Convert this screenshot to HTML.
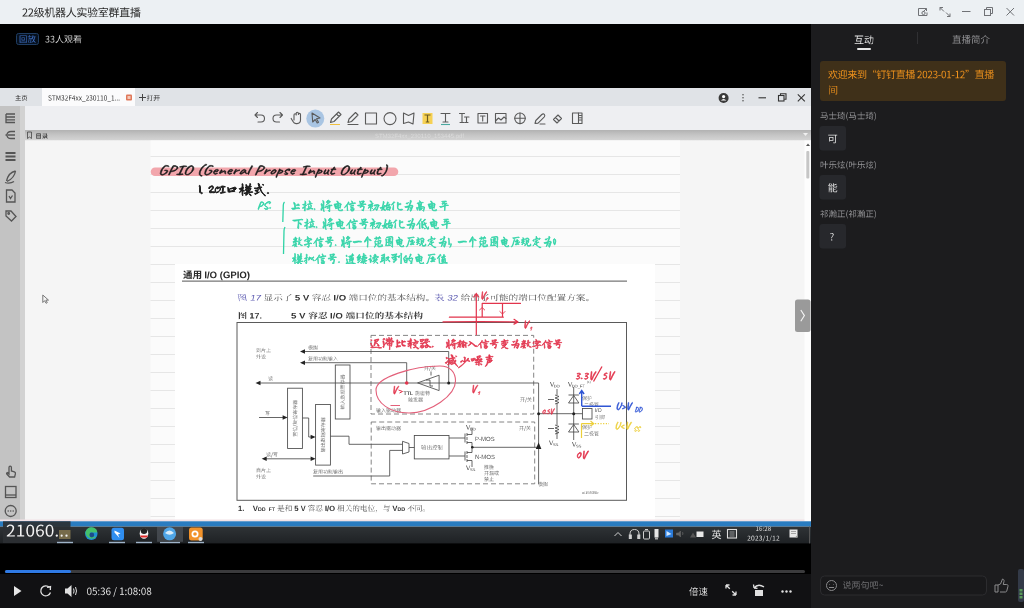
<!DOCTYPE html>
<html><head><meta charset="utf-8"><style>
*{margin:0;padding:0}
html,body{width:1024px;height:608px;overflow:hidden;background:#000;font-family:"Liberation Sans",sans-serif}
svg{display:block;filter:blur(.35px)}
</style></head><body>
<svg width="1024" height="608" viewBox="0 0 1024 608"><rect x="0" y="0" width="1024" height="24" fill="#ecf0f3"/>
<rect x="0" y="24" width="811" height="584" fill="#000"/>
<rect x="811" y="24" width="213" height="584" fill="#1c1c1e"/>
<path transform="scale(0.2)" fill="#2a2a2a" d="M112 82l26 0 0-4-18 1 11-13 4-7 1-6-1-5-2-3-4-3-8 0-4 1-5 4 3 3 6-4 6 0 2 2 2 6-1 5-4 6-14 15zm29 0l26 0 0-4-18 1 12-13 3-7 1-6-1-5-2-3-4-3-8 0-4 1-5 4 3 3 6-4 6 0 2 2 2 6-1 5-4 6-14 15zm29 -3l1 4 19-7-1-3zm20 -39l0 4 6 0-1 12-1 11-3 10-5 7 4 3 3-5 2-6 4-13 6 12-5 5-6 4 3 3 6-4 5-5 5 5 5 4 3-4-5-3-5-5 5-8 3-11-3-1-6 0 4-15zm10 4l9 0-4 15 9 0-2 7-4 6-5-8-3-9zm-29 15l9-1-7 9-3 2 1 4 18-6 0-4-11 3 12-16-4-2-3 6-8 1 10-17-4-2-7 14-4 5zm78 -20l0 25-1 7-3 7-4 6 3 3 5-7 2-8 2-8 0-21 10 0 1 40 2 3 7 0 2-4 0-8-3-2 0 10-4 0-1-1 0-42zm-15 -3l0 12-10 0 0 4 9 0-4 12-6 9 2 4 5-8 4-9 0 27 4 0 0-25 5 8 3-4-8-9 0-5 8 0 0-4-8 0 0-12zm52 6l9 0 0 8-9 0zm23 0l10 0 0 8-10 0zm0 14l7 3-16 0 3-5-4-1 0-14-17 0 0 15 17 0-4 5-17 0 0 4 13 0-6 5-8 4 2 3 3-2 0 14 4 0 0-2 9 0 0 2 4 0 0-17-10 0 8-7 10 0 9 7-10 0 0 17 3 0 0-2 10 0 0 2 4 0 0-14 3 1 3-3-9-3-8-5 15 0 0-4-9 0 1-1-8-4zm-4 -17l0 15 18 0 0-15zm-19 43l0-8 9 0 0 8zm23 0l0-8 10 0 0 8zm45 -46l-1 10-2 13-7 13-13 11 3 4 9-7 6-7 5-8 2-9 3 8 4 9 7 7 9 6 3-3-12-9-7-11-4-11-1-7 0-9zm58 41l10 4 9 6 2-4-9-5-10-4zm-17 -25l8 6 3-3-8-6zm-5 8l8 7 3-3-9-6zm-3 -17l0 11 4 0 0-8 37 0 0 8 4 0 0-11-19 0-3-7-4 1 2 6zm-1 25l0 4 20 0-3 4-4 3-12 4 2 4 8-3 6-3 5-4 3-5 22 0 0-4-21 0 1-8 1-11-4 0-1 11-2 8zm51 6l1 4 14-4 0-3zm28 -21l0 4 16 0 0-4zm-4 10l4 13 3-1-4-13zm10 -2l2 13 4 0-3-13zm-30 -15l-1 19 14 0-1 13-1 4-8 1 1 3 7 0 2-1 2-2 2-10 0-11-4 0 2-23-17 0 0 3 13 0-2 20-6 0 1-15zm31 -10l-7 11-9 8 3 3 7-7 7-8 6 8 8 7 2-4-11-10-3-4 1-3zm-13 45l0 3 29 0 0-3-9 0 8-19-4-1-7 20zm38 -10l0 3 17 0 0 8-22 0 0 3 49 0 0-3-22 0 0-8 17 0 0-3-17 0 0-6-5 0 0 6zm3 -5l30-3 3 3 3-2-10-10-3 2 4 4-21 1 9-8 20 0 0-3-36 0 0 3 11 0-7 6-5 3zm13 -29l2 4-22 0 0 10 4 0 0-6 39 0 0 6 4 0 0-10-20 0-3-5zm59 1l4 9 4-1-4-9zm17 -2l-4 10 4 1 4-10zm-19 34l0 4 11 0 0 13 4 0 0-13 11 0 0-4-11 0 0-8 8 0 0-4-8 0 0-7 9 0 0-4-22 0 0 4 9 0 0 7-9 0 0 4 9 0 0 8zm-6 -18l0 5-8 0 1-5zm-16 -13l0 4 6 0 0 5-9 0 0 4 8 0-1 5-4 0 0 4 4 0-3 7-5 6 3 3 4-5 0 15 3 0 0-3 15 0 0-18-15 0 2-5 12 0 0-9 3 0 0-4-3 0 0-9zm16 9l-6 0 0-5 6 0zm-10 22l11 0 0 10-11 0zm52 -21l0 32-7 0 0 4 50 0 0-4-8 0 0-32-18 0 1-4 23 0 0-4-22 0 1-4-5-1 0 5-21 0 0 4 20 0-1 4zm4 12l27 0 0 4-27 0zm0 -4l0-4 27 0 0 4zm0 11l27 0 0 5-27 0zm0 13l0-5 27 0 0 5zm84 -39l-4 9-3 0 0-9 12-2-2-3-28 3 1 3 13-1 0 9-14 0 0 3 11 0-6 6-8 4 3 3 3-1 0 21 4 0 0-3 19 0 0 3 4 0 0-21 2 1 2-3-7-4-6-6 12 0 0-3-8 0 4-8zm-21 2l3 7 3-2-3-6zm10 11l0 9 4 0 0-9 5 6 7 5-27 0 6-5zm0 14l0 4-7 0 0-4zm4 0l8 0 0 4-8 0zm-4 8l0 4-7 0 0-4zm4 0l8 0 0 4-8 0zm-28 -41l0 11-7 0 0 4 7 0 0 12-8 2 1 4 7-2 0 16-6 0 1 4 6 0 2-2 1-20 5-2 0-4-5 2 0-10 6 0 0-4-6 0 0-11z"/>
<g fill="none" stroke="#707276" stroke-width="1">
  <path d="M924.5 8.5 h-6 v7 h8.5 v-3"/><path d="M923 12 l3.5 -3.5 M924 8.5 h2.5 v2.5"/><circle cx="923.5" cy="13" r="1.6"/>
  <path d="M940 7.5 l4 4 M940 7.5 v3 M940 7.5 h3 M950 16.5 l-4 -4 M950 16.5 v-3 M950 16.5 h-3"/>
  <path d="M962 11.5 H970.5"/>
  <rect x="984.5" y="9.5" width="6" height="6"/><path d="M986.5 9.5 V7.5 H992.5 V13.5 H990.5"/>
  <path d="M1006.5 8 L1014 15.5 M1014 8 L1006.5 15.5"/>
</g>
<rect x="16.5" y="33.5" width="22" height="11" rx="2" fill="#06101d" stroke="#1f3d63" stroke-width="1"/>
<path transform="scale(0.2)" fill="#3f6fc4" d="M111 190l10 0 0 9-10 0zm-3 -3l0 15 16 0 0-15zm-10 -10l0 37 4 0 0-2 29 0 0 2 3 0 0-37zm4 32l0-29 29 0 0 29zm44 -33l2 6 3-1-2-6zm-7 6l0 3 5 0 0 9-1 9-1 5-3 4 2 2 3-4 2-5 1-11 6 0-1 17-5 0 0 3 7 0 1-3 1-4 0-16-9 0 0-6 11 0 0-3zm25 4l8 0-4 14zm0 -11l-3 11-5 8 3 3 3-6 4 12-4 5-6 4 2 2 5-3 5-5 4 5 5 3 2-2-5-4-4-5 3-7 2-10 3 0 0-3-13 0 2-7z"/>
<path transform="scale(0.2)" fill="#d8d8d8" d="M237 213l4-1 3-1 3-3 0-4-2-6-5-3 5-3 1-2 0-6-2-3-3-2-4 0-5 1-4 3 2 2 3-2 4-1 2 1 3 2 0 5-2 2-3 1-4 1 0 3 5 0 3 2 2 2 0 5-4 3-2 1-5-1-4-3-2 3 4 3zm25 0l4-1 3-1 3-3 0-4-2-6-5-3 5-3 1-2 0-6-2-3-3-2-4 0-5 1-5 3 3 2 3-2 4-1 2 1 3 2 0 5-2 2-3 1-4 1 0 3 5 0 3 2 2 2 0 5-4 3-2 1-5-1-4-3-2 3 4 3zm34 -38l-1 7-2 11-5 11-11 9 3 3 7-5 5-6 3-7 3-7 5 13 6 7 7 5 2-3-9-7-6-9-4-16 0-6zm45 2l0 24 3 0 0-21 13 0 0 21 4 0 0-24zm8 7l-1 14-1 5-4 6-7 5 2 2 9-7 4-8 0 10 1 3 7 1 2 0 1-2 1-7-2-1-1 7-5 1-1-1 0-12-3 0 1-16zm-26 3l7 12-4 7-5 6 3 2 4-5 4-6 3 7 3-2-4-9 3-10 1-10-2-1-14 0 0 3 13 0-3 14-7-9zm57 16l20 0 0 3-20 0zm0 -3l0-3 20 0 0 3zm0 8l20 0 0 4-20 0zm22 -33l-14 2-18 0 1 3 12 0-1 3-11 0 0 2 10 0-1 4-12 0 0 3 10 0-5 6-7 5 3 3 8-7 0 17 3 0 0-2 20 0 0 2 3 0 0-21-23 0 2-3 25 0 0-3-23 0 1-4 20 0 0-2-19 0 1-4 17-2z"/>
<path transform="scale(0.2)" fill="#ededed" d="M4273 216l0 4 45 0 0-4-13 0 4-26-21 0 1-8 27 0 0-4-42 0 0 4 11 0-5 26 23 0-2 8zm14 -22l17 0-1 10-18 0zm37 -14l0 3 20 0 0-3zm29 -4l-1 11-7 0 0 4 7 0-2 16-3 6-4 6 3 2 4-6 3-7 3-17 8 0-1 19-2 7-9 0 2 4 9-1 2-4 2-29-11 0 0-11zm-29 39l17-4 1 3 4-1-6-14-3 1 3 8-12 2 6-15 11 0 0-4-22 0 0 4 7 0-4 11-3 6z"/>
<rect x="857" y="48" width="14" height="2" rx="1" fill="#e8e8e8"/>
<rect x="917" y="32" width="1" height="12" fill="#303033"/>
<path transform="scale(0.2)" fill="#8f8f92" d="M4769 186l0 28-7 0 0 3 43 0 0-3-6 0 0-28-15 0 0-4 20 0 0-3-19 0 1-4-4 0-1 4-17 0 0 3 17 0-1 4zm3 10l23 0 0 4-23 0zm0 -3l0-4 23 0 0 4zm0 10l23 0 0 4-23 0zm0 11l0-5 23 0 0 5zm74 -34l-4 7-2 0 0-7 10-2-2-3-23 3 0 3 11-1 0 7-12 0 0 3 9 0-5 6-6 3 2 3 3-2 0 19 3 0 0-2 17 0 0 1 3 0 0-18 2 1 2-2-6-4-5-5 9 0 0-3-6 0 3-6zm-18 2l2 5 3-1-3-5zm8 10l0 7 4 0 0-8 4 5 6 4-23 0 5-4zm0 11l0 4-6 0 0-4zm3 0l8 0 0 4-8 0zm-3 7l0 4-6 0 0-4zm3 0l8 0 0 4-8 0zm-24 -35l0 10-6 0 0 3 6 0 0 10-6 2 1 4 5-3 0 14-5 0 1 4 5-1 2-1 1-17 5-2-1-3-4 2 0-9 5 0 0-3-5 0 0-10zm45 18l0 26 4 0 0-26zm2 -4l6 6 2-2-5-5zm8 8l0 16 18 0 0-16zm-5 -22l-3 6-5 6 3 2 5-7 3 0 3 6 3-1-2-5 6 0 0-3-11 0 1-3zm18 0l-2 6-4 5 3 2 4-6 4 0 3 6 3-1-3-5 8 0 0-3-14 0 2-3zm1 31l0 4-11 0 0-4zm-11 -7l11 0 0 4-11 0zm-1 -10l0 4 22 0 0 22-7 0 1 4 9-2 0-2 0-26zm61 5l0 25 4 0 0-25zm-17 0l-1 10-1 4-3 5-5 3 3 3 5-4 4-5 1-5 0-11zm10 -19l-4 5-5 5-6 4-7 3 2 4 11-7 9-8 9 8 11 6 3-3-12-6-5-4-4-4 1-1z"/>
<rect x="820" y="61" width="186" height="40" rx="3" fill="#3f3019"/>
<path transform="scale(0.2)" fill="#ee911c" d="M4143 364l9 12-5 8-6 5 3 3 5-5 5-7 4 7 2-2-4-9 3-9 2-12-2 0-17 0 0 3 16 0-5 15-8-12zm24 -15l-2 10-4 9 3 2 5-10 14 0-2 7 3 1 3-11-2-1-15 1 1-7zm5 14l-1 10-1 6-5 7-7 6 2 3 6-4 3-4 5-9 4 10 4 4 4 3 3-3-6-4-3-5-5-13 0-7zm20 -9l9 7 2-3-9-6zm9 12l-10 0 0 4 6 0 0 16-7 6 3 3 3-4 3-2 11 5 25 0 1-4-13 1-12-1-6-2-4-2zm18 -13l0 36 4 0 0-33 8 0 0 23-6 0 1 4 6-1 2-1 0-1 0-27zm-14 30l13-5 0-3-8 3 0-22 9-4-3-3-10 5 0 22-1 3-1 1zm69 -23l-5 10 4 1 5-10zm-28 1l4 10 4-2-5-9zm14 -12l0 6-18 0 0 4 18 0 0 12-20 0 0 4 17 0-8 8-11 7 3 3 5-3 10-8 4-5 0 18 4 0 0-18 8 9 10 7 3-3-10-7-9-8 18 0 0-4-20 0 0-12 18 0 0-4-18 0 0-6zm57 4l0 31 4 0 0-31zm10 -3l0 40-8 0 2 4 8-1 2-2 0-41zm-39 39l1 3 25-4 0-4-11 2 0-8 10 0 0-3-10 0 0-5-3 0 0 5-10 0 0 3 10 0 0 9zm3 -20l19-2 1 3 3-2-7-11-3 2 4 5-13 1 6-9 13 0 0-4-25 0 0 4 8 0-4 6-3 4zm81 -18l-1-2-2 1-4 5 0 5 2 2 3 0 2-1-1-4-4 0 2-4zm9 0l-1-2-2 1-3 5 0 5 2 2 3 0 1-1 0-4-4 0 1-4zm24 2l0 4 13 0 0 33-8 1 2 4 8-1 1-2 1-2 0-33 8 0 0-4zm-14 -4l-3 7-5 5 2 4 5-7 13 0 0-3-11 0 2-5zm1 46l12-7 0-3-8 3 0-11 9 0 0-3-9 0 0-7 7 0 0-3-16 0 0 3 5 0 0 7-7 0 0 3 7 0 0 11-2 3zm62 -42l0 4 12 0 0 33-8 1 2 4 8-1 2-2 0-2 0-33 8 0 0-4zm-15 -4l-3 7-4 5 2 4 5-7 13 0 0-3-11 0 2-5zm1 46l13-7-1-3-8 3 0-11 9 0 0-3-9 0 0-7 7 0 0-3-16 0 0 3 6 0 0 7-8 0 0 3 8 0 0 11-2 3zm48 -34l0 29-7 0 0 3 45 0 0-3-7 0 0-29-16 0 1-4 21 0 0-4-20 0 0-4-4 0 0 4-19 0 0 4 18 0 0 4zm4 10l24 0 0 4-24 0zm0 -3l0-4 24 0 0 4zm0 10l24 0 0 4-24 0zm0 12l0-5 24 0 0 5zm75 -36l-3 8-3 0 0-8 11-2-2-3-25 3 1 3 11-1 0 8-13 0 0 3 10 0-5 6-7 3 2 3 3-1 0 19 3 0 0-2 18 0 0 2 4 0 0-19 1 1 3-3-7-4-5-5 10 0 0-3-7 0 4-7zm-19 2l3 6 3-1-3-6zm9 10l0 9 4 0 0-9 5 5 5 5-24 0 6-5zm0 12l0 5-7 0 0-5zm3 0l8 0 0 5-8 0zm-3 8l0 4-7 0 0-4zm3 0l8 0 0 4-8 0zm-25 -37l0 10-6 0 0 4 6 0 0 10-7 2 1 4 6-2 0 14-5 0 1 4 5 0 2-2 1-18 5-2-1-3-4 2 0-9 5 0 0-4-5 0 0-10zm52 42l23 0 0-4-16 0 10-11 3-6 1-6-1-4-2-3-3-3-8 0-3 1-4 4 2 3 6-4 5 0 2 1 2 6-1 5-3 5-13 13zm38 1l4-2 4-3 2-6 1-8-1-9-2-6-4-3-4-1-5 1-4 3-2 6-1 9 1 8 2 6 4 3zm0 -4l-3-1-2-3-2-5 0-6 0-7 2-5 2-3 3-1 3 1 2 3 1 5 1 7-1 6-1 5-2 3zm14 3l23 0 0-4-16 0 10-11 3-6 1-6 0-4-2-3-4-3-8 0-2 1-5 4 3 3 5-4 5 0 2 1 2 6-1 5-3 5-13 13zm37 1l5-1 4-2 2-3 1-5-1-3-1-3-6-3 5-4 1-2 1-3-1-4-2-3-4-2-4 0-6 1-4 3 2 3 4-3 4-1 2 1 4 3 0 5-2 2-3 2-5 0 0 4 5 0 4 2 2 2 0 6-4 3-3 1-5-1-4-3-3 3 5 3zm15 -13l13 0 0-4-13 0zm28 13l4-2 4-3 2-6 1-8-1-9-2-6-4-3-4-1-5 1-4 3-2 6-1 9 1 8 2 6 4 3zm0 -4l-3-1-2-3-2-5 0-6 0-7 2-5 2-3 3-1 3 1 2 3 1 5 1 7-1 6-1 5-2 3zm16 3l20 0 0-4-7 0 0-33-3 0-8 3 0 3 6 0 0 27-8 0zm24 -12l13 0 0-4-13 0zm18 12l20 0 0-4-7 0 0-33-4 0-7 3 0 3 6 0 0 27-8 0zm24 0l23 0 0-4-16 0 10-11 3-6 1-6 0-4-3-3-3-3-8 0-2 1-5 4 2 3 6-4 5 0 2 1 2 6-1 5-3 5-13 13zm35 -30l1 2 3-2 3-4 0-5-2-3-3 0-1 2 0 3 4 1-1 3zm-9 0l1 2 2-2 4-4 0-5-2-3-3 0-2 2 1 3 3 1-1 3zm56 0l0 29-7 0 0 3 45 0 0-3-7 0 0-29-16 0 1-4 20 0 0-4-19 0 0-4-4 0 0 4-19 0 0 4 18 0-1 4zm3 10l24 0 0 4-24 0zm0 -3l0-4 24 0 0 4zm0 10l24 0 0 4-24 0zm0 12l0-5 24 0 0 5zm76 -36l-4 8-3 0 0-8 12-2-2-3-25 3 0 3 12-1 0 8-13 0 0 3 10 0-6 6-6 3 2 3 3-1 0 19 3 0 0-2 18 0 0 2 3 0 0-19 2 1 2-3-6-4-5-5 10 0 0-3-7 0 3-7zm-19 2l3 6 3-1-3-6zm9 10l0 9 3 0 0-9 5 5 6 5-24 0 5-5zm0 12l0 5-7 0 0-5zm3 0l8 0 0 5-8 0zm-3 8l0 4-7 0 0-4zm3 0l8 0 0 4-8 0zm-25 -37l0 10-6 0 0 4 6 0 0 10-7 2 1 4 6-2 0 14-6 0 1 4 6 0 2-2 0-18 6-2-1-3-5 2 0-9 6 0 0-4-6 0 0-10z"/>
<path transform="scale(0.2)" fill="#ee911c" d="M4145 438l0 35 3 0 0-35zm0 -9l6 8 3-2-6-7zm14 25l12 0 0 7-12 0zm0 -10l12 0 0 7-12 0zm-3 -3l0 23 18 0 0-23zm2 -11l0 3 24 0 0 36-6 0 1 4 7-1 1-1 1-3 0-38z"/>
<path transform="scale(0.2)" fill="#98989b" d="M4102 586l0 4 28 0 0-4zm8 -18l-2 13 28 0-2 10-1 4-9 0 1 3 8 0 2-1 2-5 2-14-7 0 1-16-27 0 0 3 24 0-2 13-16 0 1-10zm52 -9l0 14-17 0 0 3 17 0 0 17-15 0 0 3 34 0 0-3-16 0 0-17 18 0 0-3-18 0 0-14zm50 0l0 5-10 0 0 2 9 0-3 5-7 3 2 2 6-2 4-4 10 6 2-2-11-6 0-2 11 0 0-2-10 0 0-5zm-11 18l0 2 18 0 0 16-5 1 0 2 8 0 0-3 0-16 4 0 0-2zm5 8l6 0 0 5-6 0zm-3 -3l0 13 3 0 0-2 9 0 0-11zm-17 9l1 3 13-4 0-3-5 1 0-11 4 0 0-3-4 0 0-9 5 0 0-3-13 0 0 3 5 0 0 9-5 0 0 3 5 0 0 12zm52 12l2-1-4-10-1-10 1-11 4-10-2-1-5 10-2 12 2 11zm6 -17l0 4 28 0 0-4zm7 -18l-1 13 27 0-1 10-2 4-8 0 1 3 8 0 2-1 2-5 2-14-8 0 2-16-27 0 0 3 24 0-2 13-16 0 1-10zm53 -9l0 14-17 0 0 3 17 0 0 17-15 0 0 3 33 0 0-3-15 0 0-17 18 0 0-3-18 0 0-14zm50 0l0 5-10 0 0 2 9 0-3 5-7 3 2 2 6-2 4-4 10 6 2-2-11-6 0-2 11 0 0-2-10 0 0-5zm-11 18l0 2 18 0 0 16-6 1 1 2 7 0 1-3 0-16 4 0 0-2zm5 8l6 0 0 5-6 0zm-3 -3l0 13 3 0 0-2 9 0 0-11zm-17 9l1 3 13-4 0-3-5 1 0-11 4 0 0-3-4 0 0-9 5 0 0-3-13 0 0 3 5 0 0 9-5 0 0 3 5 0 0 12zm46 12l4-10 2-11-2-12-4-10-3 1 4 10 2 11-2 10-4 10z"/>
<rect x="819.5" y="126" width="26.5" height="24.5" rx="3" fill="#27282c"/>
<path transform="scale(0.2)" fill="#e6e6e6" d="M4141 674l0 4 35 0 0 34-2 0-9 0 2 4 8 0 3-1 2-4 0-33 6 0 0-4zm9 15l13 0 0 11-13 0zm-4 -4l0 23 4 0 0-4 17 0 0-19z"/>
<path transform="scale(0.2)" fill="#98989b" d="M4103 809l0 27 3 0 0-3 10 0 0-11 10 0 0 21 4 0 0-21 11 0 0-3-11 0 0-14-4 0 0 14-10 0 0-10zm3 3l7 0 0 18-7 0zm47 16l-9 11 3 2 9-12zm19 2l8 11 3-2-8-11zm-24 -5l15 0 0 15-7 0 1 3 8-1 1-3 0-14 16 0 0-4-16 0 0-8-3 0 0 8-12 0 2-11 14 0 13-2-2-3-13 2-15 1-1 10-2 4zm41 -12l-2 10 2 1 2-11zm10 -1l-3 9 2 0 3-8zm11 -7l3 6-11 0 0 3 9 0-5 8-3 3 1 3 10-1-7 8-5 4 1 3 19-2 1 3 3-1-7-12-2 1 3 6-12 1 7-9 8-10-3-1-4 6-9 0 7-10 11 0 0-3-11 0 2-1-3-6zm-17 0l-1 26-2 5-3 5 2 2 3-5 2-6 5 6 2-2-6-7 1-24zm45 43l2-1-4-10-1-10 1-11 4-10-2-1-5 10-2 12 2 11zm7 -39l0 27 3 0 0-3 10 0 0-11 10 0 0 21 3 0 0-21 12 0 0-3-12 0 0-14-3 0 0 14-10 0 0-10zm3 3l7 0 0 18-7 0zm46 16l-8 11 3 2 8-12zm20 2l8 11 3-2-8-11zm-24 -5l15 0 0 15-7 0 1 3 8-1 1-3 0-14 16 0 0-4-16 0 0-8-3 0 0 8-12 0 2-11 14 0 13-2-2-3-13 2-15 1-2 10-1 4zm40 -12l-1 10 2 1 2-11zm11 -1l-3 9 2 0 3-8zm11 -7l3 6-11 0 0 3 9 0-5 8-3 3 1 3 9-1-6 8-5 4 1 3 19-2 1 3 2-1-6-12-2 1 3 6-13 1 8-9 8-10-3-1-4 6-9 0 7-10 11 0 0-3-11 0 2-1-4-6zm-17 0l-1 26-2 5-3 5 2 2 3-5 2-6 5 6 2-2-6-7 0-24zm39 43l4-10 2-11-2-12-4-10-3 1 4 10 2 11-2 10-4 10z"/>
<rect x="819.5" y="175" width="26.5" height="24.5" rx="3" fill="#27282c"/>
<path transform="scale(0.2)" fill="#e6e6e6" d="M4158 936l0 5-11 0 0-5zm-14 -3l0 28 3 0 0-10 11 0-1 7-5 0 1 3 7 0 1-2 0-2 0-24zm3 11l11 0 0 4-11 0zm34 -25l-11 5 0-8-4 0 0 16 1 4 5 1 9 0 4-1 1-6-3-2-1 6-11 0-1-1 0-6 14-5zm1 23l-12 5 0-8-4 0 0 17 1 4 5 1 9 0 3 0 1-2 2-6-4-2-1 6-11 1-1-1 0-7 14-6zm-39 -12l16-2 1 3 4-2-7-11-3 2 4 5-11 1 6-9-4-2-4 8-4 3z"/>
<path transform="scale(0.2)" fill="#98989b" d="M4108 1051l4 6-9 0 0 3 13 0-6 7-8 6 1 3 8-5 0 17 3 0 0-18 5 6 2-3-7-6 6-9-2-2-6 1 2-2-3-4-1-2zm16 1l0 36 3 0 0-33 9 0-6 11 5 5 1 2 0 5-2 1-5 0 1 3 4 0 3-1 2-3-1-7-4-6 6-12-2-2zm32 17l6 0 0 3-6 0zm0 -6l6 0 0 3-6 0zm10 6l3 6 2-1-4-6zm8 0l4 5 1-1-3-5zm-29 -17l5 5 2-1-5-6zm-1 11l5 6 2-2-5-5zm1 23l3 2 1-3 3-11-3-1zm20 -5l1 2 5-4 0 7-5 0 1 2 4 0 2-1 0-6 2 2 5-5-1 7-4 1 1 2 4 0 2-1 0-24 2-2-7-7-1-3 0-1-2-1-4 7-5 5 1 2 0 3 5 0 0 10-5 4 0-2-6 0 0-4 5 0 0-14-5 0 0-3 5 0 0-3-5 0 0-4-2 0 0 4-5 0 0 3 5 0 0 3-5 0 0 14 5 0 0 4-6 0 0 3 6 0 0 7 2 0 0-7zm9 -18l0 3 6 0 0 9-7 6 0-18-6 0 4-4 3-5 7 9zm19 0l0 20-6 0 0 3 38 0 0-3-16 0 0-13 13 0 0-3-13 0 0-11 15 0 0-4-35 0 0 4 17 0 0 27-10 0 0-20zm45 30l2-1-4-10-1-10 1-11 4-10-2-1-5 10-2 12 2 11zm12 -42l4 6-9 0 0 3 13 0-7 7-7 6 1 3 7-5 0 17 4 0 0-18 5 6 2-3-7-6 6-9-2-2-6 1 2-2-3-4-1-2zm16 1l0 36 3 0 0-33 9 0-6 11 5 5 1 2 0 5-2 1-5 0 1 3 4 0 3-1 2-3-1-7-4-6 6-12-2-2zm31 17l7 0 0 3-7 0zm0 -6l7 0 0 3-7 0zm11 6l3 6 2-1-4-6zm8 0l3 5 2-1-3-5zm-29 -17l5 5 2-1-5-6zm-1 11l5 6 2-2-5-5zm1 23l3 2 1-3 2-11-2-1zm20 -5l1 2 5-4 0 7-5 0 1 2 4 0 2-1 0-6 1 2 5-5 0 7-4 1 1 2 4 0 2-1 0-24 2-2-7-7-2-3 1-1-3-1-3 7-5 5 1 2 0 3 5 0 0 10-6 4 0-2-5 0 0-4 5 0 0-14-5 0 0-3 5 0 0-3-5 0 0-4-3 0 0 4-5 0 0 3 5 0 0 3-4 0 0 14 4 0 0 4-5 0 0 3 5 0 0 7 3 0 0-7zm9 -18l0 3 5 0 0 9-6 6 0-18-6 0 4-4 3-5 7 9zm19 0l0 20-6 0 0 3 38 0 0-3-16 0 0-13 13 0 0-3-13 0 0-11 15 0 0-4-35 0 0 4 17 0 0 27-10 0 0-20zm39 30l4-10 2-11-2-12-4-10-3 1 4 10 2 11-2 10-4 10z"/>
<rect x="819.5" y="224" width="26.5" height="24.5" rx="3" fill="#27282c"/>
<path transform="scale(0.2)" fill="#e6e6e6" d="M4156 1191l4 0 1-5 6-8 2-5-1-3-2-3-3-2-7 0-6 4 2 2 3-2 4-1 2 1 3 2 0 3-1 4-6 8zm3 12l2-1 1-2-1-3-2-1-3 1-1 3 1 2z"/>
<rect x="820.5" y="576" width="166" height="19" rx="4" fill="#19191b" stroke="#2c2c2f"/>
<g fill="none" stroke="#8a8a8c" stroke-width="1">
    <circle cx="831.5" cy="585.5" r="5"/><path d="M829 584.5 h.5 M833.5 584.5 h.5 M829 587.5 h5"/>
    <path d="M995 592 h3 v-7 h-3 z M998 585 l2.5 -1 l2 -5 c1 0 1.8 1 1.5 2.5 l-.8 3 h3.5 c1 0 1.5 .8 1.3 1.7 l-1.3 5 c-.2 .6 -.7 .8 -1.3 .8 h-5.4"/>
</g>
<path transform="scale(0.2)" fill="#6f6f72" d="M4217 2908l7 7 3-2-7-7zm16 9l15 0 0 8-15 0zm-13 27l11-8-1-3-6 4 0-18-9 0 0 3 6 0 0 15-3 4zm10 -30l0 14 5 0-2 9-3 4-4 3 2 2 5-3 3-4 3-11 4 0 0 13 1 4 3 0 6 0 2-1 1-6-3-1-1 5-6 0 0-14 6 0 0-14-5 0 4-8-4-1-4 9-7 0 3-2-4-7-3 1 4 8zm32 3l0 29 3 0 0-26 7 0-1 9-2 4-3 4 2 3 4-5 2-6 4 5 2-2-5-7 1-5 8 0-1 9-2 4-4 4 3 3 4-6 2-5 6 8 2-2-7-10 0-5 8 0 0 22-9 1 2 3 7 0 3-2 0-27-11 0 0-6 13 0 0-3-40 0 0 3 12 0 0 6zm14 -6l8 0 0 6-8 0zm37 10l0 20 3 0 0-4 15 0 0-16zm3 3l11 0 0 10-11 0zm-1 -19l-4 11-7 8 3 2 8-11 25 0-1 20-2 7-1 1-9 0 2 3 10 0 3-5 1-5 1-25-27 0 2-5zm36 4l0 29 3 0 0-4 9 0 0-25zm3 3l6 0 0 19-6 0zm16 -1l6 0 0 14-6 0zm-3 -3l0 34 1 2 2 1 18 0 1-2 2-6-3-1-1 5-1 1-15 0-1-14 16 0 0 3 3 0 0-23zm19 17l-6 0 0-14 6 0zm23 5l4-1 3-4-3-2-1 3-2 0-7-3-4-1-5 5 3 1 1-2 2-1z"/>
<rect x="1018" y="569" width="6" height="33" rx="2" fill="#333a48"/>
<rect x="1019.5" y="589" width="3" height="2.5" fill="#5a9a5a"/><rect x="1019.5" y="592.5" width="3" height="2.5" fill="#5a9a5a"/><rect x="1019.5" y="596" width="3" height="2.5" fill="#5a9a5a"/>
<rect x="0" y="574" width="811" height="34" fill="#111113"/>
<rect x="5" y="570" width="800" height="3" rx="1.5" fill="#3b3b3d"/>
<rect x="5" y="570" width="66" height="3" rx="1.5" fill="#2f7ae5"/>
<g transform="translate(0,574)" fill="none" stroke="#e0e0e0" stroke-width="1.3">
    <path d="M14 12 L21.5 17 L14 22 Z" fill="#e6e6e6" stroke="none"/>
    <path d="M49.5 13.5 A5 5 0 1 0 50.5 18.5"/><path d="M47 13.3 L50.5 12.5 L50.3 16" />
    <path d="M65 14.5 h2.5 l4 -3.5 v12 l-4 -3.5 h-2.5 z" fill="#e0e0e0" stroke="none"/>
    <path d="M73.5 14.5 q1.2 2.5 0 5 M75.5 13 q2 4 0 8" stroke-width="1"/>
    <path d="M726 11 l3.8 3.8 M726 11 v3.5 M726 11 h3.5 M736 21 l-3.8 -3.8 M736 21 v-3.5 M736 21 h-3.5"/>
    <path d="M754 14 q4 -5 10 -1 M754 14 l-.5 -3.5 M754 14 l3.5 .3"/><rect x="755" y="16" width="8" height="6" fill="#e0e0e0" stroke="none"/>
    <circle cx="782.5" cy="17.5" r="1.2" fill="#e0e0e0" stroke="none"/><circle cx="786.5" cy="17.5" r="1.2" fill="#e0e0e0" stroke="none"/><circle cx="790.5" cy="17.5" r="1.2" fill="#e0e0e0" stroke="none"/>
</g>
<path transform="scale(0.2)" fill="#e2e2e2" d="M446 2976l5-2 4-3 2-6 1-8-1-9-2-6-4-3-5-1-4 1-4 3-2 6-1 9 1 8 2 6 4 3zm0 -4l-2-1-3-3-1-5-1-6 1-7 1-5 3-3 2-1 3 1 2 3 2 5 0 7 0 6-2 5-2 3zm27 4l4-1 4-3 3-4 1-5-1-5-2-4-4-2-4-1-6 2 1-11 14 0 0-4-18 0-1 17 2 2 5-2 5 0 2 2 2 3 0 3 0 4-2 3-3 1-6 1-6-4-2 3 5 3zm21 -20l2-1 1-3-1-3-2-1-2 1-1 3 1 3zm0 20l2-1 1-3-1-2-2-1-2 1-1 2 1 3zm20 0l4-1 4-2 2-3 1-5 0-3-2-3-5-3 4-4 2-2 0-3-1-4-2-3-3-2-5 0-5 1-5 3 3 3 3-3 4-1 3 1 3 3 0 5-2 2-3 2-5 0 0 4 6 0 3 2 2 2 0 6-4 3-3 1-5-1-4-3-2 3 4 3zm29 0l4-1 3-3 2-3 1-5 0-5-3-4-3-2-6 0-6 4 1-8 2-4 3-3 5 0 4 2 3-3-4-2-5-1-5 1-4 3-3 6-2 10 1 7 3 6 4 4zm-8 -16l6-4 4 0 2 2 1 2 0 7-1 3-4 2-3-1-3-2-1-4zm31 24l4 0 14-49-3 0zm34 -9l20 0 0-4-7 0 0-33-4 0-8 3 0 3 7 0 0 27-8 0zm30 -19l2-1 1-3-1-3-2-1-3 1-1 3 1 3zm0 20l2-1 1-3-1-2-2-1-3 1-1 2 1 3zm20 0l5-2 3-3 3-6 0-8 0-9-3-6-3-3-5-1-5 1-3 3-3 6 0 9 0 8 3 6 3 3zm0 -4l-3-1-2-3-2-5 0-6 0-7 2-5 2-3 3-1 3 1 2 3 1 5 1 7-1 6-1 5-2 3zm27 4l5-1 4-2 2-3 1-4-2-6-4-3 4-7 0-6-2-3-3-2-5-1-4 0-3 2-2 3 0 7 4 6-4 4-2 6 0 4 3 3 4 2zm3 -21l-6-3-2-2 0-5 3-3 5 0 3 3 0 5zm-3 17l-5-2-2-4 1-5 4-4 7 4 2 2 0 3-2 5zm21 -16l2-1 1-3-1-3-2-1-3 1-1 3 1 3zm0 20l2-1 1-3-1-2-2-1-3 1-1 2 1 3zm20 0l5-2 3-3 2-6 1-8-1-9-2-6-3-3-5-1-5 1-3 3-3 6-1 9 1 8 3 6 3 3zm0 -4l-3-1-2-3-2-5 0-6 0-7 2-5 2-3 3-1 3 1 2 3 1 5 1 7-1 6-1 5-2 3zm27 4l5-1 3-2 3-3 1-4-2-6-4-3 4-7 0-6-2-3-3-2-5-1-4 0-3 2-2 3 0 7 4 6-4 4-2 6 0 4 3 3 4 2zm3 -21l-6-3-2-2 0-5 3-3 5 0 3 3 0 5zm-3 17l-5-2-2-4 1-5 4-4 6 4 3 2 0 3-2 5z"/>
<path transform="scale(0.2)" fill="#e2e2e2" d="M3465 2945l3 8 3-1-3-8zm-1 16l0 18 3 0 0-2 16 0 0 2 3 0 0-18zm3 12l0-9 16 0 0 9zm5 -38l2 5-12 0 0 4 27 0 0-4-12 0-1-5zm10 9l-4 10-18 0 0 3 31 0 0-3-10 0 4-9zm-24 -9l-5 11-7 8 2 4 5-6 0 27 3 0 0-32 5-11zm38 4l7 8 3-2-8-8zm9 13l-10 0 0 3 7 0 0 15-8 5 3 3 3-3 3-2 11 4 23 0 1-3-24 0-9-4zm8 -2l7 0 0 6-7 0zm11 0l8 0 0 6-8 0zm-4 -15l0 5-12 0 0 3 12 0 0 4-10 0 0 12 9 0-5 6-7 4 2 2 6-4 5-5 0 11 4 0 0-11 10 8 3-2-12-9 10 0 0-12-11 0 0-4 13 0 0-3-13 0 0-5z"/>
<rect x="0" y="88" width="811" height="455" fill="#f3f3f3"/>
<rect x="0" y="88" width="811" height="18" fill="#e0e3e7"/>
<rect x="42" y="88" width="93" height="18" fill="#fbfbfc"/>
<rect x="25" y="106" width="786" height="24" fill="#eeeff2"/>
<rect x="0" y="106" width="20" height="415" fill="#c3c3c3"/>
<rect x="20" y="106" width="5" height="415" fill="#d2d2d2"/>
<defs><linearGradient id="dg" x1="0" y1="0" x2="0" y2="1"><stop offset="0" stop-color="#b2b2b2"/><stop offset=".5" stop-color="#c6c6c6"/><stop offset="1" stop-color="#d4d4d4"/></linearGradient></defs>
<rect x="25" y="130" width="786" height="10.5" fill="url(#dg)"/>
<rect x="25" y="140.5" width="786" height="380.5" fill="#f5f5f5"/>
<path transform="scale(0.2)" fill="#333" d="M86 477l5 4-13 0 0 3 11 0 0 6-9 0 0 3 9 0 0 7-12 0 0 3 28 0 0-3-13 0 0-7 10 0 0-3-10 0 0-6 11 0 0-3-10 0 2-1-6-5zm35 10l-1 8-1 3-4 2-7 2 2 2 7-2 4-3 2-3 1-9zm3 11l10 6 2-2-11-6zm-12 -15l0 14 3 0 0-12 15 0 0 12 3 0 0-14-11 0 2-4 12 0 0-2-27 0 0 2 11 0-1 4z"/>
<path transform="scale(0.2)" fill="#333" d="M250 503l3-1 3-1 2-5-1-5-11-6 0-4 2-2 4 0 4 3 1-2-3-3-4-1-5 2-2 2 0 6 3 3 8 4 1 3 0 2-3 2-2 0-4-1-3-2-1 2 3 3zm18 -1l3 0 0-22 7 0 0-3-18 0 0 3 8 0zm14 0l3 0-1-21 7 19 2 0 7-19-1 21 3 0 0-25-4 0-6 19-6-19-4 0zm32 1l5-2 2-2 1-3-2-5-3-2 3-4 0-5-1-2-5-2-4 1-3 2 2 2 5-2 1 0 2 2 0 4-3 3-3 0 0 2 6 2 1 1 0 5-2 2-2 0-4-1-2-2-2 2 3 3zm11 -1l15 0 0-2-11 0 7-8 2-4 0-7-3-4-5 0-5 3 1 2 4-3 3 0 2 1 1 4-3 7-8 10zm20 0l3 0 0-11 9 0 0-3-9 0 0-8 10 0 0-3-13 0zm25 0l3 0 0-7 3 0 0-2-3 0 0-16-3 0-10 16 0 2 10 0zm0 -9l-7 0 8-13zm8 9l3 0 4-7 5 7 3 0-6-9 6-10-3 0-4 8-4-8-4 0 6 10zm16 0l3 0 4-7 5 7 3 0-5-9 5-10-3 0-4 8-4-8-3 0 5 10zm16 5l18 0 0-2-18 0zm20 -5l15 0 0-2-11 0 7-8 2-4 0-7-4-4-5 0-5 3 2 2 4-3 3 0 1 1 1 4-2 7-8 10zm25 1l5-2 2-2 0-3-1-5-4-2 4-4 0-5-1-2-5-2-4 1-3 2 2 2 5-2 1 0 2 2 0 4-3 3-3 0 0 2 6 2 1 1 0 5-2 2-2 0-4-1-2-2-2 2 3 3zm18 0l3-1 3-2 1-5 1-5-1-6-1-4-3-3-3-1-3 1-2 3-2 4 0 6 0 5 2 5 2 2zm0 -3l-2 0-1-2-1-8 1-9 1-1 2-1 2 1 2 1 1 9-1 8-2 2zm12 2l13 0 0-2-5 0 0-23-7 2 0 2 5 0 0 19-6 0zm18 0l13 0 0-2-4 0 0-23-8 2 0 2 5 0 0 19-6 0zm24 1l4-1 2-2 1-5 1-5-1-6-1-4-2-3-4-1-3 1-2 3-1 4-1 6 1 5 1 5 2 2zm0 -3l-1 0-2-2-1-8 1-9 2-1 1-1 2 1 2 1 1 9-1 8-2 2zm10 7l17 0 0-2-17 0zm21 -5l13 0 0-2-5 0 0-23-7 2 0 2 4 0 0 19-5 0zm19 1l2-1 0-1 0-2-2-1-1 1-1 2 1 1zm9 0l2-1 0-1 0-2-2-1-1 1-1 2 1 1zm9 0l2-1 1-1-1-2-2-1-1 1-1 2 1 1z"/>
<rect x="126" y="94.5" width="6" height="6" rx="1" fill="#e0785a"/><rect x="127.5" y="96" width="3" height="3" fill="#f4c8b8"/>
<path d="M139 97.5 h7 M142.5 94 v7" stroke="#444" stroke-width="1"/>
<path transform="scale(0.2)" fill="#3a3a3a" d="M739 474l0 7-5 0 0 2 5 0 0 7-5 2 1 2 4-1 0 9-4 0 1 3 5-1 1-12 5-1 0-3-5 2 0-7 5 0 0-2-5 0 0-7zm8 3l0 2 9 0 0 23-6 0 1 3 6 0 2-2 0-2 0-22 6 0 0-2zm42 2l0 9-10 0 0-9zm-21 9l0 3 8 0-2 7-6 5 2 2 4-3 3-3 2-8 10 0 0 14 2 0 0-14 8 0 0-3-8 0 0-9 7 0 0-3-28 0 0 3 6 0 0 9z"/>
<circle cx="723.6" cy="98" r="5" fill="#3a3a3a"/><circle cx="723.6" cy="96.6" r="1.6" fill="#fff"/><path d="M720.8 100.6 q2.8 -3 5.6 0 z" fill="#fff"/>
<circle cx="743" cy="94.8" r=".8" fill="#555"/><circle cx="743" cy="97.8" r=".8" fill="#555"/><circle cx="743" cy="100.8" r=".8" fill="#555"/>
<g fill="none" stroke="#333" stroke-width="1.1"><path d="M758.5 97.8 h7.5"/><rect x="778.5" y="95.5" width="5.5" height="5.5"/><path d="M780.5 95.5 v-1.8 h5.5 v5.5 h-1.8"/><path d="M797.8 94.3 l7 7 M804.8 94.3 l-7 7"/></g>
<g fill="none" stroke="#555" stroke-width="1.3"><path d="M6 114 h9 M6 114 v8.5 h9 M6 117 h9 M6 119.8 h9"/><path d="M15 131.5 h-4 q-4 0 -4 3.5 q0 3.5 4 3.5 h4 M8 135 h7 M7 135 l-1.5 0"/><path d="M5.5 153 h10 M5.5 156.5 h10 M5.5 160 h10" stroke-width="1.8"/><path d="M15.5 171 q-7 1.5 -9 10 M15.5 171 q-1 7 -8.5 10.5 M5 182.5 q5 1.5 9 -1"/><path d="M6.5 190 h5.5 l3 3 v9 h-8.5 z M9 196 l1.5 2.5 l2 -3"/><path d="M6 211 l5 0 l5 5.5 l-4.5 4.5 l-5.5 -5 z"/><circle cx="8.7" cy="213.5" r=".8"/><path d="M9 474 v-6.5 q0 -1.3 1.2 -1.3 q1.2 0 1.2 1.3 v3.5 l3 .8 q1.3 .5 1 2 l-.8 3.2 h-5 l-2.8 -3 q-.6 -1 .5 -1.5 z"/><rect x="5.5" y="486.5" width="10.5" height="11"/><path d="M5.5 495 h10.5"/><circle cx="10.7" cy="511" r="5.5"/></g><circle cx="8.2" cy="511" r=".8" fill="#555"/><circle cx="10.7" cy="511" r=".8" fill="#555"/><circle cx="13.2" cy="511" r=".8" fill="#555"/>
<path d="M27.5 132 h4 v6.5 l-2 -1.5 l-2 1.5 z" fill="none" stroke="#444" stroke-width=".8"/>
<path transform="scale(0.2)" fill="#222" d="M185 677l16 0 0 5-16 0zm0 -3l0-4 16 0 0 4zm0 10l16 0 0 5-16 0zm-3 -17l0 27 3 0 0-2 16 0 0 2 3 0 0-27zm31 15l6 4 2-2-6-4zm0 -15l0 2 19 0 0 3-18 0 0 2 18 0-1 3-20 0 0 2 12 0 0 6-12 5 2 2 10-4 0 4-4 0 1 2 5-1 1-8 5 5 6 3 2-3-8-4 6-4-3-2-5 4-3-4 0-1 13 0 0-2-4 0 0-10z"/>
<path transform="scale(0.2)" fill="#e4e4e4" opacity=".7" d="M1894 684l-2 4-3 2-4 0-6-1-3-4 3 0 2 2 4 1 4-1 2-3-2-2-7-2-4-2-1-3 1-4 4-2 3 0 6 2 2 3-3 0-1-2-5-1-3 1-1 3 2 2 10 3 1 2zm12 -12l0 18-3 0 0-18-7 0 0-3 17 0 0 3zm27 18l0-18-6 18-2 0-7-18 0 18-2 0 0-21 3 0 7 18 6-18 4 0 0 21zm21 -6l-1 4-3 2-6 0-3-2-2-3 3-1 2 3 3 1 3-1 1-3-2-3-5 0 0-3 4 0 2-1 0-2 0-2-2-2-2 0-3 2-1 2-2-1 2-4 2-1 4 0 4 2 1 5-2 2-2 1 3 2zm3 6l1-4 8-8 1-3 0-2-2-2-4 1-2 3-2-1 0-2 4-3 6 1 2 2 0 5-10 11 11 0 0 2zm20 -18l0 7 11 0 0 3-11 0 0 8-3 0 0-21 15 0 0 3zm26 13l0 5-3 0 0-5-9 0 0-2 9-14 3 0 0 14 3 0 0 2zm-3 -13l-7 11 7 0zm18 18l-4-7-4 7-3 0 6-8-6-8 3 0 4 6 4-6 3 0-5 8 5 8zm15 0l-4-7-4 7-3 0 6-8-6-8 3 0 4 6 4-6 3 0-5 8 5 8zm3 6l0-2 18 0 0 2zm19 -6l1-4 8-8 2-3-1-2-2-2-3 1-2 3-3-1 1-2 3-3 7 1 2 2 0 5-10 11 11 0 0 2zm30 -6l-1 4-3 2-5 0-3-2-2-3 3-1 1 3 3 1 4-1 1-3-2-3-5 0 0-3 4 0 1-1 1-2 0-2-2-2-3 0-2 2-1 2-2-1 2-4 2-1 4 0 4 2 1 5-2 2-2 1 3 2zm17 -4l0 4-3 5-2 1-5 0-2-2-2-6 0-7 2-3 3-3 5 1 3 3zm-2 0l-2-8-3-1-3 1-1 2 0 6 1 7 3 1 3-1zm6 10l0-2 5 0 0-16-5 3 0-2 5-4 3 0 0 19 5 0 0 2zm16 0l0-2 6 0 0-16-5 3 0-2 5-4 2 0 0 19 5 0 0 2zm30 -10l0 4-3 5-2 1-5 0-2-2-2-6 0-7 2-3 3-3 5 1 3 3zm-2 0l-2-8-3-1-3 1-1 2 0 6 1 7 3 1 3-1zm3 16l0-2 18 0 0 2zm19 -6l0-2 6 0 0-16-5 3 0-2 5-4 2 0 0 19 5 0 0 2zm30 -7l-1 4-3 3-4 0-4-2-2-3 3 0 1 2 4 1 3-2 1-3-1-2-2-2-3 0-3 1-2 0 0-11 12 0 0 3-9 0-1 6 3-1 4 0 3 3zm17 1l-1 4-3 2-6 0-3-2-1-3 2-1 2 3 3 1 3-1 1-3-2-3-4 0 0-3 3 0 2-1 1-2-1-2-2-2-2 0-3 2 0 2-3-1 2-4 2-1 4 0 4 2 1 5-1 2-3 1 4 2zm14 1l0 5-2 0 0-5-10 0 0-2 9-14 3 0 0 14 3 0 0 2zm-2 -13l-8 11 8 0zm19 13l0 5-3 0 0-5-9 0 0-2 9-14 3 0 0 14 3 0 0 2zm-3 -13l-7 11 7 0zm22 11l-1 4-3 3-5 0-4-2-1-3 2 0 2 2 4 1 3-2 0-3 0-2-2-2-3 0-3 1-3 0 1-11 12 0 0 3-10 0 0 6 3-1 4 0 3 3zm4 7l0-3 3 0 0 3zm21 -8l0 4-3 4-4 0-4-2 0 8-2 0 0-22 2 0 0 3 3-3 5 0 2 3zm-3 0l-1-5-2-1-3 1-2 4 1 6 2 1 3 0 2-2zm16 5l-3 3-5-1-2-3 0-7 1-3 2-2 2 0 3 1 2 2 0-9 3 0 0 22-2 0zm-8 -5l2 5 2 1 3-1 1-4-1-6-2-1-3 0-1 2zm18 -6l0 14-2 0 0-14-3 0 0-2 3 0 0-4 1-1 4-1 0 2-2 1-1 2 0 1 3 0 0 2z"/>
<g fill="none" stroke="#5a5a5a" stroke-width="1.1" stroke-linecap="round" stroke-linejoin="round"><path d="M255 115 l2.5 -2.5 M255 115 l2.5 2.5 M255 115 h6 q3.5 0 3.5 3.5 q0 3.5 -3.5 3.5 h-3"/><path d="M282.5 115 l-2.5 -2.5 M282.5 115 l-2.5 2.5 M282.5 115 h-6 q-3.5 0 -3.5 3.5 q0 3.5 3.5 3.5 h3"/><path d="M294 120 v-5 q0 -1.3 1.1 -1.3 q1.1 0 1.1 1.3 v-1.5 q0 -1.2 1.1 -1.2 q1.1 0 1.1 1.2 v1 q0 -1.1 1.1 -1.1 q1 0 1 1.2 v5.5 q0 3.5 -3.5 3.5 h-1 q-2 0 -3 -2 l-1.8 -3.2"/></g><circle cx="315.3" cy="118.6" r="9" fill="#a9c5e3"/><g fill="none" stroke="#5a5a5a" stroke-width="1.1" stroke-linecap="round" stroke-linejoin="round"><path d="M312 113 l8 5 l-3.5 .8 l2 3.5 l-1.3 .7 l-2 -3.5 l-2.5 2.5 z"/><path d="M330.5 122.5 l1 -3.5 l7 -7 l2.5 2.5 l-7 7 z M336.5 114 l2.5 2.5"/><path d="M348 122.5 l1 -3.5 l6.5 -6.5 l2.5 2.5 l-6.5 6.5 z M348 124.5 h10"/><rect x="365.5" y="113" width="11" height="11"/><circle cx="390" cy="118.6" r="6"/><path d="M403.5 113 l5 2.5 l5.5 -2.5 l-1 11 l-4.5 -2 l-5 1.5 z"/><path d="M441 113.5 h9 M445.5 113.5 v8.5 M443 122 h5"/><path d="M459.5 113.5 h5 M462 113.5 v9 M460 122.5 h4 M464.5 117 h4.5 M466.5 117 v5.5 M465 122.5 h3"/><rect x="478" y="113.5" width="9.5" height="9.5"/><path d="M480.5 116 h4.5 M482.7 116 v5"/><rect x="495.5" y="113.5" width="10.5" height="9.5"/><path d="M495.5 121 l3 -3 l2.5 2 l3 -3 l2 1.5"/><circle cx="520" cy="118.3" r="5.3"/><path d="M514.7 118.3 h10.6 M520 113 v10.6"/><path d="M535 123.5 l.8 -3 l6 -6 q1.5 -1.3 2.6 0 q1 1.2 -.3 2.6 l-6 6 z M540 124 h5"/><path d="M553.5 119.5 l4.5 -4.5 l3.5 3.5 l-4.5 4.5 z M555.5 117.5 l3.5 3.5"/><rect x="572.5" y="113" width="9.5" height="10.5"/><path d="M578.5 113 v10.5 M579.5 115.5 h2 M579.5 117.8 h2 M579.5 120 h2"/></g><rect x="422.5" y="113" width="10" height="11" fill="#f6d154"/><path d="M424.5 115 h6 M427.5 115 v7 M425.8 122 h3.4" stroke="#6a5a20" stroke-width="1.2" fill="none"/><path d="M441 124.5 h9" stroke="#4aa8a0" stroke-width="1.1"/><path d="M330 124.5 h10" stroke="#f0c040" stroke-width="1"/>
<rect x="150.5" y="140.5" width="529.5" height="380.5" fill="#fbfbfb"/>
<path d="M150.5 156.5H680M150.5 174.5H680M150.5 192.5H680M150.5 210.5H680M150.5 228.5H680M150.5 246.5H680M150.5 264.5H680M150.5 282.5H680M150.5 300.5H680M150.5 318.5H680M150.5 336.5H680M150.5 354.5H680M150.5 372.5H680M150.5 390.5H680M150.5 408.5H680M150.5 426.5H680M150.5 444.5H680M150.5 462.5H680M150.5 480.5H680M150.5 498.5H680M150.5 516.5H680" stroke="#e6e6e6" stroke-width="1" fill="none"/>
<path d="M155 171.8 H394" stroke="#f2a6ac" stroke-width="8.6" stroke-linecap="round"/>
<path transform="scale(0.2)" fill="#1a1a1a" stroke="#1a1a1a" stroke-width="3" stroke-linejoin="round" d="M806 875l-3-3-2-3 1-8 3-11 9-13 6-6 7-4 8 0 8 2 2 3-2 2-7-3-4 0-5 1-5 4-9 11-6 15-1 7 2 2 5 1 8-3 7-5 5-7 1-2-1-1-11-1 0-1 1-1 6-1 7 1 3 2 0 5-3 5-6 5-9 5-9 3zm39 1l-3-2 1-2 6-14 1-2 12-23 0-1 1-2 4-2 10 0 7 3 4 2 2 4 0 2-1 4-4 4-11 8-10 3-9 1-8 16zm12 -21l10-2 10-4 2-2 5-6 0-3-1-2-2-2-4-2-5 0-3 1-6 9-6 11zm38 20l-3-1-8-1-2-1 3-2 9 0 16-31 1-4-11 1-2-1 0-1 20-5 16 1 1 2-1 1-14 1-3 2-16 34 13-1 2 3zm35 -1l-5-4 0-6 4-13 7-11 4-4 5-4 10-4 5 0 5 3 3 3 1 4 0 9-3 6-7 9-8 7-8 5-8 1zm6 -2l5-1 4-3 9-7 3-4 6-13 0-7-2-4-5-1-5 3-9 7-5 7-5 10-2 9 2 3zm72 9l-4-1-4-2-4-6 0-8 3-11 9-15 8-8 10-8 6-1 1 1 1 3-6 2-6 3-12 14-7 13-2 8 0 6 3 5 8 3-2 2zm20 -6l-3-3-2-3 1-8 3-11 9-13 7-6 6-4 8 0 9 2 1 3-2 2-7-3-4 0-5 1-5 4-9 11-6 15-1 7 2 2 5 1 8-3 7-5 5-7 1-2-1-1-10-1-1-1 1-1 6-1 7 1 3 2 0 5-3 5-6 5-8 5-10 3zm54 -5l-6 2-6-3-3-4 1-6 3-5 6-5 6-2 6 0 3 2 1 2 0 2-3 3-7 4-9-1-2 2 0 5 2 1 5 1 7-3 2 1-1 2zm1 -14l5-4-1-1-2-1-4 1-5 5zm45 13l-3 0-1-2-1-4 1-4-1-2-14 6-8 6-1 0-4-3 2-5 6-9 2-3 2-1 3 2 0 2-4 8 16-7 5 2 1 4-1 6 2 3zm25 1l-5 2-7-3-3-4 1-6 3-5 6-5 6-2 6 0 3 2 1 2 0 2-3 3-7 4-9-1-1 2-1 5 2 1 5 1 7-3 2 1-1 2zm1 -14l5-4-1-1-2-1-4 1-5 5zm15 14l-1-2 2-8 9-14 2 0 2 2-6 9 9-5 7-2 4-1 3 3-8 2-10 4-6 6-3 6-2 1zm32 0l-2-1 0-3 5-8 9-8 7-3 4 0 7 5-2 6 0 3 2 4 6 2-1 2-1 0-6-1-3-3-3-4-12 8-5 2zm3 -4l4 0 7-5 7-5 3-3-1 0-3-2-4 1-8 7zm39 6l-2 0-2-2 0-4 2-5 17-32 3-1 2 2 0 3-13 21zm36 4l-3-2 1-2 6-14 1-2 12-23 0-1 1-2 4-2 10 0 7 3 4 2 2 4 0 2-1 4-4 4-11 8-10 3-9 1-8 16zm12 -21l10-2 9-4 3-2 5-6 0-3-1-2-2-2-4-2-5 0-3 1-6 9-6 11zm31 15l-1-2 3-8 8-14 3 0 1 2-5 9 9-5 6-2 4-1 4 3-1 0-7 2-10 4-6 6-4 6-2 1zm38 1l-4-1-2-4 0-3 4-7 6-5 7-3 5-1 4 3 2 3-1 4-5 7-6 4zm9 -7l6-7 1-5-4 0-4 2-8 9-1 3 1 2 4-1zm13 24l-2-1-1-1 4-12 14-29 2-1 3 2 0 3-2 3 8-2 6 2 1 2 1 3-3 4-3 3-5 2-8 2-6 0-3 6-4 12zm12 -23l11-3 5-5-1-2-2-1-2 0-7 3-4 5zm32 8l-4-3-1-1 9 0 5-1-8-5-3-3 0-3 2-4 5-4 9-4 6-1 3 1 2 3 0 1-1 3-2 2-4 1-2-2 3-4 1-1-1 0-11 4-5 5 0 3 10 6 1 4-4 2zm42 -3l-6 2-6-3-3-4 1-6 3-5 5-5 7-2 6 0 3 2 1 2 0 2-3 3-7 4-9-1-2 2 0 5 2 1 5 1 7-3 2 1-2 2zm1 -14l5-4-1-1-2-1-4 1-5 5zm43 19l-3-1-8-1-2-1 3-2 10 0 15-31 1-4-11 1-1-1 0-1 19-5 16 1 1 2-1 1-14 1-3 2-16 34 14-1 2 3zm61 -6l-3 0-2-2 0-4 1-4-1-2-14 6-8 6-1 0-4-3 2-5 6-9 2-3 2-1 3 2 0 2-5 8 17-7 5 2 1 4-1 6 2 3zm5 19l-2-1-1-1 4-12 14-29 2-1 3 2 0 3-2 3 9-2 5 2 1 2 1 3-2 4-4 3-5 2-8 2-6 0-3 6-4 12zm12 -23l11-3 5-5-1-2-1-1-3 0-7 3-4 5zm49 7l-3-3-1-4-5 4-6 2-3-1-3-3 2-9 7-10 3 0 1 2-7 12 0 3 1 1 5-1 4-3 4-6 3-6 2-2 2 1 1 1 0 3-6 12 1 3 3 2 0 1-2 2zm19 0l-3-1-3-4 2-8 6-10-5-1 0-1 1-2 7 0 6-9 2-1 2 0 2 2-5 7 9 0 1 2 0 2-14 1-5 6-4 12 2 1 6 0 9-3 1 1 0 1-2 2-6 2zm52 2l-5-4 0-6 4-13 7-11 4-4 5-4 10-4 5 0 6 3 2 3 1 4 0 9-3 6-7 9-8 7-8 5-8 1zm6 -2l5-1 4-3 9-7 3-4 6-13 0-7-2-4-5-1-5 3-9 7-5 7-5 10-2 9 2 3zm55 0l-3-3 0-4-6 4-6 2-3-1-3-3 2-9 8-10 2 0 1 2-6 12-1 3 2 1 4-1 4-3 5-6 2-6 2-2 2 1 1 1 0 3-6 12 1 3 3 2 0 1-2 2zm19 0l-3-1-2-4 1-8 6-10-5-1 0-1 1-2 7 0 7-9 2-1 1 0 2 2-5 7 9 0 1 2 0 2-14 1-5 6-3 12 1 1 6 0 9-3 2 1-1 1-2 2-6 2zm19 16l-2-1 0-1 3-12 14-29 2-1 3 2 0 3-1 3 8-2 5 2 1 2 1 3-2 4-4 3-4 2-9 2-5 0-4 6-4 12zm12 -23l12-3 4-5-1-2-1-1-3 0-7 3-4 5zm49 7l-3-3 0-4-5 4-7 2-3-1-2-3 1-9 8-10 2 0 1 2-6 12-1 3 2 1 4-1 4-3 5-6 2-6 2-2 2 1 2 1-1 3-6 12 1 3 3 2 0 1-2 2zm19 0l-3-1-2-4 1-8 6-10-5-1 0-1 2-2 6 0 7-9 2-1 1 0 2 2-5 7 9 0 1 2 0 2-14 1-5 6-3 12 1 1 6 0 9-3 2 1-1 1-2 2-5 2zm20 9l-3-2 0-2 5 0 3-2 7-7 7-11 4-11 2-13 0-3-3-5 2-2 3 1 3 5 0 3-2 13-3 10-7 13-8 8-5 4z"/>
<path transform="scale(0.2)" fill="#1a1a1a" stroke="#1a1a1a" stroke-width="5" stroke-linejoin="round" d="M996 930l1-3 3 0 2 5 0 3 1 27 0 2-1 1-3-1-1-3 0-22zm16 36l-1 2-2 1-3-1-1-2 2-3 1-1 3 1zm34 -31l12-6 3 0 4 2 2 4-1 7-2 3-8 7-3 5 7 2 13 0 3 1-1 2-5 2-9-1-12 1-1-1-1-3 2-6 4-4 9-8 2-5-1-2-2-1-6 0-4 4-5 7-2-2 0-3zm29 17l2-9 6-8 4-1 6 2 6 0 3 2 1 3 0 5-3 6-4 5-5 4-7 3-5-1-3-5zm11 -7l4-6-4-1-5 4-3 6 0 8 1 3 3 2 3 0 8-5 5-4 2-6 0-5-1-2-4 1zm17 -10l2-3 8-2 13 3 1 2-8 0-2 2-1 20 0 2 2 1 9 0 0 1-5 2-19 4-1-3 0-1 7-1 2-1 2-20-1-5-7 1zm73 0l1 1 3 3 2 4-10 10 2 2 0 2-15 1-14 3-2 0-3-4-1-21 6 6 0 2 3 6 1 4 1 2 16-4 5-9-1-1-18 3-3-1zm74 35l4 3 2 4 0 2-4-1-3-3-4-6 3 0zm-35 -49l0 17 3 0 1 2-4 3-1 8 8 2 1 2-3 1-6-2 0 25-2-2-1-4-1-24-7 11-6 4 1-3 7-10 2-6-3 2-3 0-4-1-2-2 2-1 13-4 1-12-1-8 3 0zm35 -3l3 1 1 1-5 12 7-1 1 3-2 0-7 1-4 5 9 0 2 2 1 1-12 18 18-2 2 1 0 1-14 1-7 2-3 5-3 3-6 4-3 0 0-3 7-5 2-3-11 3-6-1-1-1 21-5 1-4-6 2-2-1 12-5 1-3-14 3 1 3-1 1-2-2-3-8 0-2 14-4 2-5-7 1 0 3-1 2-3-3-5 0-2-1 6-2-2-13 1-1 4 3 1 3 0 6 6-1 3 0 1-2 4-9 0-4zm-2 24l-17 5 1 3 0 1 15-4 3-5zm42 10l-2 2 0 8 9-2-10 7-12 5-2-4 1-1 5 0 6-2 0-5-1-4-6 0-3-3 17-5 2 0-1 2zm28 -29l1 2-2 2-5-3 0-2zm-22 -4l2 6 2 11 7-1 3 1-1 2-5 0-3 1 6 15 3 6 5 6 7 7 3 1 2 4 0 2-5-2-4-5-11-13-10-20-16 4-6 0-4-3 1-1 10 0 14-3-6-19 0-1 1 0zm47 47l-1 2-2 1-2-1-2-2 2-3 1-1 3 1z"/>
<path transform="scale(0.2)" fill="#2fd3a6" stroke="#2fd3a6" stroke-width="3.8" stroke-linejoin="round" d="M1292 1048l-2-1 0-2 4-12 8-20 0-2 3-2 6 0 5 2 4 5 0 5-4 5-6 5-12 3-5 13zm7 -17l8-2 6-4 3-7-1-4-4-2-5 1-3 7zm29 17l-4-3-3-4 2 0 2 2 6 1 5-1 2-2-3-5-7-3-4-4-1-4 1-4 6-6 6-5 9-3 5 1 3 2 0 3-1 3-3 3-3 1-1-1 4-5 1-3-6 0-12 7-5 6-1 3 1 2 12 8 2 2 0 3 0 2-2 2-5 1zm24 -6l-3 0-2-2 2-2 2-1 3 2-1 2z"/>
<path d="M284.5 202 q-1 1 -1.2 3 l-.5 17 M285 227 q-1 2 -1 4 l-.5 23" stroke="#2fd3a6" stroke-width="1.3" fill="none"/>
<path transform="scale(0.2)" fill="#2fd3a6" stroke="#2fd3a6" stroke-width="3.8" stroke-linejoin="round" d="M1493 1020l3 4 1 4-16 0 0-2 4-4 3-1 3-2zm-24 -8l6 3 1 3 2 22 16-2 3 2 3 3-16 0-17 5-4-1-4-3-1-3 13-1 2-2 0-9-5-15 0-2zm84 11l3 2 1 5-3 12 11 1 1 1-1 2-12-2-13 4-3 0-3-1-1-3 11-1-1-2-1-6 1-8 3 3 1 13 4-2 2-3 1-4 0-5-2-5zm-5 -19l3 3 1 3-1 8 7-2 3 1 1 1-19 5-6 0 0-2 13-3-2-5-3-9zm-21 2l2 4-1 8 3 1-4 4-1 6 8-3-8 7 0 22-1 1-5-5 3 0 1-16-8 7-4-1-1-1 13-9 0-8-7 3-3-1-1-2 11-3 1-11-1-5zm49 40l-1 2-2 1-2-1 0-2 2-4 2 2zm67 -8l1 1-1 2-7 1-2-1 3-3 4-1zm16 -12l2 1 0 1-9 1-2 1-1 13 0 11-1 6-4-4-3-5 4 3 3 0-3-24-15 6-4 3-2 0 0-1-1-3 21-7 1-1-1-3 7 2 6-1zm-43 -23l2 2 2 5-1 36 2 13-2-2-3-5 0-2 2 2 0-1-1-13-10 14-2-1 0-3-1-4 3-2 2-3 0-5-4-14 1-2 1 0 6 4-2 18 6-6-2-25-2-6 1-1zm28 -1l3 2 1 3 1 0 4 2-8 6-1 3-4 1-11 8 9-10-3-4 5 1 6-7-4 1-9 5-1 0 0-4 8-9 1 0zm44 4l4 4 0 6 11 1 4 3-3 7-3 15-4-3-5 1 2 9 4 2 8 0 4-1 1-4 2 6-1 2-13 0-6-2-1-2-3-9-11 3-8-23 18-4-1-6-4-6zm6 14l-1 1-1 6 4 0 1 2-5 2 0 5 6 0 1-2 2-13zm-8 2l-9 3 1 5 10-2 0-6zm2 10l-8 3-1 1 1 3 9-2zm81 10l3 2-2 4-2 6-9 2-2-1-3-5-1-6zm-12 8l1 3 6-2 2-6-9 3zm11 -15l-2 2-10 3-1 0-2-2 9-3zm2 -10l-1 2-14 5-2 0-2-2 15-5zm-26 -15l1 1 0 3-9 11 3 28-1 2-2-4 0-24-13 12-1-1 17-22 3-7zm14 -6l4 3 3 9 9-2 4 1 0 1-2 1-7 0-20 7-5-1-1-2 1-1 18-4-4-7zm72 16l1 1-1 1-15 0-2 1-1 2-2 5 7-1 5 4-5 22-9-5 8-1 2-13-1-4-2-1-15 7-1-5 3 0 4-4 2-4-17 5-4-2 1-1 24-6 8-1zm-9 -15l1 2-6 10-13 4-3-3-1-6-1-7 2 1 2 4 2 7 8-2 2-7-8 2-1-1-1-2 13-3zm35 33l6 2 2 1-1 2-3 0zm-2 -5l0 11 0 12-2-3 0-5 1-15zm29 -1l0 2-11 13-3 3-5 2 1-2 8-8 8-10 1-1zm-20 -4l2 1 0 2-9 4 0-2 4-5zm30 -4l3 1 0 2-6 11-5 14-2 0-4-4-2-4 1 0 6 2 4-12 2-8-2 0-14 4-3-1-2-3 15-3zm-28 -8l1 1 0 2-21 21-4 2 0-2 2-3 11-13-10 6-3-2-1-2 17-7 5-4zm-6 -4l0 2-4-1-6-9 6 1 3 1zm95 23l-6 18-1-3-2-1-10 1-4-4 0-8 1-2 2 0 16-3 3 1zm-5 2l-14 4 1 5 12-1zm-8 -26l2 3-1 1-4 6-3 6 9-4 5-3 2 4-9 7-1 0 2-5-5 4-9 4-2-4-1-2 3 0 4-5 5-14zm-25 -4l4 1 1 4-5 15-1 7 4 0 2-9 2 4 0 3 3 0-4 4-3 9 9 4-1 4-2 0-9-5-3 2-8 1 8-5-1-6-9 3-3-4 0-2 3 1 9-3 4-23zm-1 32l-1 1 1 4 2-5zm53 -15l0 26-2 1-3-4 4-23 0-1zm19 -13l5 2-1 9 10-5 2 0 3 4-3 2-6 0-6 2-1 14 2 6 2 2 6 0 7 0 2-2 1 1 2 0 1 1-1 3-7 1-8-1-6-2-2-3-2-9zm-17 -3l4 4-1 2-11 9-5 3 2-5zm74 4l-7 8-1 1-3-1-3-4 6-1zm7 -10l5 1 1 4-8 21 13-2 3 4-9 24-3 3-4-10 5 4 2-8-6-2-2-2 10-1 1-3 0-7-11 4-7 18-3 4-1-1 6-19-6 3-7 0-4 0-3-3 22-5 6-19zm60 37l1 2 0 1-5 7-10 3-3-8 0-3 13-2zm-5 2l-8 3 0 4 8-3 1-2zm-20 -3l1 2 2 10-1 2-3-4-3-9 1-2zm14 -34l2 2 1 6 9 0 5 1-2 1-3 0-1-1-5 2 2 3-2 15 13 1 4 1-1 8-4 14-5-5 3 1 2-2 1-11 0-4-1-1-11 0-16 5-4-2 1-1 6-1-2-17 3 0 2 4 8-2 0-6-16 4-2-1-2-2 1-1 12-2 1-1-2-5 0-3 1-1zm0 20l-3 0 0 5 7-2 0-4zm4 7l-1 0-6 0 0 4 6-1zm54 -25l3 4 1 6 11 1 3 3-2 7-3 15-4-3-5 1 2 9 4 2 8 0 3-1 2-4 2 6-1 2-13 0-6-2-2-2-2-9-11 3-8-23 18-4-2-6-4-6zm6 14l-1 1-1 6 4 0 1 2-5 2 0 5 6 0 1-2 2-13zm-8 2l-9 3 1 5 10-2 0-6zm2 10l-9 3 0 1 1 3 8-2zm63 -16l0 1-8 6-4-3 1-2 5 0zm3 -2l2 3 0 4 4-6 3 0 1 2 0 2-8 5 0 3 13-2 4 2-13 1-4 2-1 22-2 2 0-4 0-19-18 6-5-1-2-2 0-1 10-1 15-4 0-9-2-6 1-1zm7 -9l2 2-2 2-17 3-3-1-3-3 1-1z"/>
<path transform="scale(0.2)" fill="#2fd3a6" stroke="#2fd3a6" stroke-width="3.8" stroke-linejoin="round" d="M1500 1114l6 4 1 6-5-1-4-3-1-6 1-1zm15 -16l0 1-2 1-7-1-13 2 2 2-2 16 1 17-2 8-4-4 3-24 0-9-1-4-2 0-8 2-8 1-5-1-4-4 36-3 9-2zm48 15l3 2 1 5-3 12 11 1 1 1-1 2-12-2-13 4-3 0-3-1-1-3 11-1-1-2-1-6 1-8 3 3 1 13 4-2 2-3 1-4 0-5-2-5zm-5 -19l3 3 1 3-1 8 7-2 3 1 1 1-19 5-6 0 0-2 13-3-2-5-3-9zm-21 2l2 4-1 8 3 1-4 4-1 6 8-3-8 7 0 22-1 1-5-5 3 0 1-16-8 7-4-1-1-1 13-9 0-8-7 3-3-1-1-2 11-3 1-11-1-5zm49 40l-1 2-2 1-2-1 0-2 2-4 2 2zm67 -8l1 1-1 2-7 1-2-1 3-3 4-1zm16 -12l2 1 0 1-9 1-2 1-1 13 0 11-1 6-4-4-3-5 4 3 3 0-3-24-15 6-4 3-2 0 0-1-1-3 21-7 1-1-1-3 7 2 6-1zm-43 -23l2 2 2 5-1 36 2 13-2-2-3-5 0-2 2 2 0-1-1-13-10 14-2-1 0-3-1-4 3-2 2-3 0-5-4-14 1-2 1 0 6 4-2 18 6-6-2-25-2-6 1-1zm28 -1l3 2 1 3 1 0 4 2-8 6-1 3-4 1-11 8 9-10-3-4 5 1 6-7-4 1-9 5-1 0 0-4 8-9 1 0zm44 4l4 4 0 6 11 1 4 3-3 7-3 15-4-3-5 1 2 9 4 2 8 0 4-1 1-4 2 6-1 2-13 0-6-2-1-2-3-9-11 3-8-23 18-4-1-6-4-6zm6 14l-1 1-1 6 4 0 1 2-5 2 0 5 6 0 1-2 2-13zm-8 2l-9 3 1 5 10-2 0-6zm2 10l-8 3-1 1 1 3 9-2zm81 10l3 2-2 4-2 6-9 2-2-1-3-5-1-6zm-12 8l1 3 6-2 2-6-9 3zm11 -15l-2 2-10 3-1 0-2-2 9-3zm2 -10l-1 2-14 5-2 0-2-2 15-5zm-26 -15l1 1 0 3-9 11 3 28-1 2-2-4 0-24-13 12-1-1 17-22 3-7zm14 -6l4 3 3 9 9-2 4 1 0 1-2 1-7 0-20 7-5-1-1-2 1-1 18-4-4-7zm72 16l1 1-1 1-15 0-2 1-1 2-2 5 7-1 5 4-5 22-9-5 8-1 2-13-1-4-2-1-15 7-1-5 3 0 4-4 2-4-17 5-4-2 1-1 24-6 8-1zm-9 -15l1 2-6 10-13 4-3-3-1-6-1-7 2 1 2 4 2 7 8-2 2-7-8 2-1-1-1-2 13-3zm35 33l6 2 2 1-1 2-3 0zm-2 -5l0 11 0 12-2-3 0-5 1-15zm29 -1l0 2-11 13-3 3-5 2 1-2 8-8 8-10 1-1zm-20 -4l2 1 0 2-9 4 0-2 4-5zm30 -4l3 1 0 2-6 11-5 14-2 0-4-4-2-4 1 0 6 2 4-12 2-8-2 0-14 4-3-1-2-3 15-3zm-28 -8l1 1 0 2-21 21-4 2 0-2 2-3 11-13-10 6-3-2-1-2 17-7 5-4zm-6 -4l0 2-4-1-6-9 6 1 3 1zm95 23l-6 18-1-3-2-1-10 1-4-4 0-8 1-2 2 0 16-3 3 1zm-5 2l-14 4 1 5 12-1zm-8 -26l2 3-1 1-4 6-3 6 9-4 5-3 2 4-9 7-1 0 2-5-5 4-9 4-2-4-1-2 3 0 4-5 5-14zm-25 -4l4 1 1 4-5 15-1 7 4 0 2-9 2 4 0 3 3 0-4 4-3 9 9 4-1 4-2 0-9-5-3 2-8 1 8-5-1-6-9 3-3-4 0-2 3 1 9-3 4-23zm-1 32l-1 1 1 4 2-5zm53 -15l0 26-2 1-3-4 4-23 0-1zm19 -13l5 2-1 9 10-5 2 0 3 4-3 2-6 0-6 2-1 14 2 6 2 2 6 0 7 0 2-2 1 1 2 0 1 1-1 3-7 1-8-1-6-2-2-3-2-9zm-17 -3l4 4-1 2-11 9-5 3 2-5zm74 4l-7 8-1 1-3-1-3-4 6-1zm7 -10l5 1 1 4-8 21 13-2 3 4-9 24-3 3-4-10 5 4 2-8-6-2-2-2 10-1 1-3 0-7-11 4-7 18-3 4-1-1 6-19-6 3-7 0-4 0-3-3 22-5 6-19zm63 48l3 2-1 3-2 0-3-2 1-3zm-25 -26l1 2 0 29-2-1-1-4 1-24zm29 -16l0 1-8 7-3 1-4 4-1 13 9-5-2-5 1-3 3 2 2 4 4-2 3 0 0 2-5 2 0 2 6 14 6 8 3-10 1 12-1 1-5 0-8-12-7-12-10 7 2 7 4-1-3 5-3 1-3-2-1-33 1 0 4 2 11-13 2 0zm-23 -5l1 3 0 2-7 10-9 14-6 6-1-1 1-3zm63 3l3 4 1 6 11 1 3 3-2 7-3 15-4-3-5 1 2 9 4 2 8 0 3-1 2-4 2 6-1 2-13 0-6-2-2-2-2-9-11 3-8-23 18-4-2-6-4-6zm6 14l-1 1-1 6 4 0 1 2-5 2 0 5 6 0 1-2 2-13zm-8 2l-9 3 1 5 10-2 0-6zm2 10l-9 3 0 1 1 3 8-2zm63 -16l0 1-8 6-4-3 1-2 5 0zm3 -2l2 3 0 4 4-6 3 0 1 2 0 2-8 5 0 3 13-2 4 2-13 1-4 2-1 22-2 2 0-4 0-19-18 6-5-1-2-2 0-1 10-1 15-4 0-9-2-6 1-1zm7 -9l2 2-2 2-17 3-3-1-3-3 1-1z"/>
<path transform="scale(0.2)" fill="#2fd3a6" stroke="#2fd3a6" stroke-width="3.8" stroke-linejoin="round" d="M1482 1216l1 0-3 13 5 2 1 2-3 0-5-2-6 4 3-5-2-2 0-5-9 7-3-2 1-1 11-7 2-3 3 0 2-1zm-5 5l-1 3 0 4 1-1 1-3 0-3zm23 -12l-1 8 0 1 7 7 6 1 0 2-8 0-7-8-2 2-4 1 4-6-5-3 2 0 5 1 1-5 1-1zm7 -10l1 0-1 1-13 8-3 0 0-1 7-3 6-5zm-10 -13l1 2 1 6-3 7-2 2 1-16zm-19 -1l2 5 0 4 3-4 2 1 1 2-5 6-2 0 0 1 4-1 1 2-4 3-1 4 8-2 3 2-1 0-10 1 0 7-2-3-1-5-7 7-2 2 0-3 8-8-8 5-3-2 11-7 1-3 0-4-5 5-3-2-1-3 2-1 2 0 5-1-1-8 1 0zm70 17l2 2-6 7 1 5 10-1 5 3-3 0-5-1-6 1 0 14-2 5-7-2-1-2 5 0 2-2 1-6-1-6-15 7-3 0-5-1 1-2 22-6-5-6 0-2 4 1 4-7-11 6-1-1-2-3 13-4zm-21 -5l1 3-2 6-1 2-3-4zm14 -12l1 2-1 6 12-1 5 3 2 2 0 2-6 1-5 1 1-2 3-4-2-1-14 4-5 0-1-2 7-2-2-11zm69 37l3 2-4 10-8 2-1-1-4-5 0-6zm-11 8l1 3 6-2 2-6-9 3zm10 -15l-2 2-8 3-2 0-1-2 8-3zm3 -10l-1 2-13 5-2 0-2-2 14-5zm-24 -15l1 1-1 3-7 11 2 28-1 2-1-4-1-24-12 12 0-1 15-22 3-7zm12 -6l4 3 3 9 8-2 4 1-1 1-1 1-6 0-19 7-4-1-2-2 1-1 17-4-4-7zm66 16l0 2-14 0-2 1-1 2-1 5 6-1 4 4-4 22-8-5 7-1 2-13-1-4-2-1-13 7-2-5 4 0 3-4 2-4-16 5-3-2 0-1 23-6 7-1zm-8 -15l0 2-5 10-12 4-1-1-2-4-1-11 2 1 1 4 2 7 8-2 2-7-8 2-1-1-1-2 12-3zm23 41l-1 2-1 1-2-1-1-2 2-4 2 2zm61 -8l1 1-2 2-6 1-1-1 2-3 4-1zm15 -12l2 1-1 1-8 1-1 1-1 10 0 15-2 5-4-5-2-4 4 3 2 0-2-24-14 6-4 4-2-1 0-4 19-7 0-4 6 2 6-1zm-40 -23l3 2 1 5 0 36 1 13-2-2-2-5 0-2 1 2 0-1-1-13-9 14-1-1-1-7 3-2 1-3 0-5-3-14 0-2 2 0 5 4-2 18 5-6-1-25-2-6 1-1zm26 -1l3 5 2 0 3 2-7 6-1 3-3 1-10 8 0-1 7-9-3-4 5 1 6-7-4 1-8 5-1 0 0-4 7-9 1 0zm60 24l5 2 0 2-2 1-6-1-7 0-19 4-4 0-6-5 2-1 5 0 21-3zm31 -8l6 1 1 3-2 35-2-2-1-4 2-9-1-18zm7 -6l14 8 2 2-5 1-4-1-8-8-2-1zm-2 -9l2 5 0 1-4 2-2 3-6 14-7 3 2-8 3-4 9-15 2-1zm39 36l1 4 5-5 1 0 0 1-12 18-1-5 5-6-3-14 0-1 4 3zm13 -9l3 2-3 12 0 7 18-2 0-6 1-2 4 10-5 2-15 2-4-2-2-2 1-6 1-13zm-12 -7l3 2 0 2-9 1 3-4 2-1zm24 -2l2 2 1 1-5 15-1 3-4-5 3-1 3-11 0-2-15 6-2-2 1-1 5-2 8-3zm-6 -19l3 3 0 2 4 2 1 2-2 1-5-2-6 8-1-1 2-7-9 3 0 6-4-5-5 2-3-3 1-2 7 0 0-8 3 2 1 5 9-2zm35 12l1 9-1 24 20-2 2 1 0 1-22 2-2 2-1-1-1-2 2-9 0-12-1-10-1-3zm17 -1l5 0 1 0-6 3-1 4 5-1 1 1-6 3-1 4 8-1 2 1 1 1-3 13-4-5 3-1 0-6-3-1-4 1-2 16-1-3 0-11-5 2-4-1 9-4 0-4-4 1-1-1 5-3 0-3-5 0-1-1 6-2 1-5 1 0zm13 -10l2 2 0 2 0 12-1 2 0 31-1 5-5-5 3 0 0-3 1-27-1-17-5 0-12 3-9 0-3-1 5-2 19-2zm34 3l3 4 1 6 10 1 3 3-3 7-2 15-4-3-4 1 2 9 4 2 7 0 3-1 1-4 2 6-1 2-12 0-5-2-2-2-2-9-10 3-7-23 16-4-1-6-4-6zm6 14l-2 1 0 6 3 0 2 2-5 2 0 5 5 0 1-2 2-13zm-7 2l-9 3 1 5 9-2 0-6zm1 10l-8 3 1 4 8-2zm75 -4l3 2-1 2-6 1 2-4zm-9 -10l5 5-2 4-2 10 7 2 1 2-2 2-6-1-10 3-3-5 8-2 1-8-1-1-5 2-3-4 0-1 8-3 1-5zm-14 -1l1 1-3 8-8 25-6 4 0-3 6-7 5-18 3-9 1-2zm23 -11l1 1-2 2-4-1-5 0-16 5-4 0-3-4 1 0 6 0 24-4zm40 29l2 3-1 5 1 5 6 0 7-2 2-7 2 6-1 4-5 2-11 0-2-7zm-13 1l2 2-2 2-4-4zm8 -18l1 1 0 15 5-12 1-1 1 1-2 6-3 9-5 9-2 1-1-1-3 3 0-4 8-8 0-13-1-4-3-3 3 0zm8 -8l4 2 3 5-2 3-1 12-2 2-1-3 2-11-1-5-2-1-8 1-3-3zm-22 -1l1 2 1 5 4-1 1 1-2 2-3 1-1 4 0 1 3 0 2 1-1 2-4 2-1 9-2 3-5 4-1-1 0-2 5-6 1-6-7 5-1-4 1-2 7-3 0-4-6 1-2-4 8-2 0-4-3-4 3-1zm60 23l-3 7-4 7-4 3-2 1 6-8 6-10 1-1zm16 -2l1 2-8 3 1-2 3-3 2-1zm-5 -9l0 1-3 4-1 18 9 8 4 2 7 2 1 1 0 1-10 0-10-10-10-7 6 0 1-14 0-1-6 2-3-2zm-16 -5l-2 7-4 4-2-3 0-1 3-4zm29 -4l1 2-1 1-8 4 3-6-2 0 0-1 4-1zm-20 -11l4 4 0 8 7 0-7 3-10 1-1-1 7-2-1-11zm57 11l-7 8-1 1-2-1-3-4 6-1zm6 -10l4 1 2 4-8 21 12-2 3 4-8 24-3 3-4-10 5 4 2-8-6-2-2-2 9-1 1-3 0-7-10 4-6 18-3 4-1-1 6-19-6 3-6 0-3 0-3-3 19-5 6-19zm23 10l1-2 2 0 1 8 1 25-1 2-2-1 0-3 0-20zm12 25l2 1 1 3-1 6-3 7-4 4 4-12zm74 -11l5 2 0 2-1 1-7-1-7 0-19 4-4 0-6-5 2-1 5 0 21-3zm31 -8l6 1 1 3-2 35-2-2-1-4 2-9-1-18zm7 -6l14 8 2 2-5 1-4-1-8-8-2-1zm-2 -9l2 5 0 1-4 2-2 3-6 14-7 3 2-8 3-4 9-15 2-1zm39 36l1 4 5-5 1 0 0 1-12 18-1-5 5-6-3-14 1-1 3 3zm13 -9l3 2-3 12 0 7 18-2 0-6 1-2 4 10-5 2-15 2-4-2-1-2 0-6 1-13zm-12 -7l3 2 0 2-9 1 3-4 2-1zm24 -2l2 2 1 1-5 15-1 3-4-5 3-1 3-11 0-2-15 6-2-2 1-1 5-2 8-3zm-6 -19l3 3 0 2 4 2 1 2-2 1-5-2-6 8-1-1 2-7-9 3 0 6-3-5-6 2-3-3 1-2 7 0 0-8 3 2 1 5 9-2zm35 12l1 9-1 24 20-2 2 1 0 1-22 2-2 2-1-1-1-2 2-9 0-12-1-10-1-3zm17 -1l5 0 1 0-6 3-1 4 5-1 1 1-6 3-1 4 8-1 3 1 0 1-3 13-4-5 3-1 0-6-3-1-4 1-2 16-1-3 0-11-5 2-4-1 9-4 0-4-4 1-1-1 5-3 0-3-5 0-1-1 6-2 1-5 1 0zm13 -10l2 2 0 2 0 12-1 2 0 31-1 5-5-5 3 0 0-3 1-27-1-17-4 0-13 3-9 0-3-1 5-2 19-2zm34 3l3 4 1 6 10 1 3 3-3 7-2 15-4-3-4 1 2 9 4 2 7 0 3-1 1-4 2 6-1 2-12 0-5-2-2-2-2-9-10 3-7-23 16-4-1-6-4-6zm6 14l-2 1 0 6 4 0 1 2-5 2 0 5 5 0 1-2 2-13zm-7 2l-9 3 1 5 9-2 0-6zm1 10l-8 3 1 4 8-2zm75 -4l3 2-1 2-6 1 2-4zm-9 -10l5 5-2 4-2 10 7 2 1 2-2 2-6-1-10 3-2-5 7-2 1-8-1-1-5 2-3-4 0-1 8-3 1-5zm-14 -1l1 1-3 8-8 25-6 4 0-3 6-7 5-18 3-9 1-2zm23 -11l1 1-2 2-4-1-5 0-16 5-4 0-3-4 1 0 6 0 24-4zm40 29l2 3-1 5 1 5 6 0 7-2 2-7 2 6-1 4-5 2-11 0-2-7zm-13 1l2 2-2 2-4-4zm8 -18l1 1 0 15 5-12 1-1 1 1-2 6-3 9-5 9-2 1 0-1-4 3 0-4 8-8 0-13-1-4-3-3 3 0zm8 -8l4 2 3 5-2 3-1 12-2 2-1-3 2-11 0-5-3-1-8 1-3-3zm-22 -1l1 2 1 5 4-1 1 1-2 2-3 1-1 4 0 1 3 0 2 1-1 2-4 2-1 9-2 3-5 4-1-1 0-2 5-6 1-6-7 5-1-4 1-2 7-3 0-4-6 1-2-4 8-2 0-4-2-4 2-1zm60 23l-3 7-4 7-4 3-2 1 6-8 6-10 1-1zm16 -2l1 2-8 3 1-2 3-3 2-1zm-5 -9l0 1-3 4-1 18 9 8 4 2 7 2 1 1 0 1-10 0-10-10-10-7 6 0 1-14 0-1-6 2-3-2zm-16 -5l-2 7-4 4-2-3 0-1 3-4zm29 -4l1 2-1 1-8 4 3-6-2 0 0-1 4-1zm-20 -11l4 4 0 8 7 0-7 3-10 1-1-1 7-2-1-11zm57 11l-6 8-2 1-2-1-3-4 6-1zm6 -10l4 1 2 4-8 21 12-2 3 4-8 24-3 3-4-10 5 4 2-8-6-2-2-2 9-1 1-3 0-7-10 4-6 18-3 4-1-1 6-19-6 3-6 0-3 0-3-3 19-5 6-19zm27 41l-3-7-1-14 1-6 3-2 2-1 3 3 2 3 1 9-4 15-1 2zm3 -25l-1-1-2 1-1 8 1 7 2 7 2-5 1-6 0-7z"/>
<path transform="scale(0.2)" fill="#2fd3a6" stroke="#2fd3a6" stroke-width="3.8" stroke-linejoin="round" d="M1505 1315l3 3 2 3-1 2-4-1-2-3-2-5 2 0zm-28 -45l0 16 2 0 1 1-3 3-1 7 6 3 1 1-2 1-5-2 0 23-2-2 0-3-1-23-6 10-4 5 1-3 7-15-2 2-3 0-4-2-1-1 1-1 11-3 1-12-1-7 3-1zm27 -4l3 2 1 1-4 10 5 0 1 2-1 1-6 0-3 5 7 0 3 3-10 16 14-1 2 1 0 1-12 1-5 1-2 5-3 3-4 3-3 0 0-2 5-5 2-2-9 2-4-1-1-1 17-5 1-3-5 2-2-1 10-5 1-3-11 3 0 3 0 1-2-2-3-9 11-4 2-5-5 2 0 3-1 1-3-2-3-1-2 0 5-3-2-12 1-1 3 4 1 8 5-1 3-2 2-9 1-3zm-1 23l-13 5 0 3 13-4 1-4zm63 9l2 0 3 3 0 4-4-1-5-5 0-2zm-18 -13l2 2-1 7 3-3-1-3 1 0 5 0 0 4-4-1-9 11-2-3 3-13 2-1zm19 -1l3 2 0 1-15 13 4-8 6-7zm-31 -11l-1 12 3 3-4 3 0 4 2 0-2 3 0 16-2 5-3-2-2-4 3 1 1-1 1-13-7 7-3 0-1-2 11-8 0-5-7 2-2 0-1-2 10-5-1-16 3 0zm86 34l2 2-2 4-1 6-9 2-2-1-3-5-1-6zm-12 8l1 3 6-2 2-6-9 3zm10 -15l-2 2-9 3-1 0-2-2 9-3zm3 -10l-1 2-14 5-2 0-2-2 15-5zm-26 -15l2 1-1 3-8 11 2 28-1 2-1-4-1-24-12 12-1-1 17-22 2-7zm14 -6l4 3 3 9 9-2 4 1-1 1-1 1-7 0-20 7-5-1-1-2 1-1 18-4-4-7zm70 16l1 1 0 1-16 0-2 1-1 2-1 5 7-1 4 4-4 22-9-5 8-1 1-13 0-4-2-1-15 7-1-5 3 0 4-4 2-4-17 5-3-2 0-1 24-6 8-1zm-8 -15l0 2-6 10-12 4-2-1-2-4-1-11 2 1 2 4 2 7 8-2 2-7-8 2-1-1-1-2 12-3zm24 41l0 2-2 1-2-1-1-2 3-4 2 2zm37 -17l2 1 0 10 4 9-6-1 2-3-2-6-2-10zm0 -18l2 4-2 5-2-2-1-4 0-4zm28 -8l3 2 1 2-2 3 4 1 1 2-9 5-4 9 5-1 1-4 8 3-6 4 0 2 3 1 2 1-5 3-1 12 8 3 5 1 2 1-3 2-6 1-13-5-18 2-8-1-1-2 1 0 8 0 22-1 0-12-12 6-2 0-1-2 2-3 4-1 9-5 0-2-13 5-2-4 2-2 2 0 2-1 3-4 1-4-4 1-1 2-3 0-3-3-1-3 15-5 3-8zm70 52l0 4-3-1-2-2-1-7 3 1zm-16 -16l-5 3-3 0-2-1 3-2 4-2 4 0zm-13 -4l-12 15-2-1 0-4 3 0 9-9zm15 -4l0 3-2 1-5 0-3-2 3-2zm7 -4l1 1 0 1-1 10 10-2-1 3-10 2-4 9-4 4 0-3 4-8-15 6-2-1 0-2 18-6 2-13zm-28 -21l2 3 0 2-4 5-4 6 9-4 2-3 3 2 0 3-11 12 8-4 1 0 0 1-5 4-9 6-2-5 9-11-9 5-2-3 0-2zm22 -5l3 5-1 8 8-3 2 1-1 2-9 4-1 5 7-2 6 0 3 2 0 2-1 1-7 3 2-7-20 8-3-2 0-1 10-3 0-4-5 2-2-4 6-2 1-14 1-1zm69 48l2 2 0 2-2 0 0 1-1-1-6-9zm-13 -15l-2 2-3 1-3-1-1-2 1 0zm-2 -7l3 2-3 2-3-2-1-2zm-20 0l2 0-1 14 5-8-5 16-3-2 0-15-5 3-3-2 0-1 7-5zm30 -2l-2 10 2-2 4 0 1 1-8 4-6 10-2 2-4 2 7-8 1-5-11 6-2-1-1-2 15-6 4-12zm-28 -12l1 1 0 4-1 3-1 1-2-3-2-6 1-2zm20 -7l3 1 0 3 4 1-4 4 0 4 11-2 3 1 2 2-3 2-6 3 0-1 3-5-5 0-18 9-3-2 0-2 12-4 0-3-5-1-2-1 6-3 0-6zm69 13l2 2-6 10 9 9 1 4-3 0-9-10-6 4-4 2 1-2 6-6-2-3 0-2 4 2 3-8-11 6-1-3 12-5 3-1zm-19 -13l0 1-3 2 1 2-1 13 0 10 5-2-5 5 1 17-2-1-1-5 1-1 0-10-17 9-3 0 0-2 7-5 1-19 1 2 1 6 4-1 5 0 0-4-6-1-3-2 4-1 5 0-1-8-9 3-3 0-1-2 16-7zm-14 24l0 8 9-3 0-5-7 0zm89 -16l-3 5-1 5-3-1-3-3 2-5 3 0 6-3zm-15 -10l0 2-5 4-5 7 5 0 1-3 1 0 6 3 0 2 0-1-3 3-4-3-3 3 2 1 0 3 3 1-4 4 0 5 5-3 0 1-6 7-7 7-3 1-2-4 1-2 3 0 4-3 0-6-6 2-4-2 10-4 0-5-1-1-12 5-2-4-1-3 2-1 4 1 5-2 10-11-13 5-3 1-4-3-2-3 7 0 16-3 3-1zm19 -4l4 2 1 2-2 9-1 47-2-5 1-36zm45 36l2 1 1 2 1 4-3-1-5-5 1-1zm-17 -2l2 1-2 1-8 1 1-1zm6 -9l1 1-2 6-3 19-3-4-6 2-2-3-6-20 4 3 5 17 5-1 2 0 1-5 0-13-5 1-2-2 8-2zm-7 -13l2 3 0 2-12 9-1-2 10-13zm23 -7l2 1-1 5-10 17 13-4 4 1 2 1 0 3-3 8-2 16-2 2-5-4-1-1 6-1 4-19-1-4-2 0-14 6-3-1-2-2 0-1 4 0 7-16 1-7zm40 1l4 4 0 6 11 1 3 3-2 7-3 15-4-3-5 1 2 9 4 2 8 0 3-1 2-4 2 6-1 2-13 0-6-2-1-2-3-9-11 3-7-23 17-4-1-6-4-6zm6 14l-1 1-1 6 4 0 1 2-5 2 0 5 6 0 1-2 2-13zm-7 2l-10 3 2 5 9-2 0-6zm1 10l-8 3 1 4 8-2zm81 -4l3 2-1 2-6 1 1-4zm-10 -10l6 5-3 4-2 10 8 2 1 2-2 2-7-1-11 3-2-5 8-2 0-8-1-1-5 2-2-4 0-1 8-3 1-5zm-15 -1l1 1-4 8-8 25-6 4 0-3 6-7 5-18 4-9 1-2zm25 -11l1 1-2 2-4-1-6 0-18 5-4 0-2-4 7 0 25-4zm47 31l-1 1-8 2 0-1 0-1 4-1zm1 -7l-1 2-7 2-2-1 6-3zm-26 -6l0 14 1 6-1 9-1-2-1-15 0-8zm26 -1l1 1 2 3 1 20 8 1 3 2-3 2-8-2-1 3-4-3-7 1-9 2-4 0 0-2 23-4 0-4-1-16-1-2-3 1-2-1zm-2 -15l1 2-1 6 4-1 3 1 0 1-1 1-8 2-6 10-1 8 1 6 7-2 1 0 1 1-9 2-1 2-3-3 0-11 2-6 2 1 1-6-6 1-2-1-1-1 11-4 3-10 1-1zm-16 4l-1 1-14 14-3 1 1-4 13-18 3 2z"/>
<rect x="175" y="264" width="480" height="257" fill="#fff"/>
<path transform="scale(0.2)" fill="#2a2a2a" d="M917 1356l9 8 4-4-9-8zm11 13l-11 0 0 5 6 0 0 11-7 5 4 5 3-4 3-2 10 5 24 0 2-6-22 1-7-1-5-2zm5 -17l0 4 17 0-4 3-6-2-4 3 7 3-11 0 0 24 6 0 0-7 5 0 0 7 5 0 0-7 6 0 0 3-4 0 1 4 5 0 2-1 1-4 0-19-6 0-2-2 8-6-3-3zm21 15l0 2-6 0 0-2zm-16 6l5 0 0 3-5 0zm0 -4l0-2 5 0 0 2zm16 4l0 3-6 0 0-3zm16 -19l-1 28-2 5-3 5 4 4 4-7 2-8 10 0 0 14 6 0 0-14 10 0 0 8-8 1 2 5 8 0 3-2 1-4 0-35zm5 5l9 0 0 6-9 0zm25 0l0 6-10 0 0-6zm-25 11l9 0 0 6-9 0zm25 0l0 6-10 0 0-6z"/>
<path transform="scale(0.2)" fill="#2a2a2a" d="M1025 1391l0-33 7 0 0 33zm10 1l7-35 6 0-7 35zm48 -17l-1 6-3 6-6 3-6 1-7-1-6-3-3-5-1-7 1-7 3-6 6-3 7-1 7 1 5 3 3 6zm-7 0l0-5-4-5-3-2-5 0-3 2-3 3-1 4 0 5 1 4 3 3 3 2 5 0 3-2 3-3zm32 26l-4-8-2-5-1-6 0-9 3-9 4-7 6 0-5 10-2 12 2 11 5 11zm25 -15l6-1 3-2 0-4-8 0 0-5 15 0 0 12-7 4-9 1-7-1-5-3-3-5-2-7 2-8 3-5 5-3 7-1 6 0 4 2 3 3 2 3-6 2-4-4-5-1-4 1-3 2-2 6 0 7 3 5zm49 -17l-1 5-5 4-4 1-10 0 0 12-7 0 0-33 20 1 5 4zm-7 0l0-2-3-3-10 0 0 10 10 0 2-2zm12 22l0-33 7 0 0 33zm45 -16l-1 6-3 6-6 3-7 1-7-1-5-3-3-5-1-7 1-7 3-6 5-3 7-1 7 1 6 3 3 6zm-7 0l-1-5-3-5-3-2-5 0-3 2-3 3-1 4 0 5 1 4 3 3 3 2 5 0 3-2 3-3zm9 26l6-11 1-11-2-12-5-10 7 0 4 7 2 6 1 6-1 9-2 8-4 8z"/>
<rect x="182" y="280.6" width="445" height="1" fill="#555"/>
<path transform="scale(0.2)" fill="#5a58b0" d="M1207 1490l9 4 2-1 0-1-4-2zm-3 5l-1 0 11 3 7 3 2-1-1-2-6-2zm19 -23l6 30-31 0-6-30zm-24 33l-1-2 32 0 0 2 3 0-6-32 2-1-5-2-1 1-31 0-3-1 7 36zm8 -31l-5-1-1 6-4 6 1 0 1-1 4-4 6 5-12 6 1 1 13-6 13 5 2-2-13-4 6-6 2-1-4-2-2 1-11 0 1-2zm-4 5l1-1 11 0-5 6z"/>
<path transform="scale(0.2)" fill="#5a58b0" d="M1253 1502l0-2 9 0 5-21-9 4 1-4 9-4 4 0-6 25 8 0-1 2zm35 0l-4 0 3-7 5-7 9-10-18 0 1-3 22 0 0 3-13 14z"/>
<path transform="scale(0.2)" fill="#555" d="M1362 1490l-5-2-7 11 1 1 2-2 7-8zm-38 -2l0 1 3 5 2 5 3 0 0-2-2-4zm36 12l-3 3-8 0 0-16 1-1-5 0 0 17-7 0 0-16 2-1-5 0 0 17-15 0 1 1 42 0 1-1zm-7 -27l0 4-23 0 0-4zm-23 13l0-2 23 0 0 2 3 0 1-13 2-1-4-2-2 1-22 0-4-1 0 17zm0 -3l0-5 23 0 0 5zm43 -10l1 1 32 0 1-1-4-3-3 3zm26 15l-1 0 6 6 4 7 3 0 0-3-4-5zm-21 0l-4 6-6 7 8-5 5-6 2-1zm-10 -6l1 1 19 0 0 19-8 0 5 2 1 2 3-1 2-2 1-20 20 0-5-3-2 2zm51 -10l1 1 31 0-11 8-4 0 0 21-9 0 0 1 5 1 2 2 3-1 2-2 1-21 18-9-4-3-2 2z"/>
<path transform="scale(0.2)" fill="#333" d="M1500 1493l-2 6-5 3-8 1-4-1-3-2-2-4 6-1 2 3 5 0 3-1 1-4-2-3-2-1-4 0-2 1-6 0 1-15 20 0 0 4-14 0-1 7 6-2 6 2 4 4zm34 9l-7 0-12-27 7 0 8 23 9-23 7 0z"/>
<path transform="scale(0.2)" fill="#555" d="M1579 1469l4 5 2 0 1-2-2-2zm8 9l-1 0 6 3 4 4 3 0-1-2-3-3zm-8 1l-4-2-4 5-7 4 1 0 4-1zm-12 -7l-1 0-1 4-4 3 0 1 2 1 3-1 1-5 32 0-2 5 1 0 5-4 1-1-3-2-2 1-32 0zm7 33l0-2 17 0 0 2 4 0 0-11 1 0-3-3-2 2-17 0-3-1 7-4 5-5 4 4 9 6 6 3 3-3-12-5-5-2-4-4 2 0-5-1-3 4-5 4-13 7 1 0 2-1 8-3 0 14zm17 -11l0 8-17 0 0-8zm29 -19l-1 0-2 4-3 2 0 2 2 0 3-2zm5 16l-5-1 0 11 1 3 18 0 5-1 0-1-1-1 0-5-3 6-16 0 0-10zm-9 1l-1 0-2 4-4 4 0 2 3 0 2-2 2-5zm27 -1l0 1 4 4 2 5 2 0 1-2-2-4zm-15 -2l3 4 2 4 2 0 1-2-2-3zm0 -16l-1 6-3 5-5 3-9 3 1 1 9-3 6-3 4-5 2-7 13 0-1 9-2 4-9 0 0 1 5 1 1 2 5-2 3-5 1-10 2-1-3-2-2 2-33 0 0 1z"/>
<path transform="scale(0.2)" fill="#333" d="M1670 1502l0-27 7 0 0 27zm11 1l7-29 5 0-7 29zm48 -14l-1 5-4 5-5 3-7 1-7-1-5-3-3-4-1-6 1-6 3-5 5-3 7 0 7 1 5 2 4 5zm-7 0l-1-4-2-3-3-2-4-1-4 1-3 2-2 3-1 4 1 4 2 3 3 2 4 0 4 0 3-2 2-3z"/>
<path transform="scale(0.2)" fill="#555" d="M1750 1469l0 1 2 6 2 0 1-1-1-3zm-3 11l0 1 2 7 0 6 2 0 1-3-1-4zm12 -5l-3 3-11 0 1 1 16 0 1-1zm29 -3l-5-1 0 8-7 0 0-9 2-1-5 0 0 10-7 0 0-6 2-1-4-1 0 8-2 0 4 2 1-1 16 0 0 2 3-1 0-8zm-2 9l-2 2-23 0 0 1 11 0-2 5-5 0-3-1 0 18 3-1 0-15 5 0 0 14 2-1 0-13 5 0 0 13 3-1 0-12 4 0 0 12-4 0 0 1 3 1 0 2 3-2 1-14 2 0-4-3-1 2-12 0 4-5 13 0 1 0zm-41 17l2 3 14-7-6 1 4-13 2-1-5-1-2 16zm83 0l-26 0 0-22 26 0zm-26 5l0-4 26 0 0 5 4-1 0-26 2-1-4-3-2 2-26 0-3-1 0 30zm62 -34l4 8 2 0 1-2-1-3zm-6 13l-1 0 4 9 2 8 2 0 1-3-2-6zm22 -6l-2 2-24 0 0 1 30 0zm-28 4l-2 0 5-9 2-1-5-1-5 11-7 9 1 1 2-2 4-5 0 23 4-1 0-24zm29 20l-2 2-8 0 8-19 2-1-5-1-6 21-18 0 1 1 31 0 2 0zm32 -16l6 9 2 0 1-2-3-3zm-10 -14l-5-1-2 7-5-1 0 29 3 0 0-4 10 0 0 3 3-1 0-24 3-1-4-3-2 2-6 0 3-5zm1 7l0 10-10 0 0-10zm-10 11l10 0 0 11-10 0zm27 -18l-5-1-3 9-5 7 1 1 2-2 5-7 12 0-1 17-2 8-9 0 5 1 1 3 4-2 3-3 2-23 2-1-4-3-2 2-10 0 2-5zm46 -1l0 5-15 0 0-3 1-2-4 0 0 5-10 0 1 1 9 0 0 14-12 0 1 1 11 0-5 5-7 4 0 1 10-4 6-6 13 0 2 3 7 5 4 1 3-2-8-3-7-4 14-1-4-3-2 3-5 0 0-14 9-1-4-3-2 3-3 0 0-3 1-2zm-15 6l15 0 0 4-15 0zm5 17l0 5-10 0 0 1 10 0 0 6-18 0 1 1 38 0 1-1-4-3-3 3-11 0 0-6 10-1-3-3-2 3-5 0 0-4 1-1zm-5 -3l0-4 15 0 0 4zm0 -9l15 0 0 4-15 0zm71 -5l-2 3-12 0 0-7 1-2-5 0 0 9-19 0 1 1 16 0-7 11-11 9 0 1 7-4 5-4 8-10 0 14-10 0 0 1 10 0 0 9 1 0 3-1 0-8 10-1-4-3-2 3-4 0 0-17 7 12 10 8 3-3-11-7-8-10 17 0 1-1zm10 25l2 3 16-7zm13 -29l-4-2-6 9-3 3 1 3 9-2-7 7-3 2 1 3 16-4 0-1-14 2 13-12 2 0-5-2-2 3-9 1 10-9zm10 30l0-9 14 0 0 9zm-3 -11l0 16 3-1 0-2 14 0 0 2 4 0 0-13 1 0-3-3-2 2-14 0zm21 -16l-2 3-7 0 0-6 2-2-5 0 0 8-13 0 1 1 12 0 0 7-10 0 0 1 24 0-4-3-2 2-5 0 0-7 13 0zm37 14l-1 0 3 5-12 1 9-11 1-1-4-2-5 11-3 3 2 3 13-3 0 3 2 1 1-2-2-4zm-2 -18l-5-1-3 9-3 7 2-2 4-6 16 0-2 22-2 3-7 0 0 1 4 1 1 2 2 0 4-2 1-3 2-23 2-1-3-3-2 2-15 0 2-5zm-13 6l-2 2-2 0 0-8 2-1-5 0 0 9-8 0 0 1 7 0-3 9-5 8 1 1 3-3 5-8 0 20 3-1 0-21 3 6 2 0 1-1-1-3-5-3 0-4 8 0zm40 30l5-2 2-4-2-4-5-1-5 1-2 4 2 4zm0 -2l-4-1-1-3 1-3 4-1 3 1 2 3-2 3z"/>
<path transform="scale(0.2)" fill="#5a58b0" d="M2196 1469l-5 0 1 5-17 0 0 1 17 0 1 4-15 0 1 1 14 0 1 5-20 0 1 1 17 0-7 6-9 5 0 1 3-1 9-4 1 9-1 1 3 3 13-7-11 3-3-10 7-6 4 7 5 5 6 4 7 3 2-3-8-3-7-4 11-5-5-3-7 7-7-8 18 0 1 0-4-3-2 2-14 0-1-5 16 0-4-3-2 2-10 0-1-4 18-1-4-3-2 3-12 0-1-4z"/>
<path transform="scale(0.2)" fill="#5a58b0" d="M2250 1487l3 0 4-2 1-2 0-3-3-2-3 0-5 1-2 3-4 0 3-5 3-1 6-1 4 0 4 2 2 4-2 4-2 2-5 2 6 2 1 4-1 3-4 3-4 2-5 0-5-1-3-3-1-3 3-1 3 4 5 1 4-1 3-2 0-3-2-3-7-1 0-3zm13 15l0-2 3-3 15-9 3-4 0-4-4-2-5 1-3 3-4-1 3-4 4-2 5 0 3 0 5 3 1 3-2 5-19 14 17 0 0 2z"/>
<path transform="scale(0.2)" fill="#555" d="M2339 1481l-2 3-12 0 1 1 16 0 1-1zm-34 19l2 3 15-6 0-1zm14 -30l-5-1-5 9-4 2 2 4 8-2-6 7-4 2 2 3 14-4 0-1-13 2 13-13 2 0-4-2-3 4-8 1 9-10zm22 21l0 11-14 0 0-11zm-14 14l0-2 14 0 0 2 3 0 0-13 2-1-4-2-2 1-13 0-3-1 0 17zm10 -35l-4-1-7 10-8 7 0 1 9-6 8-9 5 7 7 6 3-3-8-4-4-4-3-3zm58 19l-5 0 0 12-13 0 0-16 11 0 0 3 3-1 0-13 2-1-5 0 0 11-11 0 0-13 1-1-5-1 0 15-11 0 0-10 2-1-5 0 0 11-1 1 3 2 1-2 11 0 0 16-13 0 0-11 2-1-5 0 0 12-2 1 4 2 1-2 30 0 0 3 3 0 0-1 0-14zm9 -17l1 1 31 0-11 8-3 0-1 21-9 0 0 1 5 1 2 2 3-1 3-2 0-21 18-9-4-3-2 2zm45 0l0 1 33 0 0 29-9 1 5 1 2 2 5-2 1-3 0-28 7 0-4-4-3 3zm21 9l0 11-12 0 0-11zm-15 -1l0 18 3-1 0-4 12 0 0 3 3-1 0-13 2-1-4-2-2 1-11 0-3-1zm57 -7l-1 1 4 4-15 0 9-7 2-1-4-1-6 7-4 2 2 4 17-3 1 2 2 0 0-2-2-3zm15 15l-5-1 0 15 1 2 9 1 8-1 0-1-1-1 0-5-3 5-11 0 0-6 15-4-4-3-11 7 0-7zm-1 -18l-4-1 0 14 1 3 8 0 9-1 0-1-1-1-1-4-2 5-11-1 0-5 15-4-4-2-11 5 0-6zm-23 35l0-9 10 0 0 6-5 0 0 1 3 1 1 2 2-1 2-2 0-17 2-1-4-3-1 2-9 0-4-1 0 23zm10 -20l0 4-10 0 0-4zm0 10l-10 0 0-5 10 0zm56 -11l6 9 2 0 1-2-3-3zm-10 -14l-5-1-2 7-5-1 0 29 3 0 0-4 10 0 0 3 3-1 0-24 2-1-3-3-2 2-6 0 3-5zm1 7l0 10-10 0 0-10zm-10 11l10 0 0 11-10 0zm27 -18l-5-1-3 9-5 7 1 1 2-2 5-7 12 0-1 17-2 8-9 0 5 1 1 3 4-2 3-3 2-23 2-1-4-3-2 2-10 0 2-5zm21 -1l0 1 2 6 2 0 1-1-1-3zm-3 11l0 1 2 7 0 6 2 0 1-3-1-4zm11 -5l-2 3-11 0 0 1 17 0 0-1zm30 -3l-5-1 0 8-7 0 0-9 2-1-5 0 0 10-7 0 0-6 2-1-5-1 0 8-1 0 3 2 2-1 16 0 0 2 3-1 0-8zm-2 9l-2 2-24 0 1 1 11 0-2 5-5 0-3-1 0 18 3-1 0-15 5 0 0 14 2-1 0-13 5 0 0 13 2-1 0-12 5 0 0 12-4 0 0 1 3 1 0 2 3-2 1-14 2 0-4-3-1 2-12 0 4-5 13 0 1 0zm-41 17l2 3 14-7-6 1 4-13 2-1-5-1-2 16zm83 0l-26 0 0-22 26 0zm-26 5l0-4 26 0 0 5 4-1 0-26 2-1-4-3-2 2-26 0-3-1 0 30zm62 -34l4 8 2 0 1-2-1-3zm-6 13l-1 0 4 9 1 8 2 0 1-3-1-6zm22 -6l-2 2-24 0 0 1 29 0 1 0zm-28 4l-2 0 5-9 1-1-5-1-5 11-6 9 1 1 2-2 4-5 0 23 3-1 0-24zm29 20l-2 2-8 0 8-19 2-1-6-1-5 21-18 0 1 1 31 0 1 0zm33 -17l0 19 1 2 9 0 9-1 1-1-2 0 0-7-3 7-11 0-1-1 0-17 10 0 0 3 3 0 0-14 2 0-4-3-2 2-12 0 0 1 13 0 0 10-9 0-4-2zm-12 -10l0 5-3 0 0-5zm-12 5l0 27 3 0 0-3 15 0 0 3 2-1 1-24 2-1-4-2-2 1-3 0 0-5 9-1-4-3-2 3-18 0 0 1 7 0 0 5-6-1zm18 17l0 6-15 0 0-6zm0 -1l-15 0 0-3 1 0 2-2 2-3 1-6 3 0 0 9 6 0zm0 -7l-4 0 0-7 4 0zm-15 4l0-11 3 0 0 6zm52 -12l0-1 28 0 0 2 3-1-2 2-14 0 2-2-5 0-1 2-18 0 0 1 18 0 0 3-7 0-3-1 0 19-9 0 1 1 43 0-4-3-2 2-2 0 0-16 2-1-4-2-2 1-11 0 1-3 21 0 1 0-5-3 1-6 2-1-4-3-2 2-27 0-4-1 0 10zm4 24l0-3 21 0 0 3zm0 -5l0-3 21 0 0 3zm0 -4l0-3 21 0 0 3zm0 -4l0-3 21 0 0 3zm14 -18l0 5-7 0 0-5zm3 0l7 0 0 5-7 0zm-13 0l0 5-8 0 0-5zm50 -3l-1 0 4 3 2 4 2 0 1-2-2-3zm22 5l-3 3-37 0 1 1 14 0-1 8-2 8-4 6-7 5 7-3 5-5 3-5 2-6 15 0-1 11-2 5-10 0 5 2 1 2 6-2 3-6 1-12 2 0-4-3-2 2-14 0 1-7 24 0 1 0zm27 -5l3 4 2 0 1-2-2-1zm21 21l-3 3-13 0 0-3 1-1-5 0 5-2 14 3 1-1-3-2-9-2 5-5 9 0-4-3-2 2-18 0 3-2 2-1-5-1-3 4-12 0 0 1 10 0-4 5 12 1-8 3-12 1 1 1 5 0 13-2 0 4-20 0 1 1 17 0-8 6-10 4 0 1 11-4 9-5 0 10 3-1 1 0 0-11 7 7 11 4 3-3-11-3-9-5 18 0 1-1zm-26 -6l3-4 12 0-5 5zm-8 -13l-1 0-2 4-2 1 0 2 1 0 3-1 1-3 32 0-3 3 1 1 7-4-3-3-2 2-32 0zm49 35l5-2 2-4-2-4-5-1-5 1-2 4 2 4zm0 -2l-4-1-1-3 1-3 4-1 3 1 2 3-2 3z"/>
<path transform="scale(0.2)" fill="#3a3a3a" d="M1209 1579l6 5 2 0 1-2-3-2zm-4 6l13 6 3-1-1-2-4-3zm7 -20l-5-2 19 0 0 29-26 0 0-29 6 0-5 12 6-5 4 5-11 6 13-4 9 4 1-3 3-1-10-2 6-6 2-1-4-3-3 2-7 0 1-2zm-12 29l0-1 26 0 0 3 5-2 0-31 2 0-5-4-3 3-25 0-6-3 0 37 4-1zm8 -24l1-2 8 0-4 5z"/>
<path transform="scale(0.2)" fill="#3a3a3a" d="M1250 1592l0-4 7 0 0-18-7 4 0-5 8-4 6 0 0 23 7 0 0 4zm45 -23l-8 13-2 10-6 0 2-9 9-14-16 0 0-4 21 0zm5 23l0-5 7 0 0 5z"/>
<path transform="scale(0.2)" fill="#333" d="M1481 1583l-2 6-6 3-7 1-4-1-3-2-3-4 7-1 2 3 4 0 4-1 1-4-2-3-2-1-4 0-2 1-7 0 2-15 20 0 0 4-14 0-1 7 6-2 6 2 4 4zm34 9l-7 0-12-27 7 0 9 23 8-23 7 0z"/>
<path transform="scale(0.2)" fill="#444" d="M1563 1569l-7-3-4 6-6 5 5-1zm6 -1l9 8 3 0 1-2 0-2-2-2 8-4-5-4-3 2-13 0 2-1 0-2-3-2-5 0 3 5-14 0-1-2-1 3-5 4 1 2 4 0 2-2 0-4 30 0 0 5-5-2zm-2 5l8 8-3 2-14 0-3-1 7-4zm-9 22l0-2 14 0 0 3 6-1 0-10 2-1-4-2 8 3 1-2 3-3-11-2-9-5 2-1-8-2-3 4-4 5-13 7 10-3 0 13zm14 -11l0 8-14 0 0-8zm31 -20l-3 4-4 1 0 3 3 1 4-2zm7 16l-7 0 0 11 1 3 18 1 5-2 1-2-2-1 0-5-4 5-13 0-1-9zm-12 2l-2 3-4 4 0 3 3 0 3-2 1-5zm28 -1l3 5 2 4 3 1 2-3-2-4zm-15 -3l4 8 3 1 2-2-2-4zm-1 -16l-1 6-3 5-5 4-8 4 10-3 8-3 4-6 2-7 10 0-1 9-2 3-8 1 5 2 1 3 6-2 3-5 2-10 2-1-6-3-3 2-32 0 0 1z"/>
<path transform="scale(0.2)" fill="#333" d="M1653 1592l0-27 7 0 0 27zm11 1l7-29 5 0-6 29zm48 -14l-1 5-3 5-5 3-7 1-7-1-6-3-3-4-1-6 1-6 3-5 6-3 7 0 7 1 5 2 3 5zm-7 0l0-4-2-3-3-2-4-1-5 1-3 2-2 3 0 4 0 4 2 3 4 2 4 0 4 0 3-2 2-3z"/>
<path transform="scale(0.2)" fill="#444" d="M1734 1559l2 7 3 1 2-2-1-3zm-2 11l-1 0 1 7 0 6 3 1 2-3-1-4zm11 -6l-3 4-11 0 1 1 17 0 1-1zm31 -2l-7-1 0 8-5 0 0-9 2-1-6 0 0 10-5 0 0-7 2 0-7-1 0 7-2 2 6 2 1-2 14 0 0 1 3 0-2 2-22 0 0 1 10 0-1 5-8-2 0 19 5-1 0-15 3 0 0 14 3-1 0-13 3 0 0 13 5-1 1 1 0 3 5-2 1-3 0-11 2 0-5-3-3 2-10 0 5-5 13 0-4-3 1-1 0-7zm-6 18l0 11-3 0 0-11zm-39 7l3 6 14-9-6 1 5-13 2-1-7-1-2 15zm83 1l-23 0 0-22 23 0zm-23 5l0-4 23 0 0 5 6-2 0-25 3-1-7-4-3 3-21 0-7-2 0 32 4-1zm60 -34l4 8 3 0 2-2-1-3zm-5 13l-1 0 3 9 1 8 3 1 2-3-1-7zm21 -7l-3 3-22 0 0 1 30 0 1 0zm-26 5l-2 0 5-9 2 0-9-3-4 12-6 9 7-4 0 21 6-1 0-24zm27 19l-3 3-7 0 10-19 2 0-8-2-5 21-17 0 1 2 32 0 1-1zm33 -15l3 9 4 0 2-2-2-3zm-8 -14l-8-1-1 7-5-2 0 31 4-2 1-3 7 0 0 3 6-1 0-24 2-1-6-3-2 2-5 0 5-5zm-2 7l0 10-7 0 0-10zm-7 11l7 0 0 11-7 0zm27 -18l-8-1-3 9-3 7 3-1 6-7 8 0-1 21-2 3-8-1 5 3 1 3 6-1 3-4 1-5 1-18 2-1-5-4-3 3-8 0 3-5zm42 -1l0 5-11 0 0-4 2-1-8 0 0 5-9 0 0 1 9 0 0 14-11 0 0 1 11 0-5 5-6 4 11-4 7-5 11 0 6 5 7 4 4-6-8-1-7-2 14-1-5-4-3 4-3 0 0-14 10-1-5-4-3 4-2 0 0-4 2-1zm-11 6l11 0 0 4-11 0zm3 17l0 5-10 0 0 1 10 0 0 6-17 0 0 1 39 0 1-1-6-4-3 4-8 0 0-6 10 0-6-4-2 3-2 0 0-4 1-1zm-3 -3l0-4 11 0 0 4zm0 -9l11 0 0 4-11 0zm69 -6l-3 4-9 0 0-8 2-1-8-1 0 10-18 0 0 1 15 0-7 11-10 10 7-3 5-3 8-8 0 10-9 0 0 1 9 0 0 9 5-1 1-8 9-1-5-4-3 4-1 0 0-17 6 12 4 5 5 3 2-3 3-1-11-7-5-4-3-5 17 0 0-1zm11 25l2 6 17-9zm15 -28l-7-2-5 8-4 3 3 5 6-2-5 5-4 2 3 5 15-6-13 1 14-10 2-1-7-3-3 4-7 0zm10 31l0-10 11 0 0 10zm-5 -13l0 17 5-1 0-2 11 0 0 3 5-1 0-13 2-1-5-3-2 3-10 0zm21 -16l-3 4-5 0 0-7 2-1-7 0 0 8-11 0 0 1 11 0 0 7-9 0 0 1 25 0 0-1-5-3-2 3-4 0 0-7 13-1zm37 14l-1 0 2 5-9 1 9-11 2 0-7-3-4 11-2 2-1 1 3 5 10-5 0 3 3 1 1-2-1-4zm-14 -12l-3 3 0-8 1-1-7-1 0 10-7 0 0 1 7 0-3 9-4 8 0 1 2-2 5-5 0 16 6-1 0-21 2 6 3 1 1-2-1-3-5-3 0-4 7 0-2 5 0 1 7-8 13 0-1 21-2 3-8 0 5 2 1 3 4 0 3-2 1-3 2-5 1-18 2-1-5-4-3 3-12 0 3-5 2-1-8-2-3 11z"/>
<rect x="237" y="322.5" width="389.5" height="177.8" fill="none" stroke="#5a5a5a" stroke-width="1"/>
<path transform="scale(0.2)" fill="#333" d="M1192 2555l0-4 7 0 0-17-6 3 0-4 6-4 5 0 0 22 6 0 0 4zm22 0l0-6 5 0 0 6zm66 0l-6 0-10-26 6 0 7 22 7-22 5 0z"/>
<path transform="scale(0.2)" fill="#333" d="M1308 2546l-1 5-3 3-4 1-9 0 0-18 9 0 4 1 3 4zm-4 0l0-3-2-2-7-1 0 12 7-1 2-3zm23 0l-1 5-3 3-4 1-8 0 0-18 9 0 3 1 3 4zm-4 0l0-3-2-2-6-1 0 12 6-1 2-3zm5 12l0-1 15 0 0 1zm21 -18l0 5 9 0 0 3-9 0 0 7-4 0 0-18 13 0 0 3zm20 0l0 15-3 0 0-15-6 0 0-3 15 0 0 3z"/>
<path transform="scale(0.2)" fill="#555" d="M1413 2532l0 4-17 0 0-4zm0 -1l-17 0 0-4 17 0zm-19 -5l0 13 2 0 0-2 17 0 0 2 2-1 0-11 2-1-3-2-2 2-15 0-3-2zm2 17l-3 8-6 7 6-4 3-4 2 3 3 3 4 1 16 0 1-2-16 0 0-7 12-1-3-3-2 3-7 0 0-5 15 0 1-1-4-3-1 2-30 0 1 2 15 0 0 12-4-1-3-4 2-4 2-1zm44 -10l-2 3-3 0 0-8 7-2-3-2-14 5 8-1 0 8-8 0 0 1 7 0-3 7-4 7 0 1 3-3 5-8 0 17 2-1 0-17 5 6 1 0 1-2-2-2-5-3 0-2 8-1zm15 -2l0 19-9 0 0-19zm-9 24l0-3 9 0 0 3 3 0 0-24 1-1-3-2-1 1-8 0-3-1 0 28z"/>
<path transform="scale(0.2)" fill="#333" d="M1492 2546l-2 6-4 3-6 0-6-2-1-4 5-1 1 3 4 0 3-2 0-2-1-4-2-1-3 0-2 2-5 0 1-15 16 0 0 4-11 0 0 7 4-2 5 1 3 4zm27 9l-6 0-9-26 5 0 7 22 7-22 5 0z"/>
<path transform="scale(0.2)" fill="#555" d="M1555 2523l2 5 2 0 1-1-1-2zm6 9l8 7 1 0 0-3-3-2zm-6 1l-3-2-4 4-5 4 3-1zm-10 -6l-1 0-1 3-3 3 0 1 2 1 2-1 1-4 25 0 0 4 3-4 2 0-3-3-2 1-25 0zm5 30l0-2 15 0 0 3 2-1 0-10 1 0-2-3-2 2-13 0-2-1 9-8 3 3 7 6 5 2 2-2-9-4-4-3-3-3 1 0-4-1-6 7-10 7 2-1 6-3 0 13zm15 -10l0 7-15 0 0-7zm22 -17l-2 3-3 2 0 2 2 0 3-2zm4 14l-3 0 0 10 0 2 14 0 4 0 0-1-1-1 0-5-2 5-13 0 0-9zm-7 1l-1 0-1 4-4 4 1 1 2 0 2-3zm22 0l4 8 2 0 1-2-2-3zm-12 -3l4 8 1 0 1-2-2-3zm0 -15l-1 6-3 4-4 4-6 3 7-2 5-4 3-4 2-7 10 0-1 9-1 4-7 0 3 1 1 2 4-1 2-5 2-10 1 0-3-3-1 2-26 0 0 1z"/>
<path transform="scale(0.2)" fill="#333" d="M1627 2555l0-26 6 0 0 26zm8 1l6-28 4 0-5 28zm39 -14l-1 5-3 5-4 2-6 1-5-1-4-2-3-4-1-6 1-6 3-4 4-2 5-1 6 1 4 2 3 5zm-6 0l-1-5-2-3-3-1-3 0-3 1-2 3-1 3 1 7 2 3 3 1 5 0 2-2 2-3z"/>
<path transform="scale(0.2)" fill="#555" d="M1706 2536l11 0 0 8-11 0zm0 -1l0-7 11 0 0 7zm0 10l11 0 0 8-11 0zm-3 -19l0 32 2-1 1-3 11 0 0 4 2-1 1 0 0-29 1-1-3-2-1 1-11 0-3-1zm-10 -2l0 8-6 0 0 1 6 0-3 9-4 7 1 1 2-3 4-7 1 18 2-1 0-19 4 5 1 1 1-2-2-2-4-3 0-4 6 0-3-3-2 2-1 0 0-7 1-1zm40 0l4 7 2 0 1-2-2-2zm23 15l-2 3-11 0 0-9 14 0-3-3-2 2-6 0 7-7-4-1-4 8-17 0 0 1 13 0 0 9-16 0 0 1 15 0-1 4-3 4-5 3-7 3 1 1 8-3 5-4 3-4 2-4 2 5 3 4 4 4 6 2 2-3-5-2-5-2-4-4-2-4 15 0 0-1zm26 -1l4 8 2 0 1-2-2-3zm-8 -13l-4-1-1 6-4-1 0 28 2-1 0-3 8 0 0 3 3-1 0-23 1-1-3-2-1 1-5 0 3-5zm1 6l0 10-8 0 0-10zm-8 11l8 0 0 10-8 0zm21 -17l-4-1-2 8-4 7 1 0 1-1 4-7 10 0-1 16-2 7-6 0 0 1 3 1 1 2 4-1 2-4 1-21 2-1-3-2-2 1-8 0 2-5zm28 13l-9 0 0-7 9 0zm0 1l0 7-9 0 0-7zm3 -1l0-7 10 0 0 7zm0 1l10 0 0 7-10 0zm-12 10l0-2 9 0 0 8 3 2 13 0 4-1 0-1-1-1 0-6-3 6-12 0-1-1 0-6 10 0 0 2 2-1 0-17 2 0-3-3-2 2-9 0 0-5 1-1-4-1 0 7-9 0-3-1 0 21zm51 -25l3 7 2 0 0-2-1-2zm-5 12l-1 0 3 8 1 7 2 1 1-3-2-6zm17 -6l-2 2-19 0 1 1 23 0 1 0zm-22 4l-2-1 4-7 1-1-3-1-4 10-5 9 1-1 4-5 0 21 3-1 0-22zm23 18l-2 3-6 0 6-18 2-1-4-1-5 20-14 0 0 1 26 0 1-1zm12 4l-3-2-1-2 2-1 2 0 2 3-2 5-4 3 0-1 3-2zm54 -12l-2 2-19 0 0 1 24 0 1-1zm9 -16l-2 2-18 0 0-5 2-1-4 0-2 14-2 0 3 2 1-1 20 0-1 10-2 5-9 0 0 1 5 1 1 2 3-1 3-3 2-15 2 0-3-3-1 2-20 0 2-6 23 0 0-1z"/>
<path transform="scale(0.2)" fill="#333" d="M1977 2555l-5 0-10-26 6 0 7 22 6-22 6 0z"/>
<path transform="scale(0.2)" fill="#333" d="M2005 2546l-1 5-3 3-3 1-9 0 0-18 9 0 3 1 4 4zm-3 0l-1-3-2-2-6-1 0 12 6-1 2-3zm23 0l-1 5-4 3-3 1-9 0 0-18 9 0 4 1 3 4zm-4 0l-1-3-2-2-6-1 0 12 7-1 1-3z"/>
<path transform="scale(0.2)" fill="#555" d="M2058 2535l11 11 2-1 0-2-4-4zm-20 -8l0 1 18 0-8 10-11 8 0 1 9-5 7-7 0 23 3-1 0-22 1-1-2-1 4-5 13-1-4-3-2 3zm45 5l0 1 20 0-3-3-2 2zm-5 -6l0 32 2-1 0-29 25 0 0 27-7 0 4 1 1 2 4-1 1-3 0-26 1-1-3-2-1 1-24 0-3-1zm8 12l0 14 2-1 0-3 9 0 0 3 3-1 0-10 1-1-3-2-1 1-9 0-2-1zm2 8l0-7 9 0 0 7zm31 12l4-1 1-4-1-4-4-1-4 1-2 4 2 4zm0 -1l-3-1-1-3 1-3 3-1 3 1 1 3-1 3z"/>
<g fill="none" stroke="#777" stroke-width=".9" stroke-dasharray="5 3"><rect x="371" y="335.4" width="162.7" height="78.6"/><rect x="371.2" y="422" width="163.5" height="61.8"/></g>
<g fill="none" stroke="#4a4a4a" stroke-width=".85"><path d="M302 351.5 H448.7 V383 M302 362.7 H406.7 V383 M258 383 H538.6 V484"/><rect x="335.3" y="365" width="14.7" height="54"/><rect x="287.6" y="388.2" width="14.8" height="60.3"/><rect x="315.6" y="404.5" width="14.8" height="60.6"/><path d="M259 417.5 H285.5 M302.4 418 H308.7 V437 H313.5 M264 458.8 H313.5 M330.4 436.2 H349 V444.3 H402.5 M313.2 476 H389.7 V450.4 H402.5 M409 447.5 H414.3"/><path d="M402.5 441.3 L409 443.5 V452 L402.5 454 Z"/><rect x="414.3" y="435.5" width="34.7" height="23.4"/><path d="M449 438 H465 M449 456 H465 M465 433.5 v9 M465 451.5 v9 M467 433 v3 M467 437 v3 M467 441 v3 M467 451 v3 M467 455 v3 M467 459 v3 M467 434.5 h5 V427.5 M467 442.5 h5 V447.3 M467 452.5 h5 V447.3 M467 460.5 h5 V467"/><path d="M472.3 447.3 H538.6"/><path d="M538.6 413.7 H582.4"/><rect x="582.4" y="408.5" width="9.6" height="10.5"/><path d="M557 389 V395 M557 432 V439 M557 403 V425"/><path d="M555 395 l4 1.5 l-4 1.5 l4 1.5 l-4 1.5 l4 1.5 l-4 1.5" /><path d="M555 425 l4 1.5 l-4 1.5 l4 1.5 l-4 1.5 l4 1.5 l-4 1.5"/><path d="M548 399.5 h6 M548 428.5 h6"/><path d="M573.7 387 V440 M568.5 395 h10.4 M568.5 424 h10.4"/><path d="M568.5 403 L573.7 395.5 L578.9 403 Z M568.5 432 L573.7 424.5 L578.9 432 Z"/><path d="M417.6 382.9 L439.1 375.2 V390.6 Z"/><path d="M426 380 h4 v6 h3"/><path d="M431 375.5 v-4"/></g>
<g fill="#222"><path d="M300 351.5 l5 -2.3 v4.6 z"/><path d="M300 362.7 l5 -2.3 v4.6 z"/><path d="M255.5 383 l5 -2.3 v4.6 z"/><path d="M261.7 458.8 l5 -2.3 v4.6 z"/><path d="M287.6 417.5 l-5 -2.3 v4.6 z"/><path d="M315.6 437 l-5 -2.3 v4.6 z"/><path d="M315.6 458.8 l-5 -2.3 v4.6 z"/><path d="M538.6 442.5 l-2.8 6.5 h5.6 z"/><circle cx="448.7" cy="383" r="1.5"/><circle cx="538.6" cy="413.7" r="1.5"/><circle cx="573.7" cy="413.7" r="1.5"/><circle cx="472.3" cy="447.3" r="1.3"/></g>
<path transform="scale(0.25)" fill="#777" d="M1037 1393l0 12 1 0 0-12zm4 -1l0 15-3 1 0 1 3 0 1-1 0-16zm-16 15l1 2 10-2 0-2-5 1 0-3 4 0 0-1-4 0 0-2-1 0 0 2-4 0 0 1 4 0 0 3zm1 -8l8-1 1 2 1-1-3-5-1 1 1 2-5 1 2-4 6 0 0-1-11 0 0 1 4 0-3 4zm22 -7l-1 12-2 4 1 2 1-2 2-5 8 0 0 7 2 0 0-9-10 0 0-3 13 0 0-2-6 0 0-5-1 0 0 5-6 0 0-4zm25 0l0 15-8 0 0 2 18 0 0-2-9 0 0-8 8 0 0-1-8 0 0-6z"/>
<path transform="scale(0.25)" fill="#777" d="M1029 1417l-4 9 1 1 3-5 4 0-2 5-3-2-1 1 3 3-2 3-3 2 1 1 5-5 3-9-5-1 1-3zm7 0l0 19 2 0 0-11 4 4 1-1-5-5 0 1 0-7zm10 1l3 4 1-1-3-3zm-1 5l0 2 3 0 0 7-1 2 1 1 4-3-1-2-2 2 0-9zm9 -5l-1 4-2 2 1 2 3-3 0-4 4 0 0 5 4 1 0-2-3 0 0-5zm6 9l-3 4-3-4zm-8 -1l0 1 1 0 3 5-5 2 1 2 5-3 5 3 1-2-5-2 4-6z"/>
<path transform="scale(0.25)" fill="#777" d="M1241 1390l7 0 0 1-7 0zm0 -3l7 0 0 2-7 0zm6 -6l0 2-3 0 0-2-2 0 0 2-3 0 0 1 3 0 0 2 2 0 0-2 3 0 0 2 1 0 0-2 3 0 0-1-3 0 0-2zm-7 5l0 6 4 0 0 2-5 0 0 1 4 0-1 2-4 1 1 2 4-2 2-3 2 3 3 2 1-2-3-1-2-2 5 0 0-1-6 0 1-2 4 0 0-6zm-4 -5l0 4-3 0 0 1 3 0-3 8 0 2 3-5 0 9 1 0 0-11 1 3 1-1-2-5 2 0 0-1-2 0 0-4zm26 3l3 6 1-1-3-6zm-7 -3l0 4-2 0 0 2 2 0 0 4-2 1 0 1 2 0 0 5-2 0 1 2 3-1 0-7 2-1 0-1-2 1 0-4 2 0 0-2-2 0 0-4zm13 1l-1 10-2 4-2 2 1 2 4-6 2 5 1-1-2-7 1-9zm-8 16l5-5 0-1-3 3 0-13-2 0 0 13-1 2z"/>
<path transform="scale(0.25)" fill="#777" d="M1238 1433l9 0 0 2-9 0zm0 -2l9 0 0 1-9 0zm-2 -1l0 6 2 0-4 3 1 1 2-1 3 2-7 1 0 2 9-2 8 1 1-1-7-1 3-3 1-1-1 0-8 0 1-1 9 0 0-6zm1 -5l-4 5 1 1 3-3 13 0 0-1-12 0 1-1zm9 13l-4 2-4-2zm9 -11l0 11-2 5 1 1 1-2 1-5 5 0 0 6 2 0 0-6 5 0 0 5-3 0 0 1 4 0 1-16zm2 1l4 0 0 3-4 0zm11 0l0 3-5 0 0-3zm-11 5l4 0 0 3-5 0zm11 0l0 3-5 0 0-3zm5 5l0 2 8-2 0-2-4 1 0-8 3 0 0-1-7 0 0 1 3 0 0 9zm11 -12l0 4-3 0 0 1 3 0-2 7-4 4 1 2 5-6 1-7 4 0-1 10 0 1-4 0 1 1 4 0 1-2 1-11-6 0 0-4zm16 8l0 1-5 0 0-1zm-6 -2l0 12 1 0 0-4 5 0 0 2-3 0 1 2 2-1 1-1 0-10zm1 4l5 0 0 2-5 0zm14 -9l-5 2 0-4-1 0 1 9 7-1 0-2-1-1-1 3-4-1-1-2 6-2zm0 9l-5 2 0-3-1 0 1 8 5 0 2 0 0-3-1-1-1 3-4 0-1-3 6-2zm-15 -5l8 0-3-5-1 1 2 2-5 0 3-3-2-1-3 5zm33 2l0 7 1 0 0-7zm2 -1l0 10-2 0 0 1 3-1 0-10zm-16 3l3 0 0 3-3 1 0 1 3-1 0 5 2 0 0-5 1-1 0-1-1 1 0-3 1 0 0-1-1 0 0-3-2 0 0 3-1 0 1-5 3 0 0-1-3 0 1-3-2 0 0 3-2 0 0 1 2 0-2 5zm12 -10l-6 5 1 1 2 0 7 0 0-1 2 1 0-1-4-2zm-3 5l3-3 4 3zm2 4l0 1-2 0 0-1zm-4 -1l0 11 2 0 0-5 2 0 0 3-1 0 0 1 2 0 1-10zm2 4l2 0 0 1-2 0zm16 -10l3 3-1 4-4 6-3 2 1 1 3-2 2-2 3-7 4 6 5 5 0-1-4-4-4-8-4-4z"/>
<path transform="scale(0.25)" fill="#777" d="M1081 1513l3 2 0-1-2-2zm-2 2l3 2 1-1-3-2zm7 5l4 4 1-1-4-4zm-12 -13l3 3 1-1-3-3zm5 3l0 1 10 0-1 3 1 0 2-4-5 0 0-2 4 0 0-1-4 0 0-2-2 0 0 2-4 0 0 1 4 0 0 2zm6 2l0 5-6 0 0 1 5 0-2 3-3 2 1 1 4-3 2-3 5 0 0-1-5 0 0-5zm-12 -1l0 2 3 0 0 7-1 2 1 1 4-3-1-2-2 2 0-9z"/>
<path transform="scale(0.25)" fill="#777" d="M1062 1644l0 4 1 0 0-2 14 0 0 2 1 0 0-4zm0 12l0 1 11 0 0-1zm4 -10l-2 8 11 0-1 6-5 0 1 1 4 0 2-3 1-6-11 0 1-2 9 0 0-2-9 0 1-2z"/>
<path transform="scale(0.25)" fill="#777" d="M1073 1817l3 2 0-1-2-2zm-2 2l3 2 1-1-3-2zm7 5l4 4 1-1-4-4zm-12 -13l3 3 1-1-3-3zm5 3l0 1 10 0-1 3 1 0 2-4-5 0 0-2 4 0 0-1-4 0 0-2-2 0 0 2-4 0 0 1 4 0 0 2zm6 2l0 5-6 0 0 1 5 0-2 3-3 2 1 1 4-3 2-3 5 0 0-1-5 0 0-5zm-12 -1l0 2 3 0 0 7-1 2 1 1 4-3-1-2-2 2 0-9zm19 15l2 0 6-20-2 0zm9 -20l0 4 2 0 0-2 14 0 0 2 1 0 0-4zm1 12l0 1 11 0 0-1zm4 -10l-2 8 11 0-2 6-4 0 1 1 4 0 2-3 0-6-10 0 1-2 9 0 0-2-9 0 0-2z"/>
<path transform="scale(0.25)" fill="#777" d="M1029 1880l10 0 0 3-10 0zm0 -2l0-3 10 0 0 3zm0 6l10 0 0 3-10 0zm4 -13l-1 3-5 0 0 16 2 0 0-2 10 0 0 2 2 0 0-16-7 0 1-3zm15 1l-1 12-2 4 1 2 1-2 2-5 8 0 0 7 2 0 0-9-10 0 0-3 13 0 0-2-6 0 0-5-1 0 0 5-6 0 0-4zm25 0l0 15-8 0 0 2 18 0 0-2-9 0 0-8 8 0 0-1-8 0 0-6z"/>
<path transform="scale(0.25)" fill="#777" d="M1029 1897l-4 9 1 1 3-5 4 0-2 5-3-2-1 1 3 3-2 3-3 2 1 1 5-5 3-9-5-1 1-3zm7 0l0 19 2 0 0-11 4 4 1-1-5-5 0 1 0-7zm10 1l3 4 1-1-3-3zm-1 5l0 2 3 0 0 7-1 2 1 1 4-3-1-2-2 2 0-9zm9 -5l-1 4-2 2 1 2 3-3 0-4 4 0 0 5 4 1 0-2-3 0 0-5zm6 9l-3 4-3-4zm-8 -1l0 1 1 0 3 5-5 2 1 2 5-3 5 3 1-2-5-2 4-6z"/>
<path transform="scale(0.25)" fill="#777" d="M1258 1885l9 0 0 2-9 0zm0 -2l9 0 0 1-9 0zm-2 -1l0 6 2 0-4 3 1 1 2-1 3 2-7 1 0 2 9-2 8 1 1-1-7-1 3-3 1-1-1 0-8 0 1-1 9 0 0-6zm1 -5l-4 5 1 1 3-3 13 0 0-1-12 0 1-1zm9 13l-4 2-4-2zm9 -11l0 11-2 5 1 1 1-2 1-5 5 0 0 6 2 0 0-6 5 0 0 5-3 0 0 1 4 0 1-16zm2 1l4 0 0 3-4 0zm11 0l0 3-5 0 0-3zm-11 5l4 0 0 3-5 0zm11 0l0 3-5 0 0-3zm5 5l0 2 8-2 0-2-4 1 0-8 3 0 0-1-7 0 0 1 3 0 0 9zm11 -12l0 4-3 0 0 1 3 0-2 7-4 4 1 2 5-6 1-7 4 0-1 10 0 1-4 0 1 1 4 0 1-2 1-11-6 0 0-4zm16 8l0 1-5 0 0-1zm-6 -2l0 12 1 0 0-4 5 0 0 2-3 0 1 2 2-1 1-1 0-10zm1 4l5 0 0 2-5 0zm14 -9l-5 2 0-4-1 0 1 9 7-1 0-2-1-1-1 3-4-1-1-2 6-2zm0 9l-5 2 0-3-1 0 1 8 5 0 2 0 0-3-1-1-1 3-4 0-1-3 6-2zm-15 -5l8 0-3-5-1 1 2 2-5 0 3-3-2-1-3 5zm33 2l0 7 1 0 0-7zm2 -1l0 10-2 0 0 1 3-1 0-10zm-16 3l3 0 0 3-3 1 0 1 3-1 0 5 2 0 0-5 1-1 0-1-1 1 0-3 1 0 0-1-1 0 0-3-2 0 0 3-1 0 1-5 3 0 0-1-3 0 1-3-2 0 0 3-2 0 0 1 2 0-2 5zm12 -10l-6 5 1 1 2 0 7 0 0-1 2 1 0-1-4-2zm-3 5l3-3 4 3zm2 4l0 1-2 0 0-1zm-4 -1l0 11 2 0 0-5 2 0 0 3-1 0 0 1 2 0 1-10zm2 4l2 0 0 1-2 0zm12 -2l0 7 14 0 0 2 2 0 0-9-2 0 0 6-5 0 0-7 6 0 0-7-2 0 0 5-4 0 0-7-2 0 0 7-4 0 0-5-2 0 0 7 6 0 0 7-5 0 0-6z"/>
<path transform="scale(0.25)" fill="#777" d="M1709 1466l0 6-6 0 0-6zm-12 6l0 1 5 0-1 4-4 4 1 1 4-4 1-5 6 0 0 9 2 0 0-9 4 0 0-1-4 0 0-6 3 0 0-2-16 0 0 2 4 0 0 6zm19 12l2 0 6-20-2 0zm12 -20l2 3-4 0 0 2 7 0 0 4-8 0 0 1 8 0-2 3-6 3 1 2 3-2 5-5 3 4 5 2 1-1-5-2-3-4 8 0 0-1-8 0 0-4 6 0 0-2-3 0 2-3-2-1-2 4-6 0 2 0-1-2-1-2z"/>
<path transform="scale(0.25)" fill="#4a4a4a" d="M1622 1568l0 12-3 0 0-12-5 0 0-2 12 0 0 2zm13 0l0 12-3 0 0-12-5 0 0-2 12 0 0 2zm6 12l0-14 3 0 0 12 7 0 0 2z"/>
<path transform="scale(0.25)" fill="#777" d="M1671 1563l-3 7 1 1 2-4 8 0 0-1-7 0 1-3zm-1 7l0 3-1 1 0 1 1-1 1 7 7 0 1-3-1 0-1 2-5 0 0-6 2-1 0 5 1 0 0-6 2-1 0 5-2 0 1 1 2 0 0-7-1-1-2 2 0-3-1 0 0 3-2 1 0-2zm-6 -6l1 2-4 0 0 2 2 0 0 7-2 6 1 1 2-5 0-5 3 0-1 7 0 1-2 0 0 1 3 0 1-3 0-7-4 0 0-3 5 0 0-2-4 0 1 0 0-1-1-2zm20 5l-3 3 1 1 3-3zm3 -2l3 3 1-1-3-2zm8 3l3 4 1-1-3-4zm-1 -3l-7 5 0-3-1 0 0 4-5 1 1 2 4-2 8 0 1-3-1 0-1 2-5 0 6-4 1-1zm-11 9l0 5 12 0 0 1 2 0 0-6-2 0 0 3-4 0 0-4-2 0 0 4-4 0 0-3zm6 -13l0 2-7 0 0 4 1 0 0-3 14 0 0 3 1 0 0-4-7 0-1-2zm20 13l3 3 1-1-3-3zm4 -13l0 2-4 0 0 2 4 0 0 2-5 0 0 2 7 0 0 2-7 0 0 1 7 0 0 6-3 0 1 2 2-1 2-1 0-6 2 0 0-1-2 0 0-2 2 0 0-2-5 0 0-2 4 0 0-2-4 0 0-2zm-11 2l-1 7 1 0 1-3 1 0 0 5-3 1 0 1 3-1 0 7 2 0 0-7 2-1 0-1-2 0 0-4 2 0 0-2-2 0 0-4-2 0 0 4-1 0 0-2z"/>
<path transform="scale(0.25)" fill="#777" d="M1637 1595l0 3-2 0 0-3zm1 0l2 0 0 3-2 0zm-3 -1l1-2 3 0-1 2zm1 -5l-3 7 1 0 0 7-1 4 1 1 1-5 2 0 0 4 1 0 0-4 2 0 0 3-1 0 0 1 1 0 1-1 0-12-2 0 1-3-3 0 0-2zm1 10l0 2-2 0 0-2zm1 0l2 0 0 2-2 0zm7 -10l0 4-3 0 0 8 3 0 0 4-3 0 0 2 8-1 0 2 1-1-2-5-1 0 1 2-2 1 0-4 3 0 0-8-3 0 0-4zm-2 5l3 0 0 5-3 0zm4 0l2 0 0 5-2 0zm18 -4l3 3 1-1-2-3zm-10 6l5-1-3 6-4 4 1 1 6-6 3 4-6 2 1 2 6-3 6 3 1-2-6-2 4-6-8-1 1-2 9 0 0-1-9 0 1-5-2 0-1 5-3 0 1-4-2 0-2 4zm9 7l-3-4 6 0zm12 -12l3 0 0 3-3 0zm8 0l4 0 0 3-4 0zm0 5l3 2-6 0 1-2-1-1 0-5-6 0 0 6 6 0-2 2-6 0 0 1 5 0-5 3 0 1 2 0 0 5 6-1 0-6-4 0 3-2 4 0 3 2-4 0 0 7 7-1 0-4 1-1-5-3 5 0 0-1-4 0 1-1-3-1zm-1 -6l0 6 7 0 0-6zm-7 16l0-3 3 0 0 3zm8 0l0-3 4 0 0 3z"/>
<path transform="scale(0.25)" fill="#777" d="M1519 1640l0 8 1 0 0-8zm2 0l0 9-2 0 0 2 3-1 0-10zm-16 3l3-1 0 3-3 1 0 1 3-1 0 5 2 0 0-5 1 0 0-2-1 1 0-3 1 0 0-1-1 0 0-3-2 0 0 3-1 0 1-5 3 0 0-1-3 0 1-2-2-1 0 3-2 0 0 1 2 0-2 5zm12 -11l-6 6 1 1 2-1 0 1 7 0 0-1 2 0 0-1-4-2zm-3 5l3-2 4 2zm2 4l0 2-2 0 0-2zm-4 -1l0 11 2 0 0-4 2 0 0 2-1 0 0 2 2-1 1-10zm2 4l2 0 0 1-2 0zm16 -10l3 3-1 4-4 6-3 2 1 2 3-2 2-3 3-7 4 7 5 5 0-2-4-4-4-8-4-4zm15 12l0 1 5-1 0-1zm18 -12l-10 0 0 16 10 0 0-1-8 0 0-14 8 0zm-17 2l-1 7 6 0-1 6-3 0 0 2 3 0 1-2 1-3 0-4-1 0 0-9-6 0 0 2 5 0-1 7-2 0 0-6zm15 0l-2 4-3-3-1 0 3 5-3 5 1 1 3-5 3 4 1-1-3-4 2-6zm5 -2l0 1 8 0 0-1zm11 -1l0 4-3 0 0 1 3 0-1 7-3 5 1 1 3-6 1-7 3 0 0 8-1 3-3 0 0 1 4 0 1-1 1-12-5 0 1-4zm-11 15l7-1 0 1 1-1-2-5-1 0 1 3-5 1 2-6 5 0 0-1-9 0 0 1 3 0-3 7zm22 -13l3 0 0 2-3 0zm8 0l4 0 0 2-4 0zm0 5l3 1-6 0 1-2-1 0 0-6-6 0 0 6 6 0-2 2-6 0 0 1 5 0-5 3 0 1 2 0 0 5 6 0 0-6-4 0 3-3 4 0 3 3-4 0 0 6 7 0 0-5 1-1-5-3 5 0 0-1-4 0 1-1-3-1zm-1 -7l0 6 7 0 0-6zm-7 16l0-3 3 0 0 3zm8 0l0-3 4 0 0 3z"/>
<path transform="scale(0.25)" fill="#777" d="M1519 1711l0 7 1 0 0-7zm2 -1l0 10-2 0 0 1 3-1 0-10zm-16 3l3 0 0 3-3 1 0 1 3-1 0 5 2 0 0-5 1-1 0-1-1 1 0-3 1 0 0-1-1 0 0-3-2 0 0 3-1 0 1-5 3 0 0-1-3 0 1-3-2 0 0 3-2 0 0 1 2 0-2 5zm12 -10l-6 5 1 1 2 0 7 0 0-1 2 1 0-1-4-2zm-3 5l3-3 4 3zm2 4l0 1-2 0 0-1zm-4 -1l0 11 2 0 0-5 2 0 0 3-1 0 0 1 2 0 1-10zm2 4l2 0 0 1-2 0zm12 -2l0 7 14 0 0 2 2 0 0-9-2 0 0 6-5 0 0-7 6 0 0-7-2 0 0 5-4 0 0-7-2 0 0 7-4 0 0-5-2 0 0 7 6 0 0 7-5 0 0-6zm19 4l0 1 5-1 0-1zm18 -13l-10 0 0 17 10 0 0-2-8 0 0-13 8 0zm-17 3l-1 7 6 0-1 6-3 0 0 1 3 0 1-1 1-4 0-3-1 0 0-9-6 0 0 1 5 0-1 8-2 0 0-6zm15 0l-2 4-3-4-1 1 3 4-3 5 1 1 3-4 3 4 1-1-3-5 2-5zm5 -2l0 1 8 0 0-1zm11 -1l0 4-3 0 0 1 3 0-1 7-3 4 1 2 3-6 1-7 3 0 0 8-1 3-3 0 0 1 4 0 1-2 1-11-5 0 1-4zm-11 15l7-2 0 2 1-1-2-5-1 0 1 3-5 1 2-6 5 0 0-1-9 0 0 1 3 0-3 7zm22 -14l3 0 0 3-3 0zm8 0l4 0 0 3-4 0zm0 5l3 2-6 0 1-2-1-1 0-5-6 0 0 6 6 0-2 2-6 0 0 1 5 0-5 3 0 1 2 0 0 5 6-1 0-6-4 0 3-2 4 0 3 2-4 0 0 7 7-1 0-4 1-1-5-3 5 0 0-1-4 0 1-1-3-1zm-1 -6l0 6 7 0 0-6zm-7 16l0-3 3 0 0 3zm8 0l0-3 4 0 0 3z"/>
<path transform="scale(0.25)" fill="#777" d="M1700 1788l0 8 1 0 0-8zm3 -1l0 11-3 0 1 2 3-1 0-1 0-11zm-17 4l3-1 0 3-4 1 0 2 4-1 0 5 1 0 0-5 2-1 0-1-2 0 0-3 2 0 0-1-2 0 0-3-1 0 0 3-2 0 1-5 4 0 0-2-3 0 0-2-1 0-1 2-2 0 0 2 2 0-2 5zm12 -12l-2 4-4 2 1 1 1-1 0 1 9 0 0-1 1 1 1-1-4-3-2-1 1-1zm-3 6l3-3 4 3zm3 4l0 2-4 0 0-2zm-5 -1l0 12 1 0 0-5 4 0-1 3-1 0 0 2 2-1 1-11zm1 4l4 0 0 2-4 0zm14 -2l0 8 16 0 0 2 2 0 0-10-2 0 0 7-6 0 0-8 7 0 0-7-2 0 0 6-5 0 0-8-2 0 0 8-5 0 0-6-2 0 0 7 7 0 0 8-6 0 0-7zm35 -4l4 4 2-1-5-4zm-3 -1l-4 4 1 1 5-5zm-8 -6l0 5-3 0 0 1 3 0 0 6-3 1 0 1 3-1 0 6-3 0 1 2 3-1 0-7 3-1-1-2-2 1 0-5 2 0 0-1-2 0 0-5zm3 19l0 1 14 0 0-1-6 0 0-6 5 0 0-1-11 0 0 1 4 0 0 6zm6 -18l1 2-6 0 0 4 2 0 0-2 9 0 0 2 2 0 0-4-5 0-2-3zm24 2l0 12 1 0 0-12zm4 -2l0 18-4 0 1 2 3-1 1-1 0-18zm-16 0l-2 6 1 0 1-2 3 0 0 3-5 0 0 1 5 0 0 2-4 0 0 8 1 0 0-6 3 0 0 8 2 0 0-8 3 0 0 4-2 1 0 1 3 0 1-2 0-6-5 0 0-2 5 0 0-1-5 0 0-3 4 0 0-1-4 0 0-3-2 0 0 3-2 0 1-3z"/>
<path transform="scale(0.25)" fill="#777" d="M1949 1860l1 3-4 0 1-3-1-1-4 8 1 1-2 1 0-4 2 0 0-2-2 0 0-4-2 0 0 4-2 0 0 2 2 0 0 4-2 1 0 1 2 0 0 5-2 0 1 2 3-1 0-7 2-1 0-1 2-2 0 12 1 0 0-2 9 0 0-1-4 0 0-3 3 0 0-1-3 0 0-3 3 0 0-1-3 0 0-3 4 0 0-1-5 0 2-1-1-2-1-1zm-3 8l3 0 0 3-3 0zm0 -1l0-3 3 0 0 3zm0 5l3 0 0 3-3 0zm19 -6l3 0 0 3-3 0zm5 0l3 0 0 3-4 0zm-3 -7l-5 6 2 1 0 5 4 0-2 3-4 2 1 2 2-1 4-6 0 6 5 0 1-3-1 0 0 2-4-1 0-4 4 0 0-7-4 0 2-2-5-1 1-2zm-2 5l2-2 3 0-1 2zm-6 -5l0 4-2 0 0 2 2 0 0 4-2 1 0 1 2 0 0 5-2 0 1 1 3 0 0-7 2-1 0-1-2 1 0-4 2 0 0-2-2 0 0-4z"/>
<path transform="scale(0.25)" fill="#777" d="M1949 1886l0 6-6 0 0-6zm-12 6l0 1 5 0-1 4-4 4 1 1 4-4 1-5 6 0 0 9 2 0 0-9 4 0 0-1-4 0 0-6 3 0 0-2-16 0 0 2 4 0 0 6zm21 -8l3 3 1-2-4-2zm-1 6l3 2 1-1-3-2zm9 5l2 2 0-1-2-1zm0 3l2 2 0-1-2-2zm4 -3l2 2 1-1-2-2zm0 3l2 2 1-1-2-2zm-13 3l1 0 1-1 2-5-1-1zm5 -17l0 11-2 6 1 1 2-3 1-8 5 0 0 2-5 0 0 9 1 0 0-8 4 0 0 7 1 0 0-7 3 0 0 6-2 1 1 1 2-1 1-8-5 0 0-2 5 0 0-1-11 0 0-2 10 0 0-4zm2 1l9 0 0 2-9 0zm26 -1l3 2 1-1-3-2zm-13 15l1 1 8-2 0-1zm3 -8l4 0 0 3-4 0zm-2 -1l0 6 7 0 0-6zm-1 -4l0 2 10 0 2 8-5 4 1 2 4-4 3 3 3 0 0-4-1-1-1 4-3-3 4-7-2-1-2 6-1-7 6 0 0-2-6 0 0-3-2 0 0 3z"/>
<path transform="scale(0.25)" fill="#777" d="M1949 1922l4 3 2-1-5-3zm-9 -6l0 2 13 0 0-2zm1 5l-4 3 1 1 2-1 2-2zm0 -14l0 2-4 0 0 1 3 0-3 4 1 1 3-3 0 4 1 0 0-4 3 2 0-1-3-2 3-1 0-1-3 0 0-2zm-4 12l0 1 8 0 0 4-3 0 1 2 4-1 0-5 8 0 0-1zm13 -12l0 2-4 0 0 1 3 0-4 4 1 1 4-3 0 4 1 0 0-4 3 3 1-1-4-4 3 0 0-1-3 0 0-2zm10 5l0 11-3 0 0 2 18 0 0-2-7 0 0-8 6 0 0-1-6 0 0-7-2 0 0 16-5 0 0-11z"/>
<path transform="scale(0.25)" fill="#777" d="M2089 1706l0 6-6 0 0-6zm-12 6l0 1 5 0-1 4-4 4 1 1 4-4 1-5 6 0 0 9 2 0 0-9 4 0 0-1-4 0 0-6 3 0 0-2-16 0 0 2 4 0 0 6zm19 12l2 0 6-20-2 0zm12 -20l2 3-4 0 0 2 7 0 0 4-8 0 0 1 8 0-2 3-6 3 1 2 3-2 5-5 3 4 5 2 1-1-5-2-3-4 8 0 0-1-8 0 0-4 6 0 0-2-3 0 2-3-2-1-2 4-6 0 2 0-1-2-1-2z"/>
<path transform="scale(0.25)" fill="#777" d="M2093 1592l0 6-6 0 0-6zm-12 6l0 1 5 0-1 4-4 4 1 1 4-4 1-5 6 0 0 9 2 0 0-9 4 0 0-1-4 0 0-6 3 0 0-2-16 0 0 2 4 0 0 6zm19 12l2 0 6-20-2 0zm12 -20l2 3-4 0 0 2 7 0 0 4-8 0 0 1 8 0-2 3-6 3 1 2 3-2 5-5 3 4 5 2 1-1-5-2-3-4 8 0 0-1-8 0 0-4 6 0 0-2-3 0 2-3-2-1-2 4-6 0 2 0-1-2-1-2z"/>
<path transform="scale(0.25)" fill="#777" d="M2161 1936l7 0 0 1-7 0zm0 -3l7 0 0 2-7 0zm6 -6l0 2-3 0 0-2-2 0 0 2-3 0 0 1 3 0 0 2 2 0 0-2 3 0 0 2 1 0 0-2 3 0 0-1-3 0 0-2zm-7 5l0 6 4 0 0 2-5 0 0 1 4 0-1 2-4 1 1 2 4-2 2-3 2 3 3 2 1-2-3-1-2-2 5 0 0-1-6 0 1-2 4 0 0-6zm-4 -5l0 4-3 0 0 1 3 0-3 8 0 2 3-5 0 9 1 0 0-11 1 3 1-1-2-5 2 0 0-1-2 0 0-4zm26 3l3 6 1-1-3-6zm-7 -3l0 4-2 0 0 2 2 0 0 4-2 1 0 1 2 0 0 5-2 0 1 2 3-1 0-7 2-1 0-1-2 1 0-4 2 0 0-2-2 0 0-4zm13 1l-1 10-2 4-2 2 1 2 4-6 2 5 1-1-2-7 1-9zm-8 16l5-5 0-1-3 3 0-13-2 0 0 13-1 2z"/>
<path transform="scale(0.25)" fill="#4a4a4a" d="M1915 1752l-1 3-2 2-8 1 0 6-2 0 0-17 9 1 3 2zm-3 0l0-1-2-2-6 0 0 7 6 0 2-1zm5 7l0-2 6 0 0 2zm23 5l0-15-5 15-2 0-5-15 0 15-2 0 0-17 3 0 5 15 5-15 3 0 0 17zm22 -8l-1 3-2 3-2 2-4 0-3 0-3-2-1-3-1-3 1-4 1-3 3-1 3-1 4 1 2 1 2 3zm-3 0l-1-5-5-2-4 2-2 5 2 5 4 1 5-1zm19 3l-1 3-3 2-8-1-2-3 2 0 2 2 3 0 3 0 1-2-1-3-9-3 0-2 0-3 6-2 5 2 1 2-2 0-1-1-4-1-3 1 0 2 1 2 8 2z"/>
<path transform="scale(0.25)" fill="#444" d="M1913 1836l-9-14 0 14-2 0 0-17 3 0 9 15-1-15 2 0 0 17zm5 -5l0-2 6 0 0 2zm23 5l0-15-5 15-1 0-6-15 0 15-2 0 0-17 3 0 5 15 5-15 3 0 0 17zm22 -8l-1 3-1 3-3 2-3 0-4 0-2-2-2-3-1-3 1-4 2-3 2-1 4-1 3 1 3 1 1 3zm-2 0l-2-5-4-2-5 2-1 5 1 5 5 1 4-1zm18 3l-1 3-3 2-8-1-2-3 2 0 2 2 3 0 3 0 2-2-2-3-8-3-1-2 1-3 5-2 5 2 2 2-3 0-1-1-4-1-2 1-1 2 2 2 7 2z"/>
<path transform="scale(0.25)" fill="#4a4a4a" d="M1874 1718l-3 0-7-18 3 0 6 16 6-16 2 0z"/>
<path transform="scale(0.25)" fill="#444" d="M1891 1716l-1 3-2 2-7 1 0-11 7 1 2 2zm-2 0l-1-3-5-1 0 9 4-1zm13 0l0 3-2 2-7 1 0-11 7 1 2 2zm-1 0l-2-3-5-1 0 9 5-1z"/>
<path transform="scale(0.25)" fill="#4a4a4a" d="M1874 1880l-3 0-7-18 3 0 6 16 6-16 2 0z"/>
<path transform="scale(0.25)" fill="#444" d="M1890 1881l-1 2-2 1-5-1-1-2 1 0 1 2 2 0 3-1 0-1 0-1-6-2-1-2 1-2 3-1 4 1 1 1-2 1-1-2-2 0-2 1 0 1 1 1 5 2zm11 0l-1 2-2 1-5-1-2-2 2 0 1 2 2 0 2-1 1-1-1-1-5-2-1-2 1-2 3-1 3 1 1 1-1 1-1-2-3 0-1 1-1 1 1 1 5 2z"/>
<path transform="scale(0.25)" fill="#4a4a4a" d="M2210 1546l-3 0-7-18 3 0 6 16 6-16 2 0z"/>
<path transform="scale(0.25)" fill="#444" d="M2227 1544l-1 3-2 2-7 1 0-11 7 1 2 2zm-2 0l-1-3-5-1 0 9 4-1zm13 0l0 3-2 2-7 1 0-11 7 1 2 2zm-1 0l-2-3-5-1 0 9 5-1z"/>
<path transform="scale(0.25)" fill="#4a4a4a" d="M2282 1546l-3 0-7-18 3 0 6 16 6-16 2 0z"/>
<path transform="scale(0.25)" fill="#444" d="M2299 1544l-1 3-2 2-7 1 0-11 7 1 2 2zm-2 0l-1-3-5-1 0 9 4-1zm13 0l0 3-2 2-7 1 0-11 7 1 2 2zm-1 0l-2-3-5-1 0 9 5-1zm2 9l0-1 9 0 0 1zm12 -13l0 4 6 0 0 2-6 0 0 4-2 0 0-11 8 0 0 1zm12 0l0 10-1 0 0-10-4 0 0-1 9 0 0 1z"/>
<path transform="scale(0.25)" fill="#444" d="M2349 1529l1-4 1-2 1 0-2 6 2 5-1 0-1-1zm4 3l0-1 2 0 0-6-2 1 0-1 3-1 0 7 2 0 0 1zm9 -3l-1 4-1 1-1 0 2-5-2-6 1 0 1 2z"/>
<path transform="scale(0.25)" fill="#4a4a4a" d="M2206 1780l-3 0-7-18 3 0 6 16 6-16 2 0z"/>
<path transform="scale(0.25)" fill="#444" d="M2222 1781l-1 2-2 1-5-1-1-2 1 0 1 2 2 0 3-1 0-1 0-1-6-2-1-2 1-2 3-1 4 1 1 1-2 1-1-2-2 0-2 1 0 1 1 1 5 2zm11 0l-1 2-2 1-5-1-2-2 2 0 1 2 2 0 2-1 1-1-1-1-5-2-1-2 1-2 3-1 3 1 1 1-1 1-1-2-3 0-1 1-1 1 1 1 5 2z"/>
<path transform="scale(0.25)" fill="#4a4a4a" d="M2298 1786l-3 0-7-18 3 0 6 16 6-16 2 0z"/>
<path transform="scale(0.25)" fill="#444" d="M2314 1787l-1 2-2 1-5-1-1-2 1 0 1 2 2 0 3-1 0-1 0-1-6-2-1-2 1-2 3-1 4 1 1 1-2 1-1-2-2 0-2 1 0 1 1 1 5 2zm11 0l-1 2-2 1-5-1-2-2 2 0 1 2 2 0 2-1 1-1-1-1-5-2-1-2 1-2 3-1 3 1 1 1-1 1-1-2-3 0-1 1-1 1 1 1 5 2z"/>
<path transform="scale(0.25)" fill="#777" d="M2337 1585l7 0 0 4-7 0zm-1 -1l0 7 4 0 0 2-6 0 0 1 5 0-5 6 1 1 5-6 0 7 1 0 0-7 6 6 1-1-6-6 5 0 0-1-6 0 0-2 5 0 0-7zm-2 -1l-6 8 1 2 2-3 0 12 2 0 0-14 2-4zm18 0l0 4-3 0 0 2 3 0 0 4-3 1 0 1 3 0 0 5-3 0 1 2 3-1 0-7 3-1-1-1-2 1 0-4 3 0 0-2-3 0 0-4zm8 1l2 3-5 0 0 9-3 5 2 1 2-4 0-5 7 0 0 2 1 0 0-8-4 0 1-1-1-1-1-2zm5 8l-7 0 0-4 7 0z"/>
<path transform="scale(0.25)" fill="#777" d="M2339 1612l0 2 14 0 0-2zm-2 12l0 2 18 0 0-2zm23 -15l0 4-3 0 0 1 3 0-3 8 0 2 3-6 0 10 1 0 0-11 2 3 1-1-3-5 3 0 0-1-3 0 0-4zm4 1l0 2 2 0 0 5-2 7-2 3 1 1 1-2 3-7 2 5-3 2 1 2 3-3 4 3 1-2-4-2 4-8-4 0 2-6zm3 2l4 0-2 5 4 0-3 6-3-7zm13 5l0 11 2 0 0-1 11 1 0-5-11 0 0-2 10 0 0-4zm11 9l-9 0 0-2 9 0zm-6 -12l0 1-7 0 0 3 1 0 0-2 14 0 0 2 1 0 0-3-7 0-1-2zm-3 4l8 0 0 2-8 0zm-3 -9l-2 5 1 0 2-2 1 0 1 2 2 0-1-2 3 0 0-1-6 0 1-2zm9 0l-2 4 1 1 1-2 2 0 1 2 1 0-1-2 4 0 0-1-6 0 0-2z"/>
<path transform="scale(0.25)" fill="#777" d="M2337 1701l7 0 0 4-7 0zm-1 -1l0 7 4 0 0 2-6 0 0 1 5 0-5 6 1 1 5-6 0 7 1 0 0-7 6 6 1-1-6-6 5 0 0-1-6 0 0-2 5 0 0-7zm-2 -1l-6 8 1 2 2-3 0 12 2 0 0-14 2-4zm18 0l0 4-3 0 0 2 3 0 0 4-3 1 0 1 3 0 0 5-3 0 1 2 3-1 0-7 3-1-1-1-2 1 0-4 3 0 0-2-3 0 0-4zm8 1l2 3-5 0 0 9-3 5 2 1 2-4 0-5 7 0 0 2 1 0 0-8-4 0 1-1-1-1-1-2zm5 8l-7 0 0-4 7 0z"/>
<path transform="scale(0.25)" fill="#777" d="M2339 1728l0 2 14 0 0-2zm-2 12l0 2 18 0 0-2zm23 -15l0 4-3 0 0 1 3 0-3 8 0 2 3-6 0 10 1 0 0-11 2 3 1-1-3-5 3 0 0-1-3 0 0-4zm4 1l0 2 2 0 0 5-2 7-2 3 1 1 1-2 3-7 2 5-3 2 1 2 3-3 4 3 1-2-4-2 4-8-4 0 2-6zm3 2l4 0-2 5 4 0-3 6-3-7zm13 5l0 11 2 0 0-1 11 1 0-5-11 0 0-2 10 0 0-4zm11 9l-9 0 0-2 9 0zm-6 -12l0 1-7 0 0 3 1 0 0-2 14 0 0 2 1 0 0-3-7 0-1-2zm-3 4l8 0 0 2-8 0zm-3 -9l-2 5 1 0 2-2 1 0 1 2 2 0-1-2 3 0 0-1-6 0 1-2zm9 0l-2 4 1 1 1-2 2 0 1 2 1 0-1-2 4 0 0-1-6 0 0-2z"/>
<path transform="scale(0.25)" fill="#4a4a4a" d="M2380 1648l0-15 2 0 0 15zm4 0l5-16 1 0-4 16zm22 -8l-2 6-2 2-3 0-3 0-3-2-2-6 2-5 3-2 3 0 3 0 2 2zm-2 0l-1-4-4-2-4 2-2 4 2 5 4 2 4-2z"/>
<path transform="scale(0.25)" fill="#777" d="M2396 1659l0 19 1 0 0-19zm-13 6l-1 6 7 0-1 5-4 0 1 1 4 0 1-2 1-6-7 0 0-3 7 0 0-6-9 0 0 1 7 0 0 4zm19 -5l0 12-1 5 1 1 1-7 2 0 0 5-2 0 1 1 2 0 0-1 0-16zm1 1l2 0 0 4-2 0zm0 5l2 0 0 3-2 0zm11 -6l0 18 1 0 0-16 2 0 0 11-1 0 0 1 2 0 1-14zm-6 15l4-1 0 2 1-1-1-5-1 0 1 3-3 1 1-6 3 0 0-1-2 0 0-3 2 0 0-1-2 0 0-4-1 0 0 4-3 0 0 1 3 0 0 3-3 0 0 1 2 0-2 6z"/>
<path transform="scale(0.25)" fill="#666" d="M2331 1976l-2-1 0-3 2-1 3 0 0-2-2-1-1 2-2 0 1-2 4 0 1 1 1 5 1 2-2 0-1-2zm1 -1l2-1 0-2-4 1 0 1zm6 -9l0-2 1 0 0 2zm0 10l0-8 1 0 0 8zm4 0l0-1 2 0 0-9-2 2 0-1 4-2 0 10 3 0 0 1zm16 -4l-1 3-2 1-2 0-2-1-1-1 1-1 1 2 2 0 2-1 0-2-1-2-5 1 1-6 6 0 0 1-5 0 0 4 3-1 2 1zm8 -2l0 4-2 2-3 0-1-1-1-1 2 0 1 1 2 0 1-3 0-1-1 1-2 0-2-1-1-3 2-3 2 0 2 1zm-1 -1l-2-3-2 1 0 3 1 1 2 0zm10 4l0 2-2 1-3 0-2-1 0-2 1 0 1 2 2 0 1-1 1-1-1-2-3 0 0-1 3-1 0-2-2-1-2 2-1 0 1-2 3-1 3 1 0 3-2 1 2 1zm9 -3l0 4-2 2-3 0-2-1 0-1 1 0 2 1 1 0 2-3 0-1-2 1-2 0-2-1 0-3 1-3 2 0 3 1zm-1 -1l-2-3-3 1 0 3 2 1 2 0zm10 3l-2 4-2 0-2-1 0 1-1 0 0-12 1 0 0 5 2-1 2 0 2 1zm-1 0l-1-3-3 0-1 2 1 3 3 1z"/>
<g transform="rotate(-90 342.6 392)"><path transform="scale(0.25)" fill="#777" d="M1315 1567l0 7 1 0 0-7zm3 -1l0 10-3 0 1 1 3-1 0-10zm-16 3l3 0 0 2-4 1 1 2 3-1 0 4 1 0 0-4 2-1 0-1-2 0 0-2 2 0 0-2-2 0 0-3-1 0 0 3-2 0 1-4 4 0 0-2-3 0 0-2-1 0-1 2-2 0 0 2 2 0-2 5zm12 -10l-7 5 1 1 2-1 0 1 7 0 0-1 2 1 1-1-4-3zm-3 5l3-3 3 3zm2 3l0 2-3 0 0-2zm-4 -1l0 11 1 0 0-4 3 0 0 3-2 0 1 1 1 0 1-11zm1 4l3 0 0 2-3 0zm16 -10l4 4-2 4-4 6-3 2 2 1 2-2 3-3 3-6 3 6 5 5 1-2-4-3-5-9-4-4zm23 -1l-1 3 1 0 2-2zm-7 1l1 2 2 0-2-3zm7 10l-2 3-3-1 1-2zm-6 3l3 1-5 2 1 1 5-2 2 1 1-1-2-1 2-5-4 0 0-1-1 0 0 1-3 0 0 1 2 0zm3 -14l0 4-5 0 0 1 4 0-4 3 1 1 4-3 0 3 1 0 0-3 3 2 0-1-3-2 4 0 0-1-4 0 0-4zm7 0l-3 9 1 1 2-3 1 6-5 4 1 1 5-4 4 4 1-1-4-4 2-8 1 0 0-1-5 0 0-4zm4 5l-2 6-2-6zm13 7l0 6 1 0 0-1 7 0 0 1 1 0 0-6-4 0 0-3 5 0 0-1-5 0 0-2 4 0 0-5-11 0 0 11-2 5 1 1 1-2 2-7 4 0 0 3zm0 -10l7 0 0 3-7 0zm0 4l4 0 0 2-4 0zm1 10l0-3 7 0 0 3zm-7 -16l0 4-3 0 0 1 3 0 0 5-3 0 0 2 3-1 0 5-2 1 0 1 3-1 0-6 2-1 0-1-2 0 0-4 2 0 0-1-2 0 0-4zm25 0l1 1-8 0 0 4 1 0 0-2 14 0 0 2 2 0 0-4-8 0 0-1zm-7 9l0 1 13 0 0 7-3 0 0 1 4 0 0-8 3 0 0-1-3 0 1-1-6-2 6 0 0-2-6 0 0-1-1 0 0 1-6 0 0 2 5 0-2 1-4 1 1 1zm8 -2l6 2-11 0zm-5 6l6 0 0 2-6 0zm-1 -1l0 5 1 0 0-1 7 0 0-4zm29 -2l0 1-6 0 0 2 6 0 0 4-4 0 1 1 4-1 0-4 6 0 0-2-6 0 0-1 4-3-1-1-8 0 0 1 7 0zm-5 -10l-1 2-5 0 0 2 5 0-6 7 1 1 2-2 0 8 2 0 0-10 2-4 11 0 0-2-10 0 1-2zm16 2l4 0 0 3-4 0zm9 0l3 0 0 3-3 0zm0 5l2 1-6 0 2-2-2 0 0-5-6 0 0 5 6 0-1 2-7 0 0 2 5 0-5 3 1 1 1-1 0 5 6 0 0-6-4 0 3-2 4 0 3 2-3 0 0 6 6 0 0-5 1 1 1-2-6-2 5 0 0-2-3 0-3-2zm-2 -6l0 5 7 0 0-5zm-7 15l0-3 4 0 0 3zm9 0l0-3 3 0 0 3z"/></g>
<g transform="rotate(-90 295 418.3)"><path transform="scale(0.25)" fill="#777" d="M1119 1666l3 0 0 2-3 0zm-5 0l4 0 0 2-4 0zm-4 0l3 0 0 2-3 0zm0 6l0 9-3 0 0 1 18 0 0-1-3 0 0-9-6 0 0-1 9 0 0-1-9 0 1-1 7 0 0-4-16 0 0 4 7 0 0 1-8 0 0 1 8 0 0 1zm1 9l0-2 10 0 0 2zm0 -6l10 0 0 1-10 0zm0 -1l0-1 10 0 0 1zm0 3l10 0 0 2-10 0zm22 -9l0 1 11 0 0-1zm2 3l1 8 2 0-1-2-1-7zm2 -7l1 3 2 0-1-3zm-4 16l0 2 12 0 0-2-4 0 2-10-1 0-2 10zm-1 -16l-5 8 1 2 2-3 0 11 1 0 0-13 2-5zm14 20l2 0 6-19-2 0zm14 -12l9 0 0 1-9 0zm0 -2l9 0 0 1-9 0zm-2 -1l0 5 2 0-4 4 1 1 2-2 3 3-7 1 0 1 9-2 8 2 1-1-7-1 3-3 1-1-1 0-8 0 1-2 9 0 0-5zm1 -5l-4 5 1 1 3-3 13 0 0-1-12 0 1-2zm9 13l-4 2-4-2zm13 -9l0 1 11 0 0-1zm2 3l1 8 1 0 0-2-1-7zm2 -7l1 3 2 0-1-3zm-5 16l0 2 13 0 0-2-4 0 2-10-2 0-2 10zm0 -16l-5 8 1 2 2-3 0 11 1 0 0-13 2-5zm23 0l0 2-8 0 0 3 2 0 0-2 14 0 0 2 1 0 0-3-7 0-1-2zm-8 9l0 2 13 0 0 6-3 0 1 1 4 0 0-7 3 0 0-2-3 0 0-1-6-2 6 0 0-1-5 0 0-2-2 0 0 2-5 0 0 1 5 0-2 1-4 1 0 1zm8 -2l6 2-11 0zm-4 6l5 0 0 2-5 0zm-2 -1l0 5 2 0 0-1 7 0 0-4zm29 -2l0 1-5 0 0 2 5 0 0 4-3 0 0 1 5 0 0-5 5 0 0-2-5 0 0-1 4-3-1-1-9 0 0 2 7 0zm-4 -10l-1 3-6 0 0 1 5 0-5 7 0 1 3-2 0 8 1 0 0-9 3-5 11 0 0-1-11 0 1-3zm16 2l3 0 0 3-3 0zm8 0l4 0 0 3-4 0zm0 5l3 1-6 0 1-2-1 0 0-5-7 0 0 5 7 0-2 2-6 0 0 2 5 0-5 3 0 1 1 0 0 4 7 0 0-6-4 0 3-2 4 0 3 2-4 0 0 6 6 0 0-4 1 0 1-1-6-3 6 0 0-2-4 0 1 0-3-2zm-1 -6l0 5 6 0 0-5zm-7 15l0-2 3 0 0 2zm8 0l0-2 4 0 0 2z"/></g>
<g transform="rotate(-90 323 434.8)"><path transform="scale(0.25)" fill="#777" d="M1237 1738l0 7 1 0 0-7zm2 -1l0 10-2 0 0 1 3-1 0-10zm-16 3l3 0 0 3-3 0 0 2 3-1 0 4 2 0 0-4 1-1 0-1-1 0 0-2 1 0 0-1-1 0 0-3-2 0 0 3-1 0 1-5 3 0 0-2-3 0 1-2-2 0 0 2-2 0 0 2 2 0-2 5zm12 -10l-6 5 1 1 2-1 0 1 7 0 0-1 2 1 0-1-4-3zm-3 5l3-3 4 3zm2 4l0 1-2 0 0-1zm-4 -2l0 11 2 0 0-4 2 0 0 3-1 0 0 1 2 0 1-11zm2 4l2 0 0 2-2 0zm12 -1l0 7 14 0 0 1 2 0 0-8-2 0 0 6-5 0 0-7 6 0 0-7-2 0 0 5-4 0 0-7-2 0 0 7-4 0 0-5-2 0 0 7 6 0 0 7-5 0 0-6zm27 -10l-2 3 1 1 2-3zm-7 1l1 3 1-1-1-3zm6 11l-2 2-2-1 1-1zm-6 2l3 1-4 2 1 1 5-2 1 1 1-1-1-1 2-4-4-1 0-1-1 0-1 1-3 0 0 2 3 0zm3 -14l0 4-4 0 0 1 4 0-4 3 1 1 3-3 0 3 2 0 0-3 2 2 1-1-3-2 4 0 0-1-4 0 0-4zm8 0l-3 9 1 1 1-3 2 6-5 4 1 1 5-4 3 4 1-1-4-4 3-8 1 0 0-1-6 0 1-4zm3 5l-1 6-2-6zm14 7l0 6 1 0 6 0 2 0 0-6-4 0 0-2 4 0 0-2-4 0 0-2 3 0 0-5-10 0 0 11-2 6 1 0 1-2 1-6 4 0 0 2zm-1 -10l8 0 0 3-8 0zm0 4l4 0 0 2-4 0zm2 10l0-3 6 0 0 3zm-8 -16l0 4-2 0 0 1 2 0 0 5-2 1 0 1 2-1 0 6-2 0 1 1 3-1 0-6 2-1 0-1-2 0 0-4 2 0 0-1-2 0 0-4zm26 0l0 2-8 0 0 3 2 0 0-2 14 0 0 2 2 0 0-3-8 0-1-2zm-8 9l0 2 14 0 0 6-4 0 1 1 4 0 0-7 3 0 0-2-3 0 0-1-6-2 6 0 0-1-5 0 0-2-2 0 0 2-5 0 0 1 5 0-2 1-4 1 1 1zm8 -2l6 2-11 0zm-4 6l5 0 0 2-5 0zm-1 -1l0 5 1 0 0-1 7 0 0-4zm28 -2l0 1-5 0 0 2 5 0 0 4-3 0 0 1 5 0 0-5 5 0 0-2-5 0 0-1 4-3-1-1-9 0 0 2 7 0zm-4 -10l-1 3-6 0 0 1 5 0-5 7 0 1 3-2 0 8 1 0 0-9 3-5 11 0 0-1-11 0 1-3zm16 2l3 0 0 3-3 0zm8 0l4 0 0 3-4 0zm0 5l3 1-6 0 1-2-1 0 0-5-6 0 0 5 6 0-2 2-6 0 0 2 5 0-5 3 0 1 2 0 0 4 6 0 0-6-4 0 3-2 4 0 3 2-4 0 0 6 7 0 0-4 1-1-5-3 5 0 0-2-4 0 1 0-3-2zm-1 -6l0 5 7 0 0-5zm-7 15l0-2 3 0 0 2zm8 0l0-2 4 0 0 2z"/></g>
<g fill="none" stroke="#e2344c" stroke-width="1.2" stroke-linecap="round"><path d="M476.3 334.7 V293.5 M473.8 297 l2.5 -3.5 l2.5 3.5"/><path d="M443 321.9 Q480 321.5 518 321.9 M514 319.3 l4 2.6 l-4 2.2"/><path d="M449.4 317.2 H503.3 M482.2 303.4 H520.5 M482.2 303.4 V317.2 M502.5 303.4 V317.2"/><path d="M479.5 310 l2.7 -2.5 l2.5 2.5 M499.8 311.5 l2.7 2.5 l2.5 -2.5" stroke-width=".9"/></g>
<path transform="scale(0.2)" fill="#e2344c" stroke="#e2344c" stroke-width="3" d="M2412 1498l-3-4-1-8 3-27 2-1 1 1-2 28 0 5 12-23 6-9 3-2 1 3-12 19-7 16z"/>
<path transform="scale(0.2)" fill="#e2344c" stroke="#e2344c" stroke-width="2" d="M2430 1508l-1-1 1-6 6-16 1 2-1 2 5 0 1 1 0 2-3 4-6 2zm4 -12l5-2 1-2-1-1-4 1z"/>
<path transform="scale(0.2)" fill="#e2344c" stroke="#e2344c" stroke-width="3" d="M2627 1643l-3-4-1-8 3-27 2-1 1 1-2 28 0 5 12-23 6-9 3-2 1 3-12 19-7 16z"/>
<path transform="scale(0.2)" fill="#e2344c" stroke="#e2344c" stroke-width="2" d="M2655 1653l-1-1 4-14-7 4-1-1 10-7 1 2z"/>
<path transform="scale(0.2)" fill="#e2344c" stroke="#e2344c" stroke-width="3.6" stroke-linejoin="round" d="M1855 1736l25 0 27 2 2 1-2 1-11 1-9-3-6-1-18 2-8 0-2-3zm0 -20l2 0 1 8 7 8 0 2-7-1 2-2-4-7-2-5-3-2zm36 5l4 5 1 5-4 0-5-3 3-2 0-1-3-4-6-5 1-1 4 1zm-34 -22l4 2-2 1-1-1-2 3-3-5 2-1zm35 -4l3 2 0 2-6 5-3 5-7 3-3 9-3 7-2 2-2 0 6-26-4-2-1-1 1-1zm-3 2l-9 4-2 8 5-2 6-9zm57 13l3 1 2 4 7 0 3 2-3 13-1 2-4-4 3 1 0-1 2-11-3-1-4 1-2 33-2-2 1-15-1-15-8 3 3 6-1 1-3-2-3-7 1-1 10-3-1-4zm-31 -7l5 4 2 15 7-7-8 14-2 9-3-1-2-3 4-6-4-23zm9 -10l2 4-4 1-2-1-6 0 2-3 2-1zm24 -4l0 2 0 6 6-1 2-8 4 2 1 1-2 5 2 1-2 2-2 0-3 5 10 0 5 3 1 2-13 4 0-2 6-5-3 0-15 2-9 2-2 0-1 8-1 0-2-3 0-3 4-4 3-1-2-5-4 1-2-2 0-1 5-1-1-7 4 2 1 5 3-1 3-1-1-10 2 0zm2 10l-3 1 0 5 6-1-1-2 1-3zm-7 2l-4 1 1 5 4-2 0-4zm59 11l0 2-3 1-8 1-2-1 1-1 4-2 3-4zm7 -11l6 3 1 4 7-3 5 3 0 2-3 1-3-1-7 1-2 8 2 6 2 0 2-1 8 4 1 2-5 1-8-1-5-3-2-10zm-24 -3l4 3 2 4-2 5 0 13 1 7 7-2 6 1 2 2-4 2-13 2-5 3-3-3 0-4 4 1 1-2-1-21 0-8zm95 24l1 2-2 5 1 3 4 4 10 6 1 2-7 0-3-1-7-8-3 3-6 1-3 0 0-1 8-3 2-2-1-1-6-6 5 0 3 3 1-7zm-2 -7l-10 10-4-2 0-2 4-1 7-5zm5 -2l6 0 0 3-7 3 0-3zm4 -7l5 1 1 2-8 1-18 6-2 0-3-4 7 0zm-14 -8l2 0 4 3 2 2 0 2-4 2-1 0-2-4-4-5zm-20 -6l3 2 1 3 0 2-2 3 3 1 2 1-1 2-5 1-3 9 3-2-1-2 1-1 6 4-3 4 0 4 3 0-4 4-1 2 0 14-3-4 0-11-11 6-1-1-1-4 4 0 9-4 1-5-12 4-2-4 0-3 5 1 1 0 3-9-4 1-7-4 13-2 2-12zm70 17l-2 4 13-2 5 0 0 1-11 1 18 17 8 4 3 2-3 1-7-1-3-2-4-3-2 6-10 3-3-13 10-2-9-11-7 2-10 14 9-2 3 0 1 2-3 7-4 1-6 4-4-8-4 3-2-1 1-1 4-4-1-3 4 0 1-2 5-5 3-4-11 3-3-1-1-1 16-4 4-5zm9 20l-3 2 1 5 4-1 2-3-1-4zm-16 1l-7 3-1 2 1 2 8-3 0-3zm30 -25l2 1 0 1-1 3-3 0-1-4 1-1zm-31 -9l6 2-3 4-3 4-10 5-2-1-3-13 5 1zm-3 3l-6 1 0 7 7-4 2-4zm26 -4l5 1-2 2-3 9-2-2-5 2-3-1-1 2-2-1-1-2 0-9 5 0 6-1zm-6 2l-4 3 0 5 6-2 3 0 0-6-1 0zm35 37l-1 1-2 1-2 0-1-2 1-3 1-1 3 1z"/>
<path transform="scale(0.2)" fill="#e2344c" stroke="#e2344c" stroke-width="3.6" stroke-linejoin="round" d="M2269 1727l1 1-2 2-8 0 3-2zm16 -10l2 1-1 1-9 0-1 1-1 11 0 10-1 5-4-3-3-5 4 3 2 0-2-21-15 6-5 3-1-1-1-2 0-2 21-6 0-3 6 2 6-1zm-43 -20l3 3 1 4 0 30 1 11-2-1-2-5 0-1 1 1 0-1-1-11-10 12-1 0-1-6 3-2 1-3 0-4-3-12 0-2 2 0 5 3-2 16 6-5-2-21-1-6zm28 0l3 4 2 0 4 2-8 5-1 2-4 1-11 7 8-8-2-4 5 1 6-6-4 1-9 4-1 0 0-3 8-8 1 0zm54 25l1 4 0 5-1 0-2-3-1-6 1-1zm-6 -4l1 14 0 8-3-4 1 1 0-1 0-6-5 3-1 4-1-2 0-3 0-10 5-4zm-2 2l-4 2 0 4 5-2zm-2 7l-2 1 0 3 5-2 0-3zm15 -9l1 2 0 19-1-3-2-18 0-1zm-27 -17l2 1-3 6 7-1 0 2-8 3-3 9 2-1 1-2 2 2 3-1 7-12 5-5 2 2-2 4 6 2 9 4 5 1 0 1-6 1-6-4-13 4-1-1 12-5-8-2-8 11-3 1-1 2-1-1 0 3 4-1-4 4-1 11-3-4 0-5-11 7 0-3 12-7 0-3-8 3-2-3 4-2 3-8-6 2-4-2 10-4 3-9zm48 7l10 6 18 14 9 2 1 2-1 1-4 0-8-1-16-15-11 9-6 4-1-2 1-2 13-12-8-4-1-2zm86 22l3 2-2 4-2 5-9 2-3-2-2-5-1-4zm-12 8l1 2 6-2 2-5-9 3zm11 -14l-2 3-9 2-2 0-2-2 10-3zm2 -8l-1 2-13 4-2 0-3-2 15-4zm-25 -13l1 2-1 2-8 9 3 24-2 2-1-3-1-21-12 10-1 0 17-20 2-6zm13 -5l5 3 2 8 9-2 4 1-2 2-7-1-19 6-5 0-2-2 1-1 18-3-4-7zm66 14l1 1-16 1-2 1-1 1-1 5 7-2 4 4-4 19-9-4 8-1 1-11-1-4-1-1-15 6-1-4 3 0 4-3 2-4-17 4-4-1 1-1 28-6zm-8 -13l0 2-6 8-13 4-3-4-1-10 2 1 2 3 2 7 8-2 2-6-8 1-1 0-1-2 12-3zm32 17l-3 3-1 3-2 1-1 0-1-4 1-2 2 0zm23 -6l3 2-2 1-4-1-3-1 2-1zm-17 1l-1 10-1 1-2-3 0-5 1-5zm-1 -14l5 3 0 3-1 1 9-1 5-2 4 2-2 1-7 0-8 2 2 2 1 12 8-2-12 14 5 7 12 3-1 2-12-2-2-2-4-6-7 5-9 3 14-10-2-4-5 3-1-1-2-1 1-3 3 0 12-5-3-4 1-2-1-8-12 4-4-1-2-1 2-2 14-3-2-7zm0 30l-1 0 3 3 6-7zm57 -22l-7 7-1 1-3-1-3-4 6-1zm7 -8l4 1 2 3-8 18 12-2 3 3-8 21-3 3-5-9 6 3 2-7-7-1-1-2 9-1 1-3 0-5-11 3-6 15-3 4-1-1 6-16-6 2-7 1-3-1-4-2 21-4 6-16zm41 28l1 1-4 10 6 2 1 2-3 0-6-1-6 3 3-4-2-2 0-4-10 5-3-1 1-1 12-6 2-3 3 1 3-2zm-5 5l-2 2 0 4 1-1 2-3 0-2zm24 -11l-1 7 1 2 6 5 7 2 0 1-8 0-8-7-2 2-4 0 4-5-6-2 3-1 4 2 2-5zm7 -8l1 0 0 1-13 6-3 1-1-1 13-7zm-11 -11l3 1 0 6-3 6-2 2 1-14zm-20 0l2 3 0 4 4-4 2 1 1 2-5 5-2 0 0 1 3-1 2 2-5 3 0 2 8-1 4 1-13 2 0 6-2-3-1-4-7 6-3 1 1-2 8-7-9 4-2-2 12-5 0-3 0-3-6 4-2-2-1-2 2-1 1 0 6-1-1-6zm71 13l3 2-6 6 1 5 10-2 6 3-4 0-5-1-7 2 0 11-2 4-7-1-2-2 6 0 2-1 1-6-1-5-17 6-3 0-5-1 1-1 24-6-5-5 0-1 4 1 5-7-12 5-2 0-2-3 15-3zm-22 -4l1 1 0 2-2 5-2 2-2-4zm14 -10l2 2-1 5 13-1 5 2 3 4-13 2 1-2 4-3-2-2-16 5-4-1-2-2 8-1-3-10zm71 31l3 2-2 4-2 5-9 2-3-2-2-5-1-4zm-12 8l1 2 6-2 2-5-9 3zm11 -14l-2 3-9 2-2 0-2-2 10-3zm2 -8l-1 2-13 4-2 0-3-2 15-4zm-25 -13l1 2-1 2-8 9 3 24-2 2-1-3-1-21-12 10-1 0 17-20 2-6zm13 -5l5 3 2 8 9-2 4 1-2 2-7-1-19 6-5 0-2-2 1-1 18-3-4-7zm66 14l1 1-16 1-2 1-1 1-1 5 7-2 4 4-4 19-9-4 8-1 1-11-1-4-1-1-15 6-1-4 3 0 4-3 2-4-17 4-4-1 1-1 28-6zm-8 -13l0 2-6 8-13 4-3-4-1-10 2 1 2 3 2 7 8-2 2-6-8 1-1 0-1-2 12-3z"/>
<path transform="scale(0.2)" fill="#e2344c" stroke="#e2344c" stroke-width="3.6" stroke-linejoin="round" d="M2240 1804l-2 6-5 7-3 1-4-3 0-2 4-1 10-10 1-1zm7 -3l2 0-2 12 1-1 4-1 9-3 5 0 1 2-1 10-10 3-5-4-2-3-2-3-1 5 0 4-3 2-6 0 6-6 2-13 2-4zm13 11l-5 3-1 2 1 2 5 0 4-2-1-6-1 0zm2 -13l3 0-1 3-11 5-2 0-1-1-1-1 9-5zm-27 -12l4 3-1 0-2 3-3 3-3-9zm45 -7l5 2-2 2-3-1-3-3 1 0zm-26 -6l7 0 1 1 3 5 1 8 10 1 0 2-1 0-8 0 0 3 7 15 2-6 0-3 2 0 2 1-1 5-3 7 7 12 6 5 0 2 0 1-3-1-4-4-8-11-4 3-2 0 3-5 1-3-10-20-8 3-8 2-6-2 0-1 3-1 5 0 13-4-6-13zm60 27l-2 4-6 7-2 0-1-4 2-4 3 1zm8 -16l5 2 1 2-2 7 0 12 11-13 3-5 5 4-8 8 11 2 2 1-1 3-3-1-11-4-26 26-15 10-3 1 6-6 17-13 8-9-2-2-6-4 9-1-1-14-3-6zm64 35l0 3-7 1 1-3 2-2 3-1zm18 -2l6 4-1 3-5-1-2-6 1-1zm-11 -13l4 3 10-3 5 2-1 2-10 0-4 1-1 18-4-2-3-3 4 1 0-12-13 3-3-1-3-2 18-3 1-1-2-3zm15 -13l1 1 2 5-5 3-1 2-3 1-3-1-2 1-2-1-2-7 5 0zm-7 5l-3 2 0 3 5-2 1-3zm-25 -5l1 2-4 3-2 3 0 2-9 3-1 2-2-1-3-8 0-5 1 0 2 2 11-4zm-8 3l-7 2 0 5 6-2 2-5zm32 -17l3 1 1 4-6 7-9 4 4 1-1 4-3 2 2 1 0 1-3 2-5 1-4 0-2-2-2-5 2-3 1 0 1 3 9-5-3-2 2-1-3-6 0-2zm-6 5l-5 1 2 6 5-2 1-5zm-8 15l-5 2 1 4 2-1zm75 2l1 2-8 9-14 4-1-1-2 8-3 5-2 3-6 3 8-14 3-13-1-2 12-4 6-1zm-9 2l-2 1-1 6 3-1 2-4 0-3zm-10 2l-2 2 0 6 5-2 1-6zm8 -28l1 2 0 5 10-1 4 0 1 1-1 2-8-1-6 2-1 7 9 0 1 1-21 5-4 0-3-2 0-1 13-3 0-5-12 1-3 0-2-3 16-2 0-10 2-1z"/>
<path d="M376 390 C376 377 414 366 440 366 C450 366 455.5 372 455.5 381 C455.5 395 431 413 409 413 C390 413 376 403 376 390 Z M390.5 405.5 H400" fill="none" stroke="#e3607a" stroke-width="1.1"/>
<circle cx="406.7" cy="383" r="1.8" fill="#e2344c"/>
<path transform="scale(0.2)" fill="#e2344c" stroke="#e2344c" stroke-width="3" d="M1972 1971l-3-4-1-8 3-28 2-1 1 2-2 27 0 6 12-24 6-9 3-2 1 3-12 20-7 16z"/>
<path d="M398.5 390 l4 1.5 l-3 1.5" fill="none" stroke="#e2344c" stroke-width="1"/>
<path transform="scale(0.2)" fill="#e2344c" stroke="#e2344c" stroke-width="3" d="M2367 1966l-3-4-1-8 3-28 2-1 1 2-2 27 0 6 12-24 6-9 3-2 1 3-12 20-7 16z"/>
<path transform="scale(0.2)" fill="#e2344c" stroke="#e2344c" stroke-width="2" d="M2395 1975l-1-1 4-14-7 5-1-2 10-6 1 1z"/>
<path transform="scale(0.2)" fill="#e2344c" stroke="#e2344c" stroke-width="3.5" d="M2887 1897l-5-2-1-2 7 0 4-1 3-2 2-3-3-3-8-2-1-2 12-8 3-3-6-1-8 3-1-3 5-2 9 0 3 2 1 4-11 7 7 6 0 5-4 4zm23 -3l-3 1-2-3 2-2 2-1 3 2-1 2zm18 3l-5-2-1-2 6 0 5-1 3-2 2-3-3-3-8-2-1-2 12-8 2-3-5-1-8 3-1-3 5-2 9 0 3 2 0 4-10 7 7 6 0 5-4 4zm29 4l-1-2-2-2-1-9 3-30 2-1 2 2-3 29 1 7 12-26 7-10 3-2 1 2 0 1-13 22-7 17z"/>
<path d="M593.5 381.5 L602 366.5" stroke="#e2344c" stroke-width="1.3" fill="none"/>
<path transform="scale(0.2)" fill="#e2344c" stroke="#e2344c" stroke-width="3.5" d="M3018 1896l-2-2 0-2 4 1 5-1 5-4 1-4 0-3-3-3-7 0-2-2 1-3 3-5 4-2 4-2 4 1 2 1-1 2-6 0-6 5 0 1 6 2 3 4 1 4-1 6-4 4-4 2-4 1zm34 5l-1-2-3-2-1-9 4-30 2-1 1 2-3 29 1 7 13-26 6-10 4-2 1 2-1 1-12 22-8 17z"/>
<path transform="scale(0.2)" fill="#e2344c" stroke="#e2344c" stroke-width="2.5" d="M2719 2069l-3-1-2-3-1-3 1-4 2-4 4-4 3-1 2 0 3 2-1 0 1 3-2 6-3 6zm0 -2l2-2 3-4 1-4 0-4 0-1-5 0-4 7 0 6 1 2zm11 1l-2 0-1-1 3-3 2 2zm7 1l-1-1 0-2 3 1 3-1 3-2 1-3-2-4-6-1 1-3 4-4 6-1 1 2-5 0-4 4 0 1 4 1 2 2 1 3-1 4-5 4zm20 3l-2-3 0-5 2-20 1-1 1 1-2 20 1 4 8-17 4-7 3-1 0 2-8 14-5 12z"/>
<path transform="scale(0.2)" fill="#e2344c" stroke="#e2344c" stroke-width="3.5" d="M2894 2291l-5-2-2-4-1-5 1-5 3-6 5-5 4-2 4 0 4 3-2 0 2 5-2 9-3 5-2 3zm-1 -3l4-3 4-5 2-6 0-6-1-1-7 0-3 5-3 5 0 8 2 3zm27 8l-3-4-1-8 3-29 2-1 1 1-2 29 0 6 13-25 6-10 3-1 1 1 0 2-12 20-8 17z"/>
<g fill="none" stroke="#2f55d4" stroke-width="1.4"><path d="M581.7 406 V391 M579.3 394 l2.4 -3.5 l2.4 3.5 M581.7 406.2 H611"/></g>
<path transform="scale(0.2)" fill="#2f55d4" stroke="#2f55d4" stroke-width="3.5" d="M3089 2050l-4-4-1-6 2-12 6-14 3-2 1 1 0 1-4 8-4 13-1 10 1 1 2 1 4-2 5-6 6-11 4-15 2 1-1 9-6 13-8 12-4 2zm25 -5l-3-1 1-1 11-6 2-1-3-3-9-5-1-1 3 0 9 4 5 5 0 2zm28 6l-3-4-1-8 3-26 2-1 1 2-2 25 0 6 12-22 5-9 3-2 1 3-11 19-7 15z"/>
<path transform="scale(0.2)" fill="#2f55d4" stroke="#2f55d4" stroke-width="2.5" d="M3180 2061l-3-1-2-3 3 2 4-1 7-5 2-6 1-4-1-3-2-2-4-1-5 14-2 5-1 0 5-19-2 0 0-1 5-1 4 1 3 3 1 3 0 4-1 5-2 4-5 3zm19 0l-4-1-1-3 3 2 4-1 7-5 2-6 0-4-1-3-2-2-3-1-6 14-1 5-1 0 5-19-2 0-1-1 6-1 4 1 3 3 1 3 0 4-1 5-3 4-4 3z"/>
<g fill="none" stroke="#eccf3a" stroke-width="1.2"><path d="M581.5 423.5 V438 M581.5 423.7 H593.8 M590.5 421 l3.3 2.7 l-3.3 2.4"/><path d="M595 423.7 H609" stroke-dasharray="1.2 1.5"/></g>
<path transform="scale(0.2)" fill="#eccf3a" stroke="#eccf3a" stroke-width="3.2" d="M3084 2148l-4-4-1-6 2-13 6-13 3-3 1 1 0 2-4 7-4 13-1 10 1 2 2 0 4-1 5-7 6-10 4-15 2 0-1 9-6 14-8 11-4 2zm34 -6l-8-3-4-5-1-1 15-9 2 1 0 1-13 8 3 3 11 4-1 1zm19 6l-3-4-1-7 3-27 2-1 1 2-2 26 0 5 12-22 5-9 3-1 1 3-11 18-7 15z"/>
<path transform="scale(0.2)" fill="#eccf3a" stroke="#eccf3a" stroke-width="2.2" d="M3176 2157l-3-2-1-2 5 2 3-1 1-2-8-7 0-4 7-7 5-1 2 0 2 3-2 4-2 0 2-5-3 0-6 4-3 4 0 2 6 5 2 3-2 3zm16 0l-3-2-1-2 5 2 3-1 1-2-8-7 0-4 7-7 5-1 2 0 2 3-3 4-1 0-1 0 3-5-3 0-7 4-2 4 0 2 6 5 2 3-2 3z"/>
<rect x="0" y="519.5" width="811" height="2" fill="#f2e2e6"/>
<rect x="0" y="521.3" width="811" height="5.3" fill="#2a7cc0"/>
<defs><linearGradient id="tb" x1="0" y1="0" x2="0" y2="1"><stop offset="0" stop-color="#2f3336"/><stop offset="1" stop-color="#1e2124"/></linearGradient></defs>
<rect x="0" y="526.6" width="811" height="16.8" fill="url(#tb)"/>
<rect x="3" y="521.3" width="67.5" height="21.7" fill="#2c3033" opacity=".92"/>
<rect x="59" y="530" width="11.5" height="9" fill="#8a7a50" opacity=".8"/>
<path transform="scale(0.2)" fill="#f2f2f2" d="M34 2682l40 0 0-6-28 1 10-10 8-9 5-9 2-9-1-7-4-5-6-4-8-1-5 0-5 2-9 6 5 5 6-5 4-2 3 0 6 1 3 2 2 4 1 4-2 8-5 9-9 10-13 11zm52 0l35 0 0-6-13 0 0-52-6 0-13 4 0 5 11 0 0 43-14 0zm65 2l8-2 7-6 4-10 1-13-1-13-4-10-7-5-8-2-8 2-6 5-4 10-2 13 2 13 4 10 6 6zm0 -6l-5-2-4-4-2-8-1-11 1-11 2-8 4-4 5-1 5 1 4 4 2 8 1 11-1 11-2 8-4 4zm50 6l8-2 5-4 4-6 2-8-1-8-4-5-6-4-7-1-4 1-7 3-3 3 1-11 4-8 5-4 6-1 3 0 7 4 5-4-7-5-8-1-9 2-8 5-5 10-2 14 2 13 4 9 7 6zm-13 -25l3-3 7-4 8 0 3 3 3 4 0 5-1 6-2 4-3 3-5 1-5-1-4-4-3-6zm60 25l8-2 6-6 4-10 2-13-2-13-4-10-6-5-8-2-8 2-7 5-4 10-1 13 1 13 4 10 7 6zm0 -6l-5-2-4-4-2-8-1-11 1-11 2-8 4-4 5-1 5 1 4 4 2 8 1 11-1 11-2 8-4 4zm36 6l4-2 2-4-2-4-4-2-4 2-2 4 2 4zm24 0l4-2 2-4-2-4-4-2-4 2-1 4 1 4zm25 0l4-2 1-4-1-4-4-2-5 2-1 4 1 4z"/>
<rect x="57" y="541.8" width="16" height="1.4" fill="#9fb3c8"/>
<rect x="109" y="541.8" width="16" height="1.4" fill="#9fb3c8"/>
<rect x="136" y="541.8" width="16" height="1.4" fill="#9fb3c8"/>
<rect x="160" y="541.8" width="20" height="1.4" fill="#9fb3c8"/>
<rect x="188" y="541.8" width="16" height="1.4" fill="#9fb3c8"/>
<rect x="157" y="527" width="26" height="14.8" fill="#4a4f55" opacity=".8"/>
<circle cx="91.3" cy="533.8" r="6.2" fill="#1f8fd6"/><path d="M85.5 532 q2 -6 8 -4.5 q4 1.5 3.5 5 h-7 q0 3 3.5 4 q2 .3 3 -.3 q-3 3.5 -7 2 q-4 -2 -4 -6.2z" fill="#45c06a"/><circle cx="91.8" cy="535" r="2.4" fill="#1c4b8a"/>
<rect x="111.5" y="527.8" width="12.5" height="12.5" rx="2.5" fill="#2f8ef0"/><path d="M114.5 530.5 l6 3 l-2.5 1 l1.5 3.5 l-5 -5.5 z" fill="#fff"/>
<ellipse cx="144" cy="533.5" rx="4.3" ry="5.3" fill="#f5f5f5"/><ellipse cx="144" cy="531" rx="3.2" ry="3" fill="#222"/><path d="M140 535.5 h8 l-1 2 h-6 z" fill="#e02a2a"/>
<circle cx="169.6" cy="533.8" r="6.5" fill="#4fa6e8"/><path d="M165 533 q4.5 -5 9 0 q-4.5 3.5 -9 0z" fill="#d8ecfa"/>
<rect x="189" y="527.5" width="13.7" height="13" rx="2.5" fill="#f2922a"/><circle cx="195" cy="534" r="3.5" fill="#fff"/><circle cx="195" cy="534" r="1.8" fill="#f2922a"/><circle cx="200.5" cy="539" r="2" fill="#ddd"/>
<g fill="none" stroke="#d0d0d0" stroke-width="1"><path d="M614.5 536 l3.5 -3.5 l3.5 3.5"/><path d="M630 537 v-3 q0 -4.5 4.5 -4.5 q4.5 0 4.5 4.5 v3"/><rect x="629.3" y="535" width="2" height="3.5" fill="#d0d0d0"/><rect x="637.8" y="535" width="2" height="3.5" fill="#d0d0d0"/><rect x="643.5" y="531" width="6" height="8" rx="1"/><path d="M645 529.5 h3"/></g>
<rect x="654.5" y="529" width="4" height="8.5" fill="#e6e6e6"/><rect x="655" y="537.5" width="3" height="2" fill="#aaa"/>
<rect x="665" y="529.5" width="8" height="8" fill="#2a7ad8"/><path d="M666.5 531 l5 3 l-5 2z" fill="#cfe6ff"/>
<path d="M676.5 533 h2 l2 -2 v6 l-2 -2 h-2z M682.5 532 q1 1.5 0 3" fill="#666" stroke="#666" stroke-width=".6"/>
<path d="M690 537.5 l3 -5 l3 5 z" fill="#555"/><rect x="696.5" y="531.5" width="7" height="5.5" fill="#e8e8e8"/>
<path transform="scale(0.2)" fill="#e8e8e8" d="M3580 2660l0 6-14 0 0 12-6 0 0 3 19 0-2 3-4 3-14 5 3 4 8-3 6-3 4-4 3-4 3 5 5 4 6 3 7 2 2-4-12-4-5-3-3-4 19 0 0-3-5 0 0-12-16 0 0-6zm-11 18l0-9 11 0 0 9zm27 0l-12 0 0-9 12 0zm-7 -29l0 5-14 0 0-5-3 0 0 5-11 0 0 4 11 0 0 5 3 0 0-5 14 0 0 5 4 0 0-5 11 0 0-4-11 0 0-5z"/>
<rect x="727.5" y="529.5" width="9" height="8.5" fill="none" stroke="#e0e0e0" stroke-width="1.1"/><path d="M729.5 532 h5 M729.5 534 h5 M729.5 536 h5" stroke="#e0e0e0" stroke-width=".6"/>
<path transform="scale(0.2)" fill="#e6e6e6" d="M3780 2655l13 0 0-2-5 0 0-21-7 2 0 1 4 0 0 18-5 0zm24 0l5-2 2-5 0-3-4-4-4 0-4 2 1-4 1-3 2-2 3 0 3 2 2-2-3-2-3 0-3 0-3 2-2 4 0 6 0 5 2 4 2 2zm-4 -9l3-3 3 0 2 3-1 6-3 1-1 0-3-4zm17 -3l1-1 1-1-1-2-1-1-2 1 0 2 0 1zm0 12l1 0 1-2-1-1-1-1-2 1 0 1 0 2zm6 0l14 0 0-2-10 0 7-8 1-3 1-7-4-3-5 0-5 3 2 2 4-3 3 0 1 1 1 3-2 7-8 8zm25 0l5-1 2-5-1-3-3-3 3-4-1-4-3-3-2 0-3 0-3 3 0 4 2 4-3 2-1 4 2 5zm1 -13l-5-3 0-3 2-2 3 0 2 2 0 3zm-1 11l-4-1-1-3 1-3 2-2 4 2 2 3-1 3z"/>
<path transform="scale(0.2)" fill="#eaeaea" d="M3737 2702l16 0 0-2-12 0 8-7 2-4 0-4 0-3-4-3-5 0-6 3 2 1 4-2 4 0 1 1 1 3 0 4-3 3-8 9zm27 1l4-1 2-2 2-4 0-5 0-6-2-4-2-2-4-1-3 1-3 2-1 4-1 6 1 5 1 4 3 2zm0 -2l-2-1-1-2-2-7 2-8 1-2 2 0 2 0 2 2 1 8-1 7-2 2zm12 1l16 0 0-2-12 0 8-7 2-4 0-4 0-3-4-3-5 0-6 3 2 1 4-2 4 0 1 1 1 3 0 4-3 3-8 9zm27 1l6-2 1-2 1-3-2-4-3-2 4-4 0-4-2-2-5-2-4 1-4 2 2 2 5-2 2 0 3 2-1 3-3 3-3 0 0 2 6 2 1 1 0 4-2 2-3 0-3 0-3-2-2 2 4 2zm10 5l3 0 10-31-2 0zm17 -6l14 0 0-2-5 0 0-21-8 1 0 2 5 0 0 18-6 0zm17 6l2 0 10-31-2 0zm16 -6l14 0 0-2-5 0 0-21-8 1 0 2 5 0 0 18-6 0zm18 0l16 0 0-2-11 0 7-7 2-4 1-4-1-3-3-3-6 0-5 3 2 1 3-2 4 0 2 1 1 3-1 4-2 3-9 9z"/>
<rect x="789.5" y="529.5" width="8" height="8" fill="#e8e8e8"/><path d="M791 531.5 h5 M791 533.5 h5" stroke="#888" stroke-width=".7"/><path d="M795 537.5 l2.5 -2.5 v2.5z" fill="#999"/>
<rect x="809" y="526.6" width="1" height="16.8" fill="#555"/>
<rect x="804.5" y="140.5" width="6.5" height="380.5" fill="#fdfdfd"/>
<rect x="795" y="299.5" width="15.5" height="32.6" rx="2.5" fill="#9a9a9a"/>
<path d="M800.8 310 l3.6 5.6 l-3.6 5.6" fill="none" stroke="#f4f4f4" stroke-width="1.1"/>
<rect x="806.3" y="151" width="3" height="27.6" rx="1" fill="#c6c6c6"/>
<path d="M806 146 h4 l-2 -2.5z" fill="#555"/>
<path d="M803 133 h5 l-2.5 3z" fill="#f0f0f0"/>
<path d="M42.8 295 v7.5 l1.8 -1.8 l1.5 2.6 l1.2 -.7 l-1.4 -2.5 h2.6 z" fill="#f4f4f4" stroke="#6a6a6a" stroke-width=".9"/></svg>
</body></html>
